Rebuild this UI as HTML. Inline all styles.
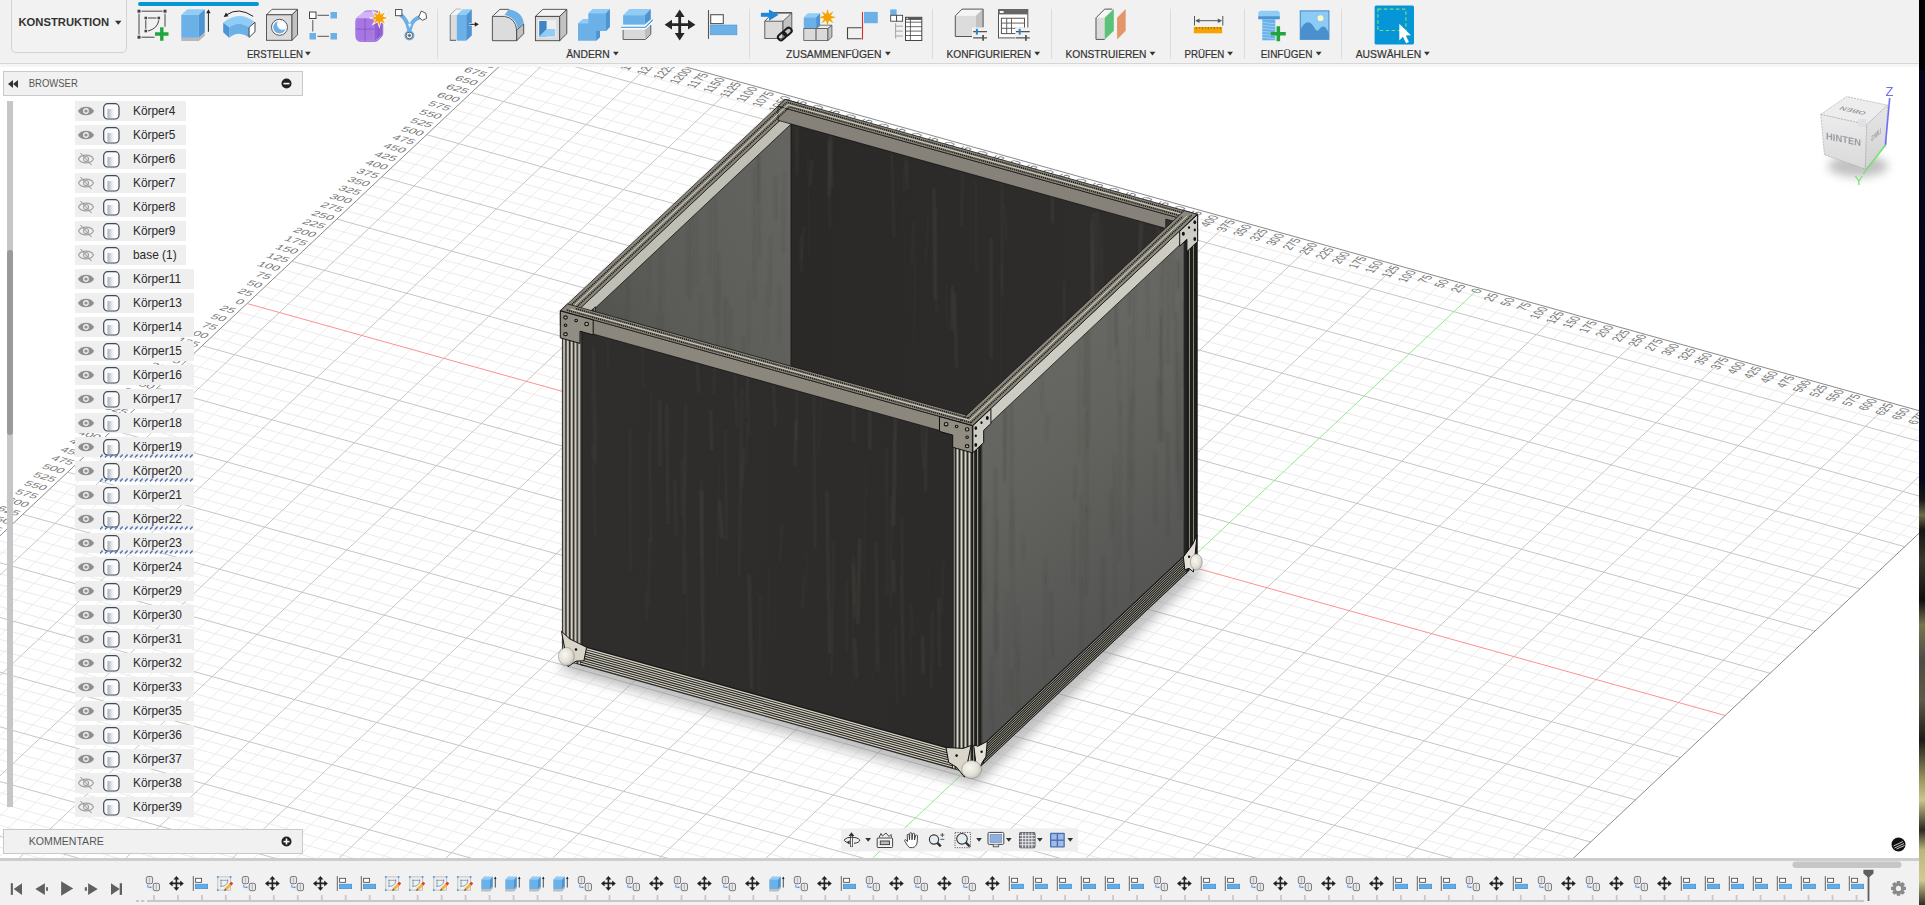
<!DOCTYPE html>
<html><head><meta charset="utf-8"><style>
*{margin:0;padding:0;box-sizing:border-box}
html,body{width:1925px;height:905px;overflow:hidden;background:#fff;font-family:"Liberation Sans", sans-serif}
#app{position:absolute;left:0;top:0;width:1919px;height:905px;overflow:hidden;background:#fff}
#strip{position:absolute;left:1919px;top:0;width:6px;height:905px;background:linear-gradient(180deg,#000 0,#000 70px,#03051a 70px,#050818 480px,#1a1a16 500px,#6e6a4a 515px,#151512 530px,#3a382c 560px,#0e0e0c 600px,#77744f 625px,#4d4b44 660px,#5e5a48 700px,#1a1a18 740px,#9a9660 780px,#c9c58c 800px,#2a2820 830px,#b9b57c 850px,#d0cc90 880px,#2e2c22 905px)}
#tb{position:absolute;left:0;top:0;width:1919px;height:64px;background:#f1f1f1;border-bottom:1px solid #d6d6d6}
#tb2{position:absolute;left:0;top:64px;width:1919px;height:3px;background:#f6f6f6}
.lbl{position:absolute;top:47px;font-size:10.6px;color:#3a3a3a;white-space:nowrap;letter-spacing:0.1px}
.sep{position:absolute;top:9px;width:1px;height:50px;background:#dcdcdc}
.ico{position:absolute}
#konst{position:absolute;left:11px;top:-6px;width:116px;height:59px;border:1px solid #d3d3d3;border-radius:5px;background:#f2f2f2}
.panel{position:absolute;left:3px;width:300px;height:25px;background:#f1f1f1;border:1px solid #c9c9c9}
.row{position:absolute;left:75px;height:20px;background:#efefef}
.rowt{position:absolute;left:58px;top:3px;line-height:14px;font-size:11.9px;color:#2a2a2a;white-space:nowrap}
#tl{position:absolute;left:0;top:858px;width:1919px;height:47px;background:#f1f1f1}
#nav{position:absolute;left:842px;top:828px;width:236px;height:24px;background:#eeeeee}
</style></head>
<body><div id="app">
<svg id="vp" width="1919" height="905" viewBox="0 0 1919 905" style="position:absolute;left:0;top:0">

<defs>
<filter id="blur" x="-20%" y="-20%" width="140%" height="140%"><feGaussianBlur stdDeviation="6"/></filter><filter id="soft" x="-5%" y="-5%" width="110%" height="110%"><feGaussianBlur stdDeviation="1.3"/></filter>
<linearGradient id="gInnerL" x1="0.9" y1="0" x2="0.1" y2="1"><stop offset="0" stop-color="#646560"/><stop offset="0.45" stop-color="#5b5c57"/><stop offset="0.8" stop-color="#4a4a47"/><stop offset="1" stop-color="#353533"/></linearGradient>
<linearGradient id="gInnerR" x1="0" y1="0" x2="1" y2="0"><stop offset="0" stop-color="#2a2927"/><stop offset="1" stop-color="#2f2e2c"/></linearGradient>
<linearGradient id="gFrontL" x1="0" y1="0" x2="1" y2="0"><stop offset="0" stop-color="#2f2e2c"/><stop offset="1" stop-color="#2c2b29"/></linearGradient>
<linearGradient id="gFrontR" x1="0" y1="0" x2="0.3" y2="1"><stop offset="0" stop-color="#6e6e6a"/><stop offset="0.5" stop-color="#62625e"/><stop offset="1" stop-color="#505050"/></linearGradient>
<pattern id="gPostL" patternUnits="userSpaceOnUse" width="3.8" height="10"><rect width="3.8" height="10" fill="#2a2a28"/><rect x="0.6" width="2" height="10" fill="#d9d5c6"/></pattern>
<pattern id="gPostL2" patternUnits="userSpaceOnUse" width="3.8" height="10"><rect width="3.8" height="10" fill="#1e1e1c"/><rect x="1" width="1.4" height="10" fill="#a9a597"/></pattern>
<radialGradient id="gBall" cx="0.4" cy="0.4" r="0.7"><stop offset="0" stop-color="#f8f8f2"/><stop offset="0.6" stop-color="#e2e0d6"/><stop offset="1" stop-color="#b9b7ad"/></radialGradient>
<pattern id="gPostF" patternUnits="userSpaceOnUse" width="4" height="10"><rect width="4" height="10" fill="#2a2a28"/><rect x="0.5" width="2" height="10" fill="#d9d5c6"/></pattern>
<pattern id="gPostF2" patternUnits="userSpaceOnUse" width="4" height="10"><rect width="4" height="10" fill="#1e1e1c"/><rect x="1" width="1.2" height="10" fill="#9a978c"/></pattern>
<pattern id="gPostR" patternUnits="userSpaceOnUse" width="4" height="10"><rect width="4" height="10" fill="#1e1e1c"/><rect x="1" width="1" height="10" fill="#8a877c"/></pattern>
<linearGradient id="gRailB" x1="0" y1="0" x2="0" y2="3" spreadMethod="repeat" gradientUnits="userSpaceOnUse"><stop offset="0" stop-color="#d8d4c4"/><stop offset="0.45" stop-color="#d8d4c4"/><stop offset="0.5" stop-color="#2a2a28"/><stop offset="1" stop-color="#2a2a28"/></linearGradient>
<linearGradient id="gRailB2" x1="0" y1="0" x2="0" y2="3" spreadMethod="repeat" gradientUnits="userSpaceOnUse"><stop offset="0" stop-color="#a8a597"/><stop offset="0.4" stop-color="#a8a597"/><stop offset="0.45" stop-color="#1e1e1c"/><stop offset="1" stop-color="#1e1e1c"/></linearGradient>
<linearGradient id="gTopStripe" x1="0" y1="0" x2="0" y2="1"><stop offset="0" stop-color="#3b3a36"/><stop offset="0.4" stop-color="#4a4843"/><stop offset="0.5" stop-color="#d2cebe"/><stop offset="0.6" stop-color="#4a4843"/><stop offset="1" stop-color="#3b3a36"/></linearGradient>
<linearGradient id="gTopStripe2" x1="0" y1="0" x2="1" y2="0"><stop offset="0" stop-color="#3b3a36"/><stop offset="0.4" stop-color="#4a4843"/><stop offset="0.5" stop-color="#d2cebe"/><stop offset="0.6" stop-color="#4a4843"/><stop offset="1" stop-color="#3b3a36"/></linearGradient>
</defs>

<clipPath id="vpclip"><rect x="0" y="66" width="1919" height="793"/></clipPath>
<g clip-path="url(#vpclip)">
<g shape-rendering="auto"><line x1="1137.0" y1="1251.6" x2="2005.8" y2="434.8" stroke="#ebebeb" stroke-width="1" />
<line x1="1120.6" y1="1247.0" x2="1989.3" y2="430.3" stroke="#ebebeb" stroke-width="1" />
<line x1="1087.6" y1="1237.8" x2="1956.4" y2="421.1" stroke="#ebebeb" stroke-width="1" />
<line x1="1071.2" y1="1233.2" x2="1940.0" y2="416.5" stroke="#ebebeb" stroke-width="1" />
<line x1="1054.7" y1="1228.7" x2="1923.5" y2="411.9" stroke="#ebebeb" stroke-width="1" />
<line x1="1038.3" y1="1224.1" x2="1907.0" y2="407.3" stroke="#ebebeb" stroke-width="1" />
<line x1="1005.3" y1="1214.9" x2="1874.1" y2="398.1" stroke="#ebebeb" stroke-width="1" />
<line x1="988.9" y1="1210.3" x2="1857.7" y2="393.6" stroke="#ebebeb" stroke-width="1" />
<line x1="972.4" y1="1205.7" x2="1841.2" y2="389.0" stroke="#ebebeb" stroke-width="1" />
<line x1="956.0" y1="1201.1" x2="1824.7" y2="384.4" stroke="#ebebeb" stroke-width="1" />
<line x1="923.0" y1="1192.0" x2="1791.8" y2="375.2" stroke="#ebebeb" stroke-width="1" />
<line x1="906.6" y1="1187.4" x2="1775.4" y2="370.6" stroke="#ebebeb" stroke-width="1" />
<line x1="890.1" y1="1182.8" x2="1758.9" y2="366.0" stroke="#ebebeb" stroke-width="1" />
<line x1="873.7" y1="1178.2" x2="1742.4" y2="361.4" stroke="#ebebeb" stroke-width="1" />
<line x1="840.7" y1="1169.0" x2="1709.5" y2="352.3" stroke="#ebebeb" stroke-width="1" />
<line x1="824.3" y1="1164.4" x2="1693.1" y2="347.7" stroke="#ebebeb" stroke-width="1" />
<line x1="807.8" y1="1159.8" x2="1676.6" y2="343.1" stroke="#ebebeb" stroke-width="1" />
<line x1="791.4" y1="1155.3" x2="1660.1" y2="338.5" stroke="#ebebeb" stroke-width="1" />
<line x1="758.4" y1="1146.1" x2="1627.2" y2="329.3" stroke="#ebebeb" stroke-width="1" />
<line x1="742.0" y1="1141.5" x2="1610.8" y2="324.8" stroke="#ebebeb" stroke-width="1" />
<line x1="725.5" y1="1136.9" x2="1594.3" y2="320.2" stroke="#ebebeb" stroke-width="1" />
<line x1="709.1" y1="1132.3" x2="1577.8" y2="315.6" stroke="#ebebeb" stroke-width="1" />
<line x1="676.1" y1="1123.2" x2="1544.9" y2="306.4" stroke="#ebebeb" stroke-width="1" />
<line x1="659.7" y1="1118.6" x2="1528.5" y2="301.8" stroke="#ebebeb" stroke-width="1" />
<line x1="643.2" y1="1114.0" x2="1512.0" y2="297.2" stroke="#ebebeb" stroke-width="1" />
<line x1="626.8" y1="1109.4" x2="1495.5" y2="292.6" stroke="#ebebeb" stroke-width="1" />
<line x1="593.8" y1="1100.2" x2="1462.6" y2="283.5" stroke="#ebebeb" stroke-width="1" />
<line x1="577.4" y1="1095.6" x2="1446.2" y2="278.9" stroke="#ebebeb" stroke-width="1" />
<line x1="560.9" y1="1091.0" x2="1429.7" y2="274.3" stroke="#ebebeb" stroke-width="1" />
<line x1="544.5" y1="1086.4" x2="1413.2" y2="269.7" stroke="#ebebeb" stroke-width="1" />
<line x1="511.5" y1="1077.3" x2="1380.3" y2="260.5" stroke="#ebebeb" stroke-width="1" />
<line x1="495.1" y1="1072.7" x2="1363.9" y2="255.9" stroke="#ebebeb" stroke-width="1" />
<line x1="478.6" y1="1068.1" x2="1347.4" y2="251.3" stroke="#ebebeb" stroke-width="1" />
<line x1="462.2" y1="1063.5" x2="1330.9" y2="246.8" stroke="#ebebeb" stroke-width="1" />
<line x1="429.2" y1="1054.3" x2="1298.0" y2="237.6" stroke="#ebebeb" stroke-width="1" />
<line x1="412.8" y1="1049.8" x2="1281.6" y2="233.0" stroke="#ebebeb" stroke-width="1" />
<line x1="396.3" y1="1045.2" x2="1265.1" y2="228.4" stroke="#ebebeb" stroke-width="1" />
<line x1="379.9" y1="1040.6" x2="1248.6" y2="223.8" stroke="#ebebeb" stroke-width="1" />
<line x1="346.9" y1="1031.4" x2="1215.7" y2="214.6" stroke="#ebebeb" stroke-width="1" />
<line x1="330.5" y1="1026.8" x2="1199.3" y2="210.1" stroke="#ebebeb" stroke-width="1" />
<line x1="314.0" y1="1022.2" x2="1182.8" y2="205.5" stroke="#ebebeb" stroke-width="1" />
<line x1="297.6" y1="1017.6" x2="1166.3" y2="200.9" stroke="#ebebeb" stroke-width="1" />
<line x1="264.6" y1="1008.5" x2="1133.4" y2="191.7" stroke="#ebebeb" stroke-width="1" />
<line x1="248.2" y1="1003.9" x2="1117.0" y2="187.1" stroke="#ebebeb" stroke-width="1" />
<line x1="231.7" y1="999.3" x2="1100.5" y2="182.5" stroke="#ebebeb" stroke-width="1" />
<line x1="215.3" y1="994.7" x2="1084.0" y2="177.9" stroke="#ebebeb" stroke-width="1" />
<line x1="182.3" y1="985.5" x2="1051.1" y2="168.8" stroke="#ebebeb" stroke-width="1" />
<line x1="165.9" y1="980.9" x2="1034.7" y2="164.2" stroke="#ebebeb" stroke-width="1" />
<line x1="149.4" y1="976.3" x2="1018.2" y2="159.6" stroke="#ebebeb" stroke-width="1" />
<line x1="133.0" y1="971.8" x2="1001.7" y2="155.0" stroke="#ebebeb" stroke-width="1" />
<line x1="100.0" y1="962.6" x2="968.8" y2="145.8" stroke="#ebebeb" stroke-width="1" />
<line x1="83.6" y1="958.0" x2="952.4" y2="141.2" stroke="#ebebeb" stroke-width="1" />
<line x1="67.1" y1="953.4" x2="935.9" y2="136.7" stroke="#ebebeb" stroke-width="1" />
<line x1="50.7" y1="948.8" x2="919.4" y2="132.1" stroke="#ebebeb" stroke-width="1" />
<line x1="17.7" y1="939.6" x2="886.5" y2="122.9" stroke="#ebebeb" stroke-width="1" />
<line x1="1.3" y1="935.1" x2="870.1" y2="118.3" stroke="#ebebeb" stroke-width="1" />
<line x1="-15.2" y1="930.5" x2="853.6" y2="113.7" stroke="#ebebeb" stroke-width="1" />
<line x1="-31.6" y1="925.9" x2="837.1" y2="109.1" stroke="#ebebeb" stroke-width="1" />
<line x1="-64.6" y1="916.7" x2="804.2" y2="100.0" stroke="#ebebeb" stroke-width="1" />
<line x1="-81.0" y1="912.1" x2="787.8" y2="95.4" stroke="#ebebeb" stroke-width="1" />
<line x1="-97.5" y1="907.5" x2="771.3" y2="90.8" stroke="#ebebeb" stroke-width="1" />
<line x1="-113.9" y1="902.9" x2="754.8" y2="86.2" stroke="#ebebeb" stroke-width="1" />
<line x1="-146.9" y1="893.8" x2="721.9" y2="77.0" stroke="#ebebeb" stroke-width="1" />
<line x1="-163.3" y1="889.2" x2="705.5" y2="72.4" stroke="#ebebeb" stroke-width="1" />
<line x1="-179.8" y1="884.6" x2="689.0" y2="67.8" stroke="#ebebeb" stroke-width="1" />
<line x1="-196.2" y1="880.0" x2="672.5" y2="63.3" stroke="#ebebeb" stroke-width="1" />
<line x1="-229.2" y1="870.8" x2="639.6" y2="54.1" stroke="#ebebeb" stroke-width="1" />
<line x1="-245.6" y1="866.2" x2="623.2" y2="49.5" stroke="#ebebeb" stroke-width="1" />
<line x1="-262.1" y1="861.7" x2="606.7" y2="44.9" stroke="#ebebeb" stroke-width="1" />
<line x1="-278.5" y1="857.1" x2="590.2" y2="40.3" stroke="#ebebeb" stroke-width="1" />
<line x1="-311.5" y1="847.9" x2="557.3" y2="31.1" stroke="#ebebeb" stroke-width="1" />
<line x1="1150.8" y1="1255.5" x2="-327.3" y2="843.5" stroke="#ebebeb" stroke-width="1" />
<line x1="1159.8" y1="1247.0" x2="-318.3" y2="835.1" stroke="#ebebeb" stroke-width="1" />
<line x1="1168.8" y1="1238.6" x2="-309.3" y2="826.6" stroke="#ebebeb" stroke-width="1" />
<line x1="1177.8" y1="1230.1" x2="-300.3" y2="818.2" stroke="#ebebeb" stroke-width="1" />
<line x1="1195.7" y1="1213.3" x2="-282.4" y2="801.3" stroke="#ebebeb" stroke-width="1" />
<line x1="1204.7" y1="1204.8" x2="-273.4" y2="792.9" stroke="#ebebeb" stroke-width="1" />
<line x1="1213.7" y1="1196.4" x2="-264.4" y2="784.4" stroke="#ebebeb" stroke-width="1" />
<line x1="1222.6" y1="1188.0" x2="-255.5" y2="776.0" stroke="#ebebeb" stroke-width="1" />
<line x1="1240.6" y1="1171.1" x2="-237.5" y2="759.1" stroke="#ebebeb" stroke-width="1" />
<line x1="1249.6" y1="1162.6" x2="-228.5" y2="750.7" stroke="#ebebeb" stroke-width="1" />
<line x1="1258.5" y1="1154.2" x2="-219.6" y2="742.2" stroke="#ebebeb" stroke-width="1" />
<line x1="1267.5" y1="1145.8" x2="-210.6" y2="733.8" stroke="#ebebeb" stroke-width="1" />
<line x1="1285.5" y1="1128.9" x2="-192.6" y2="716.9" stroke="#ebebeb" stroke-width="1" />
<line x1="1294.4" y1="1120.5" x2="-183.7" y2="708.5" stroke="#ebebeb" stroke-width="1" />
<line x1="1303.4" y1="1112.0" x2="-174.7" y2="700.1" stroke="#ebebeb" stroke-width="1" />
<line x1="1312.4" y1="1103.6" x2="-165.7" y2="691.6" stroke="#ebebeb" stroke-width="1" />
<line x1="1330.3" y1="1086.7" x2="-147.8" y2="674.7" stroke="#ebebeb" stroke-width="1" />
<line x1="1339.3" y1="1078.3" x2="-138.8" y2="666.3" stroke="#ebebeb" stroke-width="1" />
<line x1="1348.3" y1="1069.8" x2="-129.8" y2="657.9" stroke="#ebebeb" stroke-width="1" />
<line x1="1357.3" y1="1061.4" x2="-120.8" y2="649.4" stroke="#ebebeb" stroke-width="1" />
<line x1="1375.2" y1="1044.5" x2="-102.9" y2="632.6" stroke="#ebebeb" stroke-width="1" />
<line x1="1384.2" y1="1036.1" x2="-93.9" y2="624.1" stroke="#ebebeb" stroke-width="1" />
<line x1="1393.2" y1="1027.6" x2="-84.9" y2="615.7" stroke="#ebebeb" stroke-width="1" />
<line x1="1402.1" y1="1019.2" x2="-76.0" y2="607.2" stroke="#ebebeb" stroke-width="1" />
<line x1="1420.1" y1="1002.3" x2="-58.0" y2="590.4" stroke="#ebebeb" stroke-width="1" />
<line x1="1429.1" y1="993.9" x2="-49.0" y2="581.9" stroke="#ebebeb" stroke-width="1" />
<line x1="1438.0" y1="985.5" x2="-40.1" y2="573.5" stroke="#ebebeb" stroke-width="1" />
<line x1="1447.0" y1="977.0" x2="-31.1" y2="565.1" stroke="#ebebeb" stroke-width="1" />
<line x1="1465.0" y1="960.1" x2="-13.1" y2="548.2" stroke="#ebebeb" stroke-width="1" />
<line x1="1473.9" y1="951.7" x2="-4.2" y2="539.7" stroke="#ebebeb" stroke-width="1" />
<line x1="1482.9" y1="943.3" x2="4.8" y2="531.3" stroke="#ebebeb" stroke-width="1" />
<line x1="1491.9" y1="934.8" x2="13.8" y2="522.9" stroke="#ebebeb" stroke-width="1" />
<line x1="1509.8" y1="918.0" x2="31.7" y2="506.0" stroke="#ebebeb" stroke-width="1" />
<line x1="1518.8" y1="909.5" x2="40.7" y2="497.6" stroke="#ebebeb" stroke-width="1" />
<line x1="1527.8" y1="901.1" x2="49.7" y2="489.1" stroke="#ebebeb" stroke-width="1" />
<line x1="1536.8" y1="892.6" x2="58.7" y2="480.7" stroke="#ebebeb" stroke-width="1" />
<line x1="1554.7" y1="875.8" x2="76.6" y2="463.8" stroke="#ebebeb" stroke-width="1" />
<line x1="1563.7" y1="867.3" x2="85.6" y2="455.4" stroke="#ebebeb" stroke-width="1" />
<line x1="1572.7" y1="858.9" x2="94.6" y2="446.9" stroke="#ebebeb" stroke-width="1" />
<line x1="1581.6" y1="850.5" x2="103.5" y2="438.5" stroke="#ebebeb" stroke-width="1" />
<line x1="1599.6" y1="833.6" x2="121.5" y2="421.6" stroke="#ebebeb" stroke-width="1" />
<line x1="1608.6" y1="825.1" x2="130.5" y2="413.2" stroke="#ebebeb" stroke-width="1" />
<line x1="1617.5" y1="816.7" x2="139.4" y2="404.7" stroke="#ebebeb" stroke-width="1" />
<line x1="1626.5" y1="808.3" x2="148.4" y2="396.3" stroke="#ebebeb" stroke-width="1" />
<line x1="1644.5" y1="791.4" x2="166.4" y2="379.4" stroke="#ebebeb" stroke-width="1" />
<line x1="1653.4" y1="783.0" x2="175.3" y2="371.0" stroke="#ebebeb" stroke-width="1" />
<line x1="1662.4" y1="774.5" x2="184.3" y2="362.6" stroke="#ebebeb" stroke-width="1" />
<line x1="1671.4" y1="766.1" x2="193.3" y2="354.1" stroke="#ebebeb" stroke-width="1" />
<line x1="1689.3" y1="749.2" x2="211.2" y2="337.2" stroke="#ebebeb" stroke-width="1" />
<line x1="1698.3" y1="740.8" x2="220.2" y2="328.8" stroke="#ebebeb" stroke-width="1" />
<line x1="1707.3" y1="732.3" x2="229.2" y2="320.4" stroke="#ebebeb" stroke-width="1" />
<line x1="1716.3" y1="723.9" x2="238.2" y2="311.9" stroke="#ebebeb" stroke-width="1" />
<line x1="1734.2" y1="707.0" x2="256.1" y2="295.1" stroke="#ebebeb" stroke-width="1" />
<line x1="1743.2" y1="698.6" x2="265.1" y2="286.6" stroke="#ebebeb" stroke-width="1" />
<line x1="1752.2" y1="690.1" x2="274.1" y2="278.2" stroke="#ebebeb" stroke-width="1" />
<line x1="1761.1" y1="681.7" x2="283.0" y2="269.7" stroke="#ebebeb" stroke-width="1" />
<line x1="1779.1" y1="664.8" x2="301.0" y2="252.9" stroke="#ebebeb" stroke-width="1" />
<line x1="1788.1" y1="656.4" x2="310.0" y2="244.4" stroke="#ebebeb" stroke-width="1" />
<line x1="1797.0" y1="648.0" x2="318.9" y2="236.0" stroke="#ebebeb" stroke-width="1" />
<line x1="1806.0" y1="639.5" x2="327.9" y2="227.6" stroke="#ebebeb" stroke-width="1" />
<line x1="1824.0" y1="622.6" x2="345.9" y2="210.7" stroke="#ebebeb" stroke-width="1" />
<line x1="1832.9" y1="614.2" x2="354.8" y2="202.2" stroke="#ebebeb" stroke-width="1" />
<line x1="1841.9" y1="605.8" x2="363.8" y2="193.8" stroke="#ebebeb" stroke-width="1" />
<line x1="1850.9" y1="597.3" x2="372.8" y2="185.4" stroke="#ebebeb" stroke-width="1" />
<line x1="1868.8" y1="580.5" x2="390.7" y2="168.5" stroke="#ebebeb" stroke-width="1" />
<line x1="1877.8" y1="572.0" x2="399.7" y2="160.1" stroke="#ebebeb" stroke-width="1" />
<line x1="1886.8" y1="563.6" x2="408.7" y2="151.6" stroke="#ebebeb" stroke-width="1" />
<line x1="1895.8" y1="555.1" x2="417.7" y2="143.2" stroke="#ebebeb" stroke-width="1" />
<line x1="1913.7" y1="538.3" x2="435.6" y2="126.3" stroke="#ebebeb" stroke-width="1" />
<line x1="1922.7" y1="529.8" x2="444.6" y2="117.9" stroke="#ebebeb" stroke-width="1" />
<line x1="1931.7" y1="521.4" x2="453.6" y2="109.4" stroke="#ebebeb" stroke-width="1" />
<line x1="1940.6" y1="513.0" x2="462.5" y2="101.0" stroke="#ebebeb" stroke-width="1" />
<line x1="1958.6" y1="496.1" x2="480.5" y2="84.1" stroke="#ebebeb" stroke-width="1" />
<line x1="1967.6" y1="487.6" x2="489.5" y2="75.7" stroke="#ebebeb" stroke-width="1" />
<line x1="1976.5" y1="479.2" x2="498.4" y2="67.2" stroke="#ebebeb" stroke-width="1" />
<line x1="1985.5" y1="470.8" x2="507.4" y2="58.8" stroke="#ebebeb" stroke-width="1" />
<line x1="2003.5" y1="453.9" x2="525.4" y2="41.9" stroke="#ebebeb" stroke-width="1" />
<line x1="2012.4" y1="445.5" x2="534.3" y2="33.5" stroke="#ebebeb" stroke-width="1" />
<line x1="1104.1" y1="1242.4" x2="1972.9" y2="425.7" stroke="#c6c6c6" stroke-width="1" />
<line x1="1021.8" y1="1219.5" x2="1890.6" y2="402.7" stroke="#c6c6c6" stroke-width="1" />
<line x1="939.5" y1="1196.5" x2="1808.3" y2="379.8" stroke="#c6c6c6" stroke-width="1" />
<line x1="857.2" y1="1173.6" x2="1726.0" y2="356.9" stroke="#c6c6c6" stroke-width="1" />
<line x1="774.9" y1="1150.7" x2="1643.7" y2="333.9" stroke="#c6c6c6" stroke-width="1" />
<line x1="692.6" y1="1127.7" x2="1561.4" y2="311.0" stroke="#c6c6c6" stroke-width="1" />
<line x1="528.0" y1="1081.9" x2="1396.8" y2="265.1" stroke="#c6c6c6" stroke-width="1" />
<line x1="445.7" y1="1058.9" x2="1314.5" y2="242.2" stroke="#c6c6c6" stroke-width="1" />
<line x1="363.4" y1="1036.0" x2="1232.2" y2="219.2" stroke="#c6c6c6" stroke-width="1" />
<line x1="281.1" y1="1013.0" x2="1149.9" y2="196.3" stroke="#c6c6c6" stroke-width="1" />
<line x1="198.8" y1="990.1" x2="1067.6" y2="173.4" stroke="#c6c6c6" stroke-width="1" />
<line x1="116.5" y1="967.2" x2="985.3" y2="150.4" stroke="#c6c6c6" stroke-width="1" />
<line x1="34.2" y1="944.2" x2="903.0" y2="127.5" stroke="#c6c6c6" stroke-width="1" />
<line x1="-48.1" y1="921.3" x2="820.7" y2="104.5" stroke="#c6c6c6" stroke-width="1" />
<line x1="-130.4" y1="898.4" x2="738.4" y2="81.6" stroke="#c6c6c6" stroke-width="1" />
<line x1="-212.7" y1="875.4" x2="656.1" y2="58.7" stroke="#c6c6c6" stroke-width="1" />
<line x1="-295.0" y1="852.5" x2="573.8" y2="35.7" stroke="#c6c6c6" stroke-width="1" />
<line x1="1186.7" y1="1221.7" x2="-291.4" y2="809.7" stroke="#c6c6c6" stroke-width="1" />
<line x1="1231.6" y1="1179.5" x2="-246.5" y2="767.6" stroke="#c6c6c6" stroke-width="1" />
<line x1="1276.5" y1="1137.3" x2="-201.6" y2="725.4" stroke="#c6c6c6" stroke-width="1" />
<line x1="1321.4" y1="1095.1" x2="-156.7" y2="683.2" stroke="#c6c6c6" stroke-width="1" />
<line x1="1366.2" y1="1053.0" x2="-111.9" y2="641.0" stroke="#c6c6c6" stroke-width="1" />
<line x1="1411.1" y1="1010.8" x2="-67.0" y2="598.8" stroke="#c6c6c6" stroke-width="1" />
<line x1="1456.0" y1="968.6" x2="-22.1" y2="556.6" stroke="#c6c6c6" stroke-width="1" />
<line x1="1500.9" y1="926.4" x2="22.8" y2="514.4" stroke="#c6c6c6" stroke-width="1" />
<line x1="1545.7" y1="884.2" x2="67.6" y2="472.2" stroke="#c6c6c6" stroke-width="1" />
<line x1="1590.6" y1="842.0" x2="112.5" y2="430.1" stroke="#c6c6c6" stroke-width="1" />
<line x1="1635.5" y1="799.8" x2="157.4" y2="387.9" stroke="#c6c6c6" stroke-width="1" />
<line x1="1680.4" y1="757.6" x2="202.3" y2="345.7" stroke="#c6c6c6" stroke-width="1" />
<line x1="1770.1" y1="673.3" x2="292.0" y2="261.3" stroke="#c6c6c6" stroke-width="1" />
<line x1="1815.0" y1="631.1" x2="336.9" y2="219.1" stroke="#c6c6c6" stroke-width="1" />
<line x1="1859.9" y1="588.9" x2="381.8" y2="176.9" stroke="#c6c6c6" stroke-width="1" />
<line x1="1904.7" y1="546.7" x2="426.6" y2="134.7" stroke="#c6c6c6" stroke-width="1" />
<line x1="1949.6" y1="504.5" x2="471.5" y2="92.6" stroke="#c6c6c6" stroke-width="1" />
<line x1="1994.5" y1="462.3" x2="516.4" y2="50.4" stroke="#c6c6c6" stroke-width="1" />
<line x1="-327.3" y1="843.5" x2="541.5" y2="26.7" stroke="#8a8a8a" stroke-width="1" />
<line x1="2019.6" y1="438.7" x2="541.5" y2="26.7" stroke="#8a8a8a" stroke-width="1" />
<line x1="1150.8" y1="1255.5" x2="2019.6" y2="438.7" stroke="#8a8a8a" stroke-width="1" />
<line x1="1725.2" y1="715.5" x2="247.1" y2="303.5" stroke="#ff9090" stroke-width="1.0" />
<line x1="610.3" y1="1104.8" x2="1479.1" y2="288.0" stroke="#90ea90" stroke-width="1.0" /></g>
<g font-family="Liberation Sans, sans-serif" font-size="19.0" fill="#747474"><text transform="matrix(0.6584,0.1835,-0.3590,0.3375,-333.1,844.9)" text-anchor="end">1600</text>
<text transform="matrix(0.6584,0.1835,-0.3590,0.3375,-324.1,836.5)" text-anchor="end">1575</text>
<text transform="matrix(0.6584,0.1835,-0.3590,0.3375,-315.1,828.1)" text-anchor="end">1550</text>
<text transform="matrix(0.6584,0.1835,-0.3590,0.3375,-306.1,819.6)" text-anchor="end">1525</text>
<text transform="matrix(0.6584,0.1835,-0.3590,0.3375,-297.2,811.2)" text-anchor="end">1500</text>
<text transform="matrix(0.6584,0.1835,-0.3590,0.3375,-288.2,802.8)" text-anchor="end">1475</text>
<text transform="matrix(0.6584,0.1835,-0.3590,0.3375,-279.2,794.3)" text-anchor="end">1450</text>
<text transform="matrix(0.6584,0.1835,-0.3590,0.3375,-270.2,785.9)" text-anchor="end">1425</text>
<text transform="matrix(0.6584,0.1835,-0.3590,0.3375,-261.3,777.4)" text-anchor="end">1400</text>
<text transform="matrix(0.6584,0.1835,-0.3590,0.3375,-252.3,769.0)" text-anchor="end">1375</text>
<text transform="matrix(0.6584,0.1835,-0.3590,0.3375,-243.3,760.6)" text-anchor="end">1350</text>
<text transform="matrix(0.6584,0.1835,-0.3590,0.3375,-234.3,752.1)" text-anchor="end">1325</text>
<text transform="matrix(0.6584,0.1835,-0.3590,0.3375,-225.4,743.7)" text-anchor="end">1300</text>
<text transform="matrix(0.6584,0.1835,-0.3590,0.3375,-216.4,735.3)" text-anchor="end">1275</text>
<text transform="matrix(0.6584,0.1835,-0.3590,0.3375,-207.4,726.8)" text-anchor="end">1250</text>
<text transform="matrix(0.6584,0.1835,-0.3590,0.3375,-198.4,718.4)" text-anchor="end">1225</text>
<text transform="matrix(0.6584,0.1835,-0.3590,0.3375,-189.5,709.9)" text-anchor="end">1200</text>
<text transform="matrix(0.6584,0.1835,-0.3590,0.3375,-180.5,701.5)" text-anchor="end">1175</text>
<text transform="matrix(0.6584,0.1835,-0.3590,0.3375,-171.5,693.1)" text-anchor="end">1150</text>
<text transform="matrix(0.6584,0.1835,-0.3590,0.3375,-162.5,684.6)" text-anchor="end">1125</text>
<text transform="matrix(0.6584,0.1835,-0.3590,0.3375,-153.6,676.2)" text-anchor="end">1100</text>
<text transform="matrix(0.6584,0.1835,-0.3590,0.3375,-144.6,667.8)" text-anchor="end">1075</text>
<text transform="matrix(0.6584,0.1835,-0.3590,0.3375,-135.6,659.3)" text-anchor="end">1050</text>
<text transform="matrix(0.6584,0.1835,-0.3590,0.3375,-126.6,650.9)" text-anchor="end">1025</text>
<text transform="matrix(0.6584,0.1835,-0.3590,0.3375,-117.7,642.4)" text-anchor="end">1000</text>
<text transform="matrix(0.6584,0.1835,-0.3590,0.3375,-108.7,634.0)" text-anchor="end">975</text>
<text transform="matrix(0.6584,0.1835,-0.3590,0.3375,-99.7,625.6)" text-anchor="end">950</text>
<text transform="matrix(0.6584,0.1835,-0.3590,0.3375,-90.7,617.1)" text-anchor="end">925</text>
<text transform="matrix(0.6584,0.1835,-0.3590,0.3375,-81.8,608.7)" text-anchor="end">900</text>
<text transform="matrix(0.6584,0.1835,-0.3590,0.3375,-72.8,600.3)" text-anchor="end">875</text>
<text transform="matrix(0.6584,0.1835,-0.3590,0.3375,-63.8,591.8)" text-anchor="end">850</text>
<text transform="matrix(0.6584,0.1835,-0.3590,0.3375,-54.8,583.4)" text-anchor="end">825</text>
<text transform="matrix(0.6584,0.1835,-0.3590,0.3375,-45.9,574.9)" text-anchor="end">800</text>
<text transform="matrix(0.6584,0.1835,-0.3590,0.3375,-36.9,566.5)" text-anchor="end">775</text>
<text transform="matrix(0.6584,0.1835,-0.3590,0.3375,-27.9,558.1)" text-anchor="end">750</text>
<text transform="matrix(0.6584,0.1835,-0.3590,0.3375,-18.9,549.6)" text-anchor="end">725</text>
<text transform="matrix(0.6584,0.1835,-0.3590,0.3375,-10.0,541.2)" text-anchor="end">700</text>
<text transform="matrix(0.6584,0.1835,-0.3590,0.3375,-1.0,532.8)" text-anchor="end">675</text>
<text transform="matrix(0.6584,0.1835,-0.3590,0.3375,8.0,524.3)" text-anchor="end">650</text>
<text transform="matrix(0.6584,0.1835,-0.3590,0.3375,17.0,515.9)" text-anchor="end">625</text>
<text transform="matrix(0.6584,0.1835,-0.3590,0.3375,25.9,507.4)" text-anchor="end">600</text>
<text transform="matrix(0.6584,0.1835,-0.3590,0.3375,34.9,499.0)" text-anchor="end">575</text>
<text transform="matrix(0.6584,0.1835,-0.3590,0.3375,43.9,490.6)" text-anchor="end">550</text>
<text transform="matrix(0.6584,0.1835,-0.3590,0.3375,52.9,482.1)" text-anchor="end">525</text>
<text transform="matrix(0.6584,0.1835,-0.3590,0.3375,61.8,473.7)" text-anchor="end">500</text>
<text transform="matrix(0.6584,0.1835,-0.3590,0.3375,70.8,465.3)" text-anchor="end">475</text>
<text transform="matrix(0.6584,0.1835,-0.3590,0.3375,79.8,456.8)" text-anchor="end">450</text>
<text transform="matrix(0.6584,0.1835,-0.3590,0.3375,88.8,448.4)" text-anchor="end">425</text>
<text transform="matrix(0.6584,0.1835,-0.3590,0.3375,97.7,439.9)" text-anchor="end">400</text>
<text transform="matrix(0.6584,0.1835,-0.3590,0.3375,106.7,431.5)" text-anchor="end">375</text>
<text transform="matrix(0.6584,0.1835,-0.3590,0.3375,115.7,423.1)" text-anchor="end">350</text>
<text transform="matrix(0.6584,0.1835,-0.3590,0.3375,124.7,414.6)" text-anchor="end">325</text>
<text transform="matrix(0.6584,0.1835,-0.3590,0.3375,133.6,406.2)" text-anchor="end">300</text>
<text transform="matrix(0.6584,0.1835,-0.3590,0.3375,142.6,397.8)" text-anchor="end">275</text>
<text transform="matrix(0.6584,0.1835,-0.3590,0.3375,151.6,389.3)" text-anchor="end">250</text>
<text transform="matrix(0.6584,0.1835,-0.3590,0.3375,160.6,380.9)" text-anchor="end">225</text>
<text transform="matrix(0.6584,0.1835,-0.3590,0.3375,169.5,372.4)" text-anchor="end">200</text>
<text transform="matrix(0.6584,0.1835,-0.3590,0.3375,178.5,364.0)" text-anchor="end">175</text>
<text transform="matrix(0.6584,0.1835,-0.3590,0.3375,187.5,355.6)" text-anchor="end">150</text>
<text transform="matrix(0.6584,0.1835,-0.3590,0.3375,196.5,347.1)" text-anchor="end">125</text>
<text transform="matrix(0.6584,0.1835,-0.3590,0.3375,205.4,338.7)" text-anchor="end">100</text>
<text transform="matrix(0.6584,0.1835,-0.3590,0.3375,214.4,330.3)" text-anchor="end">75</text>
<text transform="matrix(0.6584,0.1835,-0.3590,0.3375,223.4,321.8)" text-anchor="end">50</text>
<text transform="matrix(0.6584,0.1835,-0.3590,0.3375,232.4,313.4)" text-anchor="end">25</text>
<text transform="matrix(0.6584,0.1835,-0.3590,0.3375,241.3,304.9)" text-anchor="end">0</text>
<text transform="matrix(0.6584,0.1835,-0.3590,0.3375,250.3,296.5)" text-anchor="end">25</text>
<text transform="matrix(0.6584,0.1835,-0.3590,0.3375,259.3,288.1)" text-anchor="end">50</text>
<text transform="matrix(0.6584,0.1835,-0.3590,0.3375,268.3,279.6)" text-anchor="end">75</text>
<text transform="matrix(0.6584,0.1835,-0.3590,0.3375,277.2,271.2)" text-anchor="end">100</text>
<text transform="matrix(0.6584,0.1835,-0.3590,0.3375,286.2,262.8)" text-anchor="end">125</text>
<text transform="matrix(0.6584,0.1835,-0.3590,0.3375,295.2,254.3)" text-anchor="end">150</text>
<text transform="matrix(0.6584,0.1835,-0.3590,0.3375,304.2,245.9)" text-anchor="end">175</text>
<text transform="matrix(0.6584,0.1835,-0.3590,0.3375,313.1,237.4)" text-anchor="end">200</text>
<text transform="matrix(0.6584,0.1835,-0.3590,0.3375,322.1,229.0)" text-anchor="end">225</text>
<text transform="matrix(0.6584,0.1835,-0.3590,0.3375,331.1,220.6)" text-anchor="end">250</text>
<text transform="matrix(0.6584,0.1835,-0.3590,0.3375,340.1,212.1)" text-anchor="end">275</text>
<text transform="matrix(0.6584,0.1835,-0.3590,0.3375,349.0,203.7)" text-anchor="end">300</text>
<text transform="matrix(0.6584,0.1835,-0.3590,0.3375,358.0,195.3)" text-anchor="end">325</text>
<text transform="matrix(0.6584,0.1835,-0.3590,0.3375,367.0,186.8)" text-anchor="end">350</text>
<text transform="matrix(0.6584,0.1835,-0.3590,0.3375,376.0,178.4)" text-anchor="end">375</text>
<text transform="matrix(0.6584,0.1835,-0.3590,0.3375,384.9,169.9)" text-anchor="end">400</text>
<text transform="matrix(0.6584,0.1835,-0.3590,0.3375,393.9,161.5)" text-anchor="end">425</text>
<text transform="matrix(0.6584,0.1835,-0.3590,0.3375,402.9,153.1)" text-anchor="end">450</text>
<text transform="matrix(0.6584,0.1835,-0.3590,0.3375,411.9,144.6)" text-anchor="end">475</text>
<text transform="matrix(0.6584,0.1835,-0.3590,0.3375,420.8,136.2)" text-anchor="end">500</text>
<text transform="matrix(0.6584,0.1835,-0.3590,0.3375,429.8,127.8)" text-anchor="end">525</text>
<text transform="matrix(0.6584,0.1835,-0.3590,0.3375,438.8,119.3)" text-anchor="end">550</text>
<text transform="matrix(0.6584,0.1835,-0.3590,0.3375,447.8,110.9)" text-anchor="end">575</text>
<text transform="matrix(0.6584,0.1835,-0.3590,0.3375,456.7,102.4)" text-anchor="end">600</text>
<text transform="matrix(0.6584,0.1835,-0.3590,0.3375,465.7,94.0)" text-anchor="end">625</text>
<text transform="matrix(0.6584,0.1835,-0.3590,0.3375,474.7,85.6)" text-anchor="end">650</text>
<text transform="matrix(0.6584,0.1835,-0.3590,0.3375,483.7,77.1)" text-anchor="end">675</text>
<text transform="matrix(0.6584,0.1835,-0.3590,0.3375,492.6,68.7)" text-anchor="end">700</text>
<text transform="matrix(0.6584,0.1835,-0.3590,0.3375,501.6,60.3)" text-anchor="end">725</text>
<text transform="matrix(0.6584,0.1835,-0.3590,0.3375,510.6,51.8)" text-anchor="end">750</text>
<text transform="matrix(0.6584,0.1835,-0.3590,0.3375,519.6,43.4)" text-anchor="end">775</text>
<text transform="matrix(0.6584,0.1835,-0.3590,0.3375,528.5,34.9)" text-anchor="end">800</text>
<text transform="matrix(0.3590,-0.3375,0.6584,0.1835,2009.3,437.1)" text-anchor="end">800</text>
<text transform="matrix(0.3590,-0.3375,0.6584,0.1835,1992.9,432.6)" text-anchor="end">775</text>
<text transform="matrix(0.3590,-0.3375,0.6584,0.1835,1976.4,428.0)" text-anchor="end">750</text>
<text transform="matrix(0.3590,-0.3375,0.6584,0.1835,1960.0,423.4)" text-anchor="end">725</text>
<text transform="matrix(0.3590,-0.3375,0.6584,0.1835,1943.5,418.8)" text-anchor="end">700</text>
<text transform="matrix(0.3590,-0.3375,0.6584,0.1835,1927.0,414.2)" text-anchor="end">675</text>
<text transform="matrix(0.3590,-0.3375,0.6584,0.1835,1910.6,409.6)" text-anchor="end">650</text>
<text transform="matrix(0.3590,-0.3375,0.6584,0.1835,1894.1,405.0)" text-anchor="end">625</text>
<text transform="matrix(0.3590,-0.3375,0.6584,0.1835,1877.7,400.4)" text-anchor="end">600</text>
<text transform="matrix(0.3590,-0.3375,0.6584,0.1835,1861.2,395.9)" text-anchor="end">575</text>
<text transform="matrix(0.3590,-0.3375,0.6584,0.1835,1844.7,391.3)" text-anchor="end">550</text>
<text transform="matrix(0.3590,-0.3375,0.6584,0.1835,1828.3,386.7)" text-anchor="end">525</text>
<text transform="matrix(0.3590,-0.3375,0.6584,0.1835,1811.8,382.1)" text-anchor="end">500</text>
<text transform="matrix(0.3590,-0.3375,0.6584,0.1835,1795.4,377.5)" text-anchor="end">475</text>
<text transform="matrix(0.3590,-0.3375,0.6584,0.1835,1778.9,372.9)" text-anchor="end">450</text>
<text transform="matrix(0.3590,-0.3375,0.6584,0.1835,1762.4,368.3)" text-anchor="end">425</text>
<text transform="matrix(0.3590,-0.3375,0.6584,0.1835,1746.0,363.7)" text-anchor="end">400</text>
<text transform="matrix(0.3590,-0.3375,0.6584,0.1835,1729.5,359.2)" text-anchor="end">375</text>
<text transform="matrix(0.3590,-0.3375,0.6584,0.1835,1713.1,354.6)" text-anchor="end">350</text>
<text transform="matrix(0.3590,-0.3375,0.6584,0.1835,1696.6,350.0)" text-anchor="end">325</text>
<text transform="matrix(0.3590,-0.3375,0.6584,0.1835,1680.1,345.4)" text-anchor="end">300</text>
<text transform="matrix(0.3590,-0.3375,0.6584,0.1835,1663.7,340.8)" text-anchor="end">275</text>
<text transform="matrix(0.3590,-0.3375,0.6584,0.1835,1647.2,336.2)" text-anchor="end">250</text>
<text transform="matrix(0.3590,-0.3375,0.6584,0.1835,1630.8,331.6)" text-anchor="end">225</text>
<text transform="matrix(0.3590,-0.3375,0.6584,0.1835,1614.3,327.0)" text-anchor="end">200</text>
<text transform="matrix(0.3590,-0.3375,0.6584,0.1835,1597.8,322.5)" text-anchor="end">175</text>
<text transform="matrix(0.3590,-0.3375,0.6584,0.1835,1581.4,317.9)" text-anchor="end">150</text>
<text transform="matrix(0.3590,-0.3375,0.6584,0.1835,1564.9,313.3)" text-anchor="end">125</text>
<text transform="matrix(0.3590,-0.3375,0.6584,0.1835,1548.5,308.7)" text-anchor="end">100</text>
<text transform="matrix(0.3590,-0.3375,0.6584,0.1835,1532.0,304.1)" text-anchor="end">75</text>
<text transform="matrix(0.3590,-0.3375,0.6584,0.1835,1515.5,299.5)" text-anchor="end">50</text>
<text transform="matrix(0.3590,-0.3375,0.6584,0.1835,1499.1,294.9)" text-anchor="end">25</text>
<text transform="matrix(0.3590,-0.3375,0.6584,0.1835,1482.6,290.3)" text-anchor="end">0</text>
<text transform="matrix(0.3590,-0.3375,0.6584,0.1835,1466.2,285.8)" text-anchor="end">25</text>
<text transform="matrix(0.3590,-0.3375,0.6584,0.1835,1449.7,281.2)" text-anchor="end">50</text>
<text transform="matrix(0.3590,-0.3375,0.6584,0.1835,1433.2,276.6)" text-anchor="end">75</text>
<text transform="matrix(0.3590,-0.3375,0.6584,0.1835,1416.8,272.0)" text-anchor="end">100</text>
<text transform="matrix(0.3590,-0.3375,0.6584,0.1835,1400.3,267.4)" text-anchor="end">125</text>
<text transform="matrix(0.3590,-0.3375,0.6584,0.1835,1383.9,262.8)" text-anchor="end">150</text>
<text transform="matrix(0.3590,-0.3375,0.6584,0.1835,1367.4,258.2)" text-anchor="end">175</text>
<text transform="matrix(0.3590,-0.3375,0.6584,0.1835,1350.9,253.6)" text-anchor="end">200</text>
<text transform="matrix(0.3590,-0.3375,0.6584,0.1835,1334.5,249.1)" text-anchor="end">225</text>
<text transform="matrix(0.3590,-0.3375,0.6584,0.1835,1318.0,244.5)" text-anchor="end">250</text>
<text transform="matrix(0.3590,-0.3375,0.6584,0.1835,1301.6,239.9)" text-anchor="end">275</text>
<text transform="matrix(0.3590,-0.3375,0.6584,0.1835,1285.1,235.3)" text-anchor="end">300</text>
<text transform="matrix(0.3590,-0.3375,0.6584,0.1835,1268.6,230.7)" text-anchor="end">325</text>
<text transform="matrix(0.3590,-0.3375,0.6584,0.1835,1252.2,226.1)" text-anchor="end">350</text>
<text transform="matrix(0.3590,-0.3375,0.6584,0.1835,1235.7,221.5)" text-anchor="end">375</text>
<text transform="matrix(0.3590,-0.3375,0.6584,0.1835,1219.3,216.9)" text-anchor="end">400</text>
<text transform="matrix(0.3590,-0.3375,0.6584,0.1835,1202.8,212.4)" text-anchor="end">425</text>
<text transform="matrix(0.3590,-0.3375,0.6584,0.1835,1186.3,207.8)" text-anchor="end">450</text>
<text transform="matrix(0.3590,-0.3375,0.6584,0.1835,1169.9,203.2)" text-anchor="end">475</text>
<text transform="matrix(0.3590,-0.3375,0.6584,0.1835,1153.4,198.6)" text-anchor="end">500</text>
<text transform="matrix(0.3590,-0.3375,0.6584,0.1835,1137.0,194.0)" text-anchor="end">525</text>
<text transform="matrix(0.3590,-0.3375,0.6584,0.1835,1120.5,189.4)" text-anchor="end">550</text>
<text transform="matrix(0.3590,-0.3375,0.6584,0.1835,1104.0,184.8)" text-anchor="end">575</text>
<text transform="matrix(0.3590,-0.3375,0.6584,0.1835,1087.6,180.2)" text-anchor="end">600</text>
<text transform="matrix(0.3590,-0.3375,0.6584,0.1835,1071.1,175.7)" text-anchor="end">625</text>
<text transform="matrix(0.3590,-0.3375,0.6584,0.1835,1054.7,171.1)" text-anchor="end">650</text>
<text transform="matrix(0.3590,-0.3375,0.6584,0.1835,1038.2,166.5)" text-anchor="end">675</text>
<text transform="matrix(0.3590,-0.3375,0.6584,0.1835,1021.7,161.9)" text-anchor="end">700</text>
<text transform="matrix(0.3590,-0.3375,0.6584,0.1835,1005.3,157.3)" text-anchor="end">725</text>
<text transform="matrix(0.3590,-0.3375,0.6584,0.1835,988.8,152.7)" text-anchor="end">750</text>
<text transform="matrix(0.3590,-0.3375,0.6584,0.1835,972.4,148.1)" text-anchor="end">775</text>
<text transform="matrix(0.3590,-0.3375,0.6584,0.1835,955.9,143.5)" text-anchor="end">800</text>
<text transform="matrix(0.3590,-0.3375,0.6584,0.1835,939.4,139.0)" text-anchor="end">825</text>
<text transform="matrix(0.3590,-0.3375,0.6584,0.1835,923.0,134.4)" text-anchor="end">850</text>
<text transform="matrix(0.3590,-0.3375,0.6584,0.1835,906.5,129.8)" text-anchor="end">875</text>
<text transform="matrix(0.3590,-0.3375,0.6584,0.1835,890.1,125.2)" text-anchor="end">900</text>
<text transform="matrix(0.3590,-0.3375,0.6584,0.1835,873.6,120.6)" text-anchor="end">925</text>
<text transform="matrix(0.3590,-0.3375,0.6584,0.1835,857.1,116.0)" text-anchor="end">950</text>
<text transform="matrix(0.3590,-0.3375,0.6584,0.1835,840.7,111.4)" text-anchor="end">975</text>
<text transform="matrix(0.3590,-0.3375,0.6584,0.1835,824.2,106.8)" text-anchor="end">1000</text>
<text transform="matrix(0.3590,-0.3375,0.6584,0.1835,807.8,102.3)" text-anchor="end">1025</text>
<text transform="matrix(0.3590,-0.3375,0.6584,0.1835,791.3,97.7)" text-anchor="end">1050</text>
<text transform="matrix(0.3590,-0.3375,0.6584,0.1835,774.8,93.1)" text-anchor="end">1075</text>
<text transform="matrix(0.3590,-0.3375,0.6584,0.1835,758.4,88.5)" text-anchor="end">1100</text>
<text transform="matrix(0.3590,-0.3375,0.6584,0.1835,741.9,83.9)" text-anchor="end">1125</text>
<text transform="matrix(0.3590,-0.3375,0.6584,0.1835,725.5,79.3)" text-anchor="end">1150</text>
<text transform="matrix(0.3590,-0.3375,0.6584,0.1835,709.0,74.7)" text-anchor="end">1175</text>
<text transform="matrix(0.3590,-0.3375,0.6584,0.1835,692.5,70.1)" text-anchor="end">1200</text>
<text transform="matrix(0.3590,-0.3375,0.6584,0.1835,676.1,65.6)" text-anchor="end">1225</text>
<text transform="matrix(0.3590,-0.3375,0.6584,0.1835,659.6,61.0)" text-anchor="end">1250</text>
<text transform="matrix(0.3590,-0.3375,0.6584,0.1835,643.2,56.4)" text-anchor="end">1275</text>
<text transform="matrix(0.3590,-0.3375,0.6584,0.1835,626.7,51.8)" text-anchor="end">1300</text>
<text transform="matrix(0.3590,-0.3375,0.6584,0.1835,610.2,47.2)" text-anchor="end">1325</text>
<text transform="matrix(0.3590,-0.3375,0.6584,0.1835,593.8,42.6)" text-anchor="end">1350</text>
<text transform="matrix(0.3590,-0.3375,0.6584,0.1835,577.3,38.0)" text-anchor="end">1375</text>
<text transform="matrix(0.3590,-0.3375,0.6584,0.1835,560.9,33.4)" text-anchor="end">1400</text></g>
<polygon points="976.1,785.8 558.0,669.3 786.7,454.3 1204.8,570.8" fill="#8a8a8a" filter="url(#blur)" opacity="0.55"/>
<polygon points="794.5,464.0 774.0,458.3 774.0,109.9 794.5,115.6" fill="#8f8b80" stroke="#151515" stroke-width="0.8" stroke-linejoin="round" />
<polygon points="794.5,464.0 805.6,453.5 805.6,105.1 794.5,115.6" fill="#9d9a90" stroke="#151515" stroke-width="0.8" stroke-linejoin="round" />
<polygon points="580.8,641.9 791.2,444.1 791.2,123.4 580.8,321.1" fill="url(#gInnerL)" stroke="#1a1a1a" stroke-width="0.7" stroke-linejoin="round" />
<polygon points="1177.0,551.6 791.2,444.1 791.2,123.4 1177.0,230.9" fill="url(#gInnerR)" stroke="#111" stroke-width="0.7" stroke-linejoin="round" />
<g filter="url(#soft)"><path d="M1001.9,295.8 L1002.1,183.0" stroke="#65635c" stroke-width="2.1" opacity="0.16"/><path d="M1103.5,333.5 L1101.9,222.2" stroke="#65635c" stroke-width="1.4" opacity="0.12"/><path d="M1139.1,284.6 L1141.5,221.9" stroke="#65635c" stroke-width="3.0" opacity="0.22"/><path d="M925.5,263.5 L928.1,217.1" stroke="#65635c" stroke-width="2.2" opacity="0.09"/><path d="M1101.4,386.3 L1101.6,356.6" stroke="#65635c" stroke-width="2.0" opacity="0.20"/><path d="M976.6,272.8 L975.8,179.2" stroke="#65635c" stroke-width="2.0" opacity="0.12"/><path d="M795.2,152.0 L794.1,125.0" stroke="#65635c" stroke-width="1.8" opacity="0.11"/><path d="M1063.9,409.8 L1064.4,280.6" stroke="#65635c" stroke-width="2.7" opacity="0.13"/><path d="M810.2,185.5 L811.7,160.1" stroke="#65635c" stroke-width="2.8" opacity="0.15"/><path d="M801.7,272.1 L801.0,236.2" stroke="#65635c" stroke-width="2.6" opacity="0.12"/><path d="M1140.5,379.3 L1139.1,222.8" stroke="#65635c" stroke-width="1.4" opacity="0.11"/><path d="M1135.2,431.7 L1136.9,298.7" stroke="#65635c" stroke-width="2.2" opacity="0.14"/><path d="M1101.2,289.4 L1100.4,245.7" stroke="#65635c" stroke-width="1.4" opacity="0.14"/><path d="M1092.8,378.4 L1091.2,220.9" stroke="#65635c" stroke-width="1.7" opacity="0.20"/><path d="M1093.6,354.0 L1092.9,212.5" stroke="#65635c" stroke-width="1.4" opacity="0.22"/><path d="M1092.6,380.7 L1093.5,250.7" stroke="#65635c" stroke-width="1.7" opacity="0.09"/><path d="M1139.3,329.5 L1138.8,270.8" stroke="#65635c" stroke-width="1.9" opacity="0.14"/><path d="M809.8,257.3 L807.8,153.3" stroke="#65635c" stroke-width="1.5" opacity="0.10"/><path d="M829.0,196.6 L830.6,137.5" stroke="#65635c" stroke-width="2.5" opacity="0.21"/><path d="M1099.0,245.6 L1098.4,209.9" stroke="#65635c" stroke-width="2.0" opacity="0.09"/><path d="M1158.8,259.8 L1157.8,226.4" stroke="#65635c" stroke-width="1.7" opacity="0.20"/><path d="M947.3,333.2 L946.1,283.4" stroke="#65635c" stroke-width="1.3" opacity="0.11"/><path d="M961.4,226.6 L962.5,172.0" stroke="#65635c" stroke-width="2.9" opacity="0.11"/><path d="M1167.2,399.3 L1169.5,313.9" stroke="#65635c" stroke-width="1.5" opacity="0.13"/><path d="M956.5,367.8 L954.5,292.5" stroke="#65635c" stroke-width="3.0" opacity="0.17"/><path d="M911.4,265.7 L913.8,221.6" stroke="#65635c" stroke-width="1.2" opacity="0.21"/><path d="M907.7,189.8 L907.0,161.0" stroke="#65635c" stroke-width="2.1" opacity="0.18"/><path d="M1052.6,223.0 L1052.3,197.0" stroke="#65635c" stroke-width="2.5" opacity="0.21"/><path d="M894.0,237.2 L891.8,152.3" stroke="#65635c" stroke-width="1.8" opacity="0.18"/><path d="M831.9,186.8 L830.3,135.2" stroke="#65635c" stroke-width="2.8" opacity="0.16"/><path d="M936.5,312.6 L935.9,207.9" stroke="#65635c" stroke-width="1.3" opacity="0.17"/><path d="M796.8,175.3 L797.4,126.0" stroke="#65635c" stroke-width="2.5" opacity="0.16"/><path d="M1006.4,242.0 L1005.1,204.5" stroke="#65635c" stroke-width="1.3" opacity="0.16"/><path d="M991.1,357.9 L991.1,237.7" stroke="#65635c" stroke-width="2.3" opacity="0.21"/><path d="M1076.5,425.0 L1075.6,358.3" stroke="#65635c" stroke-width="1.6" opacity="0.10"/><path d="M830.0,228.1 L828.0,142.0" stroke="#65635c" stroke-width="1.8" opacity="0.17"/><path d="M1098.2,348.1 L1096.0,212.7" stroke="#65635c" stroke-width="2.8" opacity="0.13"/><path d="M952.4,330.1 L952.4,285.9" stroke="#65635c" stroke-width="2.7" opacity="0.20"/><path d="M903.8,191.3 L905.5,156.1" stroke="#65635c" stroke-width="2.0" opacity="0.12"/><path d="M1092.3,349.8 L1092.4,239.4" stroke="#65635c" stroke-width="1.8" opacity="0.20"/><path d="M801.1,261.0 L803.6,225.8" stroke="#65635c" stroke-width="2.8" opacity="0.09"/><path d="M904.8,266.6 L903.2,198.6" stroke="#65635c" stroke-width="1.2" opacity="0.10"/><path d="M1001.0,401.3 L1002.4,263.7" stroke="#65635c" stroke-width="1.5" opacity="0.09"/><path d="M934.9,299.5 L934.1,188.3" stroke="#65635c" stroke-width="2.7" opacity="0.21"/><path d="M913.9,342.5 L915.6,253.0" stroke="#65635c" stroke-width="1.2" opacity="0.15"/><path d="M730.6,369.4 L730.1,307.2" stroke="#464642" stroke-width="2.5" opacity="0.20"/><path d="M710.0,274.7 L710.8,200.0" stroke="#464642" stroke-width="2.8" opacity="0.12"/><path d="M775.8,219.5 L775.6,176.3" stroke="#464642" stroke-width="2.3" opacity="0.28"/><path d="M660.8,358.0 L661.7,246.1" stroke="#464642" stroke-width="2.9" opacity="0.19"/><path d="M717.6,376.5 L718.5,252.3" stroke="#464642" stroke-width="2.4" opacity="0.24"/><path d="M627.0,324.3 L628.4,277.4" stroke="#464642" stroke-width="2.2" opacity="0.26"/><path d="M649.2,301.5 L648.7,258.3" stroke="#464642" stroke-width="1.3" opacity="0.19"/><path d="M696.7,284.8 L695.3,214.5" stroke="#464642" stroke-width="2.7" opacity="0.11"/><path d="M748.3,354.0 L749.1,282.1" stroke="#464642" stroke-width="1.5" opacity="0.13"/><path d="M689.7,300.2 L690.3,219.3" stroke="#464642" stroke-width="2.9" opacity="0.20"/><path d="M779.2,342.1 L779.3,286.4" stroke="#464642" stroke-width="1.7" opacity="0.25"/><path d="M715.0,316.1 L715.2,195.8" stroke="#464642" stroke-width="1.8" opacity="0.18"/><path d="M757.7,201.3 L758.7,154.9" stroke="#464642" stroke-width="2.9" opacity="0.20"/><path d="M701.4,392.5 L701.4,294.3" stroke="#464642" stroke-width="2.3" opacity="0.11"/><path d="M783.4,253.2 L784.2,172.4" stroke="#464642" stroke-width="2.2" opacity="0.20"/><path d="M725.8,396.3 L725.5,297.9" stroke="#464642" stroke-width="2.9" opacity="0.28"/><path d="M638.6,397.8 L638.4,355.0" stroke="#464642" stroke-width="2.7" opacity="0.28"/><path d="M681.4,388.3 L681.8,336.3" stroke="#464642" stroke-width="2.9" opacity="0.13"/><path d="M744.1,387.7 L743.3,336.4" stroke="#464642" stroke-width="2.4" opacity="0.16"/><path d="M656.4,352.1 L657.1,311.5" stroke="#464642" stroke-width="1.4" opacity="0.20"/><path d="M634.7,455.9 L634.5,358.6" stroke="#464642" stroke-width="1.9" opacity="0.18"/><path d="M692.4,409.2 L692.7,355.4" stroke="#464642" stroke-width="2.3" opacity="0.21"/><path d="M758.9,257.2 L758.2,155.4" stroke="#464642" stroke-width="2.5" opacity="0.26"/><path d="M769.6,305.7 L770.8,236.2" stroke="#464642" stroke-width="1.6" opacity="0.30"/><path d="M766.4,344.6 L767.1,285.9" stroke="#464642" stroke-width="1.7" opacity="0.12"/><path d="M755.0,298.5 L753.9,167.0" stroke="#464642" stroke-width="1.9" opacity="0.24"/><path d="M586.6,500.5 L587.8,381.3" stroke="#464642" stroke-width="2.9" opacity="0.12"/><path d="M687.5,295.5 L688.0,221.4" stroke="#464642" stroke-width="1.5" opacity="0.11"/><path d="M604.9,515.6 L604.9,415.2" stroke="#464642" stroke-width="2.2" opacity="0.13"/><path d="M621.1,467.5 L622.5,326.8" stroke="#464642" stroke-width="2.9" opacity="0.12"/></g>
<polygon points="573.6,328.5 560.4,324.9 560.4,310.7 573.6,314.4" fill="#8f8b80" stroke="#151515" stroke-width="0.8" stroke-linejoin="round" />
<polygon points="573.6,328.5 798.3,117.3 798.3,103.1 573.6,314.4" fill="#c0bfb5" stroke="#151515" stroke-width="0.8" stroke-linejoin="round" />
<polygon points="573.6,314.4 560.4,310.7 785.2,99.4 798.3,103.1" fill="#8a877c" stroke="#151515" stroke-width="0.8" stroke-linejoin="round" />
<polygon points="1190.1,235.2 778.0,120.3 778.0,106.2 1190.1,221.1" fill="#86827a" stroke="#151515" stroke-width="0.8" stroke-linejoin="round" />
<polygon points="1190.1,235.2 1197.3,228.5 1197.3,214.3 1190.1,221.1" fill="#c0bfb5" stroke="#151515" stroke-width="0.8" stroke-linejoin="round" />
<polygon points="1190.1,221.1 778.0,106.2 785.2,99.4 1197.3,214.3" fill="#8a877c" stroke="#151515" stroke-width="0.8" stroke-linejoin="round" />
<line x1="566.1" y1="309.8" x2="786.8" y2="102.3" stroke="#1e1d1b" stroke-width="1.6" stroke-dasharray="1.2,0.8"/>
<line x1="1191.6" y1="215.2" x2="786.8" y2="102.3" stroke="#1e1d1b" stroke-width="1.6" stroke-dasharray="1.2,0.8"/>
<line x1="575.1" y1="308.5" x2="789.5" y2="106.9" stroke="#1e1d1b" stroke-width="1.6" stroke-dasharray="1.2,0.8"/>
<line x1="1182.7" y1="216.5" x2="789.5" y2="106.9" stroke="#1e1d1b" stroke-width="1.6" stroke-dasharray="1.2,0.8"/>
<line x1="570.6" y1="309.2" x2="788.2" y2="104.6" stroke="#d2cebe" stroke-width="1.0" />
<line x1="1187.2" y1="215.8" x2="788.2" y2="104.6" stroke="#d2cebe" stroke-width="1.0" />
<polygon points="584.1,665.7 562.4,659.7 562.4,311.3 584.1,317.3" fill="url(#gPostL)" stroke="#151515" stroke-width="0.8" stroke-linejoin="round" />
<polygon points="584.1,665.7 595.3,655.3 595.3,306.8 584.1,317.3" fill="url(#gPostL2)" stroke="#151515" stroke-width="0.8" stroke-linejoin="round" />
<polygon points="1186.2,573.2 1165.8,567.5 1165.8,219.1 1186.2,224.8" fill="#333" stroke="#151515" stroke-width="0.8" stroke-linejoin="round" />
<polygon points="1186.2,573.2 1197.3,562.7 1197.3,214.3 1186.2,224.8" fill="url(#gPostR)" stroke="#151515" stroke-width="0.8" stroke-linejoin="round" />
<polygon points="972.6,774.0 952.2,768.3 952.2,419.9 972.6,425.6" fill="url(#gPostF)" stroke="#151515" stroke-width="0.8" stroke-linejoin="round" />
<polygon points="972.6,774.0 983.7,763.5 983.7,415.1 972.6,425.6" fill="url(#gPostF2)" stroke="#151515" stroke-width="0.8" stroke-linejoin="round" />
<polygon points="953.3,759.6 581.9,656.1 581.9,329.5 953.3,433.0" fill="url(#gFrontL)" stroke="#111" stroke-width="0.8" stroke-linejoin="round" />
<polygon points="981.7,755.2 1184.2,564.9 1184.2,238.4 981.7,428.7" fill="url(#gFrontR)" stroke="#111" stroke-width="0.8" stroke-linejoin="round" />
<g filter="url(#soft)"><path d="M831.7,675.0 L833.9,540.9" stroke="#6a6860" stroke-width="2.2" opacity="0.13"/><path d="M928.6,597.1 L929.0,565.2" stroke="#6a6860" stroke-width="1.3" opacity="0.09"/><path d="M794.9,465.9 L796.4,419.8" stroke="#6a6860" stroke-width="2.3" opacity="0.21"/><path d="M739.3,576.9 L741.7,388.4" stroke="#6a6860" stroke-width="2.7" opacity="0.12"/><path d="M897.2,703.0 L895.5,625.2" stroke="#6a6860" stroke-width="1.5" opacity="0.16"/><path d="M716.7,577.8 L719.0,461.0" stroke="#6a6860" stroke-width="1.3" opacity="0.11"/><path d="M701.6,557.4 L701.2,478.9" stroke="#6a6860" stroke-width="2.0" opacity="0.12"/><path d="M660.0,465.9 L659.6,399.1" stroke="#6a6860" stroke-width="2.1" opacity="0.20"/><path d="M683.7,593.5 L685.7,404.1" stroke="#6a6860" stroke-width="2.0" opacity="0.19"/><path d="M894.4,593.0 L893.5,560.4" stroke="#6a6860" stroke-width="2.6" opacity="0.16"/><path d="M630.5,571.0 L630.0,428.7" stroke="#6a6860" stroke-width="2.2" opacity="0.14"/><path d="M643.4,388.9 L642.5,346.7" stroke="#6a6860" stroke-width="1.3" opacity="0.18"/><path d="M713.7,394.3 L714.9,366.8" stroke="#6a6860" stroke-width="1.9" opacity="0.17"/><path d="M941.6,614.2 L943.6,560.9" stroke="#6a6860" stroke-width="1.3" opacity="0.19"/><path d="M902.6,666.3 L900.7,574.6" stroke="#6a6860" stroke-width="1.3" opacity="0.14"/><path d="M749.4,436.5 L747.5,375.9" stroke="#6a6860" stroke-width="1.7" opacity="0.14"/><path d="M818.9,455.7 L820.8,396.3" stroke="#6a6860" stroke-width="1.5" opacity="0.11"/><path d="M864.7,585.9 L865.9,461.9" stroke="#6a6860" stroke-width="1.2" opacity="0.14"/><path d="M815.1,548.1 L814.1,394.5" stroke="#6a6860" stroke-width="2.1" opacity="0.17"/><path d="M703.1,667.7 L701.7,490.9" stroke="#6a6860" stroke-width="2.8" opacity="0.19"/><path d="M806.7,595.1 L806.0,551.8" stroke="#6a6860" stroke-width="1.3" opacity="0.09"/><path d="M873.6,683.4 L876.0,601.3" stroke="#6a6860" stroke-width="1.2" opacity="0.10"/><path d="M912.8,635.0 L910.8,604.5" stroke="#6a6860" stroke-width="2.3" opacity="0.10"/><path d="M857.8,624.5 L859.8,538.3" stroke="#6a6860" stroke-width="2.7" opacity="0.22"/><path d="M779.8,562.6 L781.9,523.0" stroke="#6a6860" stroke-width="1.8" opacity="0.12"/><path d="M647.5,620.6 L645.1,590.3" stroke="#6a6860" stroke-width="2.2" opacity="0.10"/><path d="M751.7,689.2 L749.1,574.3" stroke="#6a6860" stroke-width="2.8" opacity="0.18"/><path d="M854.5,617.9 L853.1,563.8" stroke="#6a6860" stroke-width="2.2" opacity="0.19"/><path d="M829.5,653.2 L827.0,490.9" stroke="#6a6860" stroke-width="2.7" opacity="0.19"/><path d="M651.3,451.4 L651.2,387.7" stroke="#6a6860" stroke-width="1.8" opacity="0.08"/><path d="M939.6,667.3 L938.6,597.8" stroke="#6a6860" stroke-width="2.9" opacity="0.14"/><path d="M608.0,366.3 L608.7,337.2" stroke="#6a6860" stroke-width="1.6" opacity="0.11"/><path d="M878.0,672.2 L875.9,541.4" stroke="#6a6860" stroke-width="2.7" opacity="0.15"/><path d="M711.6,450.6 L710.8,410.4" stroke="#6a6860" stroke-width="2.8" opacity="0.19"/><path d="M676.2,535.4 L674.7,479.3" stroke="#6a6860" stroke-width="1.8" opacity="0.19"/><path d="M595.4,537.1 L593.0,443.5" stroke="#6a6860" stroke-width="2.5" opacity="0.10"/><path d="M903.5,695.0 L901.8,517.2" stroke="#6a6860" stroke-width="1.5" opacity="0.20"/><path d="M592.2,459.3 L592.0,374.8" stroke="#6a6860" stroke-width="1.4" opacity="0.08"/><path d="M595.7,462.5 L593.4,347.9" stroke="#6a6860" stroke-width="2.0" opacity="0.20"/><path d="M648.4,606.3 L649.5,538.6" stroke="#6a6860" stroke-width="1.6" opacity="0.16"/><path d="M855.2,602.7 L853.0,554.4" stroke="#6a6860" stroke-width="1.8" opacity="0.14"/><path d="M737.0,426.9 L734.8,372.4" stroke="#6a6860" stroke-width="2.1" opacity="0.15"/><path d="M758.8,693.6 L760.5,594.6" stroke="#6a6860" stroke-width="1.2" opacity="0.19"/><path d="M886.9,595.5 L886.6,448.2" stroke="#6a6860" stroke-width="1.8" opacity="0.15"/><path d="M747.2,465.1 L746.9,421.5" stroke="#6a6860" stroke-width="1.6" opacity="0.12"/><path d="M668.1,524.4 L666.7,404.2" stroke="#6a6860" stroke-width="2.8" opacity="0.14"/><path d="M726.4,541.3 L725.4,429.5" stroke="#6a6860" stroke-width="2.0" opacity="0.15"/><path d="M775.4,426.7 L773.4,383.1" stroke="#6a6860" stroke-width="2.9" opacity="0.12"/><path d="M745.7,417.9 L747.6,375.9" stroke="#6a6860" stroke-width="1.4" opacity="0.14"/><path d="M923.3,674.2 L922.4,635.9" stroke="#6a6860" stroke-width="2.6" opacity="0.21"/><path d="M893.5,525.9 L895.3,417.1" stroke="#6a6860" stroke-width="2.8" opacity="0.22"/><path d="M869.7,449.7 L869.8,410.0" stroke="#6a6860" stroke-width="3.0" opacity="0.20"/><path d="M890.9,608.9 L891.7,497.1" stroke="#6a6860" stroke-width="1.6" opacity="0.12"/><path d="M686.4,673.2 L686.7,554.8" stroke="#6a6860" stroke-width="1.2" opacity="0.13"/><path d="M722.2,538.2 L719.7,500.9" stroke="#6a6860" stroke-width="2.6" opacity="0.22"/><path d="M911.6,663.6 L910.1,630.8" stroke="#6a6860" stroke-width="1.7" opacity="0.10"/><path d="M795.8,441.2 L797.0,389.7" stroke="#6a6860" stroke-width="1.5" opacity="0.21"/><path d="M741.7,488.2 L744.0,448.1" stroke="#6a6860" stroke-width="2.4" opacity="0.14"/><path d="M923.4,468.8 L921.8,424.5" stroke="#6a6860" stroke-width="1.4" opacity="0.20"/><path d="M925.5,491.7 L926.3,425.8" stroke="#6a6860" stroke-width="2.2" opacity="0.21"/><path d="M852.1,687.1 L853.5,573.5" stroke="#6a6860" stroke-width="1.4" opacity="0.10"/><path d="M931.4,687.9 L932.4,610.1" stroke="#6a6860" stroke-width="2.6" opacity="0.12"/><path d="M767.4,649.2 L769.9,566.0" stroke="#6a6860" stroke-width="1.7" opacity="0.08"/><path d="M682.4,515.7 L682.5,458.2" stroke="#6a6860" stroke-width="2.9" opacity="0.09"/><path d="M651.1,541.9 L649.3,432.8" stroke="#6a6860" stroke-width="1.9" opacity="0.15"/><path d="M698.9,393.3 L697.2,361.9" stroke="#6a6860" stroke-width="2.5" opacity="0.17"/><path d="M802.2,608.9 L804.1,574.6" stroke="#6a6860" stroke-width="1.3" opacity="0.18"/><path d="M856.6,678.3 L854.8,637.9" stroke="#6a6860" stroke-width="2.8" opacity="0.17"/><path d="M847.0,652.4 L847.2,577.6" stroke="#6a6860" stroke-width="1.5" opacity="0.14"/><path d="M853.8,442.5 L853.5,405.5" stroke="#6a6860" stroke-width="1.6" opacity="0.22"/><path d="M1045.4,584.4 L1045.1,558.8" stroke="#41413d" stroke-width="2.1" opacity="0.20"/><path d="M1023.8,561.1 L1023.2,535.1" stroke="#41413d" stroke-width="1.4" opacity="0.18"/><path d="M992.2,732.8 L991.4,656.8" stroke="#41413d" stroke-width="2.3" opacity="0.21"/><path d="M1133.1,413.4 L1134.2,285.8" stroke="#41413d" stroke-width="1.9" opacity="0.17"/><path d="M1179.7,519.1 L1180.1,371.7" stroke="#41413d" stroke-width="1.3" opacity="0.27"/><path d="M1161.3,395.8 L1162.2,259.5" stroke="#41413d" stroke-width="1.5" opacity="0.20"/><path d="M1084.2,407.2 L1085.1,331.9" stroke="#41413d" stroke-width="2.3" opacity="0.28"/><path d="M1119.7,415.5 L1118.3,352.5" stroke="#41413d" stroke-width="1.4" opacity="0.17"/><path d="M1004.7,481.6 L1005.1,407.2" stroke="#41413d" stroke-width="2.3" opacity="0.24"/><path d="M1081.2,654.7 L1081.9,494.7" stroke="#41413d" stroke-width="2.1" opacity="0.21"/><path d="M1115.0,604.5 L1114.3,456.0" stroke="#41413d" stroke-width="1.3" opacity="0.15"/><path d="M1128.9,550.4 L1130.3,399.5" stroke="#41413d" stroke-width="2.1" opacity="0.18"/><path d="M1079.1,456.4 L1079.5,337.3" stroke="#41413d" stroke-width="2.4" opacity="0.12"/><path d="M1013.2,644.9 L1012.6,495.2" stroke="#41413d" stroke-width="2.2" opacity="0.10"/><path d="M995.9,656.8 L996.5,518.0" stroke="#41413d" stroke-width="2.4" opacity="0.16"/><path d="M1086.6,513.9 L1085.5,411.1" stroke="#41413d" stroke-width="2.8" opacity="0.14"/><path d="M1178.4,288.8 L1178.3,260.2" stroke="#41413d" stroke-width="2.7" opacity="0.29"/><path d="M1073.3,584.1 L1074.5,522.0" stroke="#41413d" stroke-width="1.6" opacity="0.22"/><path d="M1012.1,566.5 L1011.0,401.6" stroke="#41413d" stroke-width="2.7" opacity="0.20"/><path d="M1160.3,374.4 L1161.4,308.8" stroke="#41413d" stroke-width="2.1" opacity="0.10"/><path d="M984.6,601.8 L984.0,501.1" stroke="#41413d" stroke-width="1.5" opacity="0.17"/><path d="M1046.7,440.8 L1047.5,414.1" stroke="#41413d" stroke-width="2.7" opacity="0.12"/><path d="M1168.1,364.1 L1167.5,254.5" stroke="#41413d" stroke-width="1.9" opacity="0.18"/><path d="M1182.5,387.1 L1182.3,301.1" stroke="#41413d" stroke-width="1.7" opacity="0.11"/><path d="M1004.1,482.5 L1005.4,407.8" stroke="#41413d" stroke-width="1.6" opacity="0.15"/><path d="M1085.5,595.8 L1086.8,506.3" stroke="#41413d" stroke-width="2.8" opacity="0.26"/><path d="M1109.3,360.4 L1109.5,309.0" stroke="#41413d" stroke-width="2.5" opacity="0.11"/><path d="M1129.5,477.6 L1129.9,325.4" stroke="#41413d" stroke-width="1.7" opacity="0.11"/><path d="M1168.2,536.5 L1167.7,432.1" stroke="#41413d" stroke-width="1.7" opacity="0.25"/><path d="M1178.0,488.1 L1177.5,353.0" stroke="#41413d" stroke-width="2.2" opacity="0.18"/><path d="M1017.2,668.3 L1018.3,606.7" stroke="#41413d" stroke-width="2.1" opacity="0.14"/><path d="M1164.1,284.5 L1163.1,258.7" stroke="#41413d" stroke-width="1.5" opacity="0.12"/><path d="M1051.9,656.5 L1051.2,591.3" stroke="#41413d" stroke-width="2.2" opacity="0.28"/><path d="M1133.0,485.6 L1133.0,390.4" stroke="#41413d" stroke-width="1.9" opacity="0.17"/><path d="M996.2,653.9 L995.1,467.1" stroke="#41413d" stroke-width="2.1" opacity="0.23"/><path d="M1155.5,522.3 L1154.8,451.9" stroke="#41413d" stroke-width="1.9" opacity="0.19"/><path d="M1173.6,319.1 L1172.2,250.1" stroke="#41413d" stroke-width="1.3" opacity="0.24"/><path d="M1162.0,440.4 L1160.6,317.7" stroke="#41413d" stroke-width="1.9" opacity="0.29"/><path d="M1148.1,341.1 L1147.3,273.5" stroke="#41413d" stroke-width="1.4" opacity="0.13"/><path d="M1087.8,448.8 L1088.4,328.9" stroke="#41413d" stroke-width="2.4" opacity="0.25"/><path d="M1074.8,499.4 L1075.6,466.2" stroke="#41413d" stroke-width="1.6" opacity="0.28"/><path d="M1112.3,537.1 L1111.5,490.6" stroke="#41413d" stroke-width="2.3" opacity="0.24"/><path d="M1006.2,705.5 L1006.4,591.7" stroke="#41413d" stroke-width="1.9" opacity="0.14"/><path d="M1103.4,631.7 L1103.3,555.6" stroke="#41413d" stroke-width="2.9" opacity="0.23"/><path d="M1159.6,442.1 L1158.9,377.7" stroke="#41413d" stroke-width="2.9" opacity="0.24"/><path d="M1045.0,683.3 L1045.5,573.6" stroke="#41413d" stroke-width="2.0" opacity="0.15"/><path d="M1116.6,350.1 L1115.3,303.6" stroke="#41413d" stroke-width="1.8" opacity="0.18"/><path d="M1119.6,561.3 L1120.3,401.4" stroke="#41413d" stroke-width="2.1" opacity="0.14"/><path d="M1176.8,474.1 L1176.0,311.8" stroke="#41413d" stroke-width="1.6" opacity="0.25"/><path d="M1042.5,411.9 L1041.6,372.8" stroke="#41413d" stroke-width="1.6" opacity="0.18"/><path d="M1116.2,343.6 L1115.9,303.0" stroke="#41413d" stroke-width="1.6" opacity="0.29"/><path d="M1012.1,705.4 L1011.8,669.9" stroke="#41413d" stroke-width="2.8" opacity="0.28"/><path d="M1129.6,316.6 L1129.1,290.6" stroke="#41413d" stroke-width="1.5" opacity="0.29"/><path d="M1132.3,598.3 L1132.0,461.6" stroke="#41413d" stroke-width="1.9" opacity="0.17"/><path d="M1017.5,714.7 L1017.1,642.5" stroke="#41413d" stroke-width="2.9" opacity="0.12"/></g>
<polygon points="952.2,768.3 580.8,664.8 580.8,645.5 952.2,749.0" fill="#2a2a28" stroke="#151515" stroke-width="0.8" stroke-linejoin="round" />
<polygon points="983.7,763.5 1186.2,573.2 1186.2,553.8 983.7,744.2" fill="#1e1e1c" stroke="#151515" stroke-width="0.8" stroke-linejoin="round" />
<line x1="952.1" y1="766.8" x2="580.7" y2="663.3" stroke="#d8d4c4" stroke-width="1.1" />
<line x1="983.9" y1="762.0" x2="1186.4" y2="571.6" stroke="#a8a597" stroke-width="0.9" />
<line x1="952.1" y1="764.5" x2="580.7" y2="661.0" stroke="#d8d4c4" stroke-width="1.1" />
<line x1="983.9" y1="759.6" x2="1186.4" y2="569.3" stroke="#a8a597" stroke-width="0.9" />
<line x1="952.1" y1="762.1" x2="580.7" y2="658.7" stroke="#d8d4c4" stroke-width="1.1" />
<line x1="983.9" y1="757.3" x2="1186.4" y2="567.0" stroke="#a8a597" stroke-width="0.9" />
<line x1="952.1" y1="759.8" x2="580.7" y2="656.3" stroke="#d8d4c4" stroke-width="1.1" />
<line x1="983.9" y1="755.0" x2="1186.4" y2="564.7" stroke="#a8a597" stroke-width="0.9" />
<line x1="952.1" y1="757.5" x2="580.7" y2="654.0" stroke="#d8d4c4" stroke-width="1.1" />
<line x1="983.9" y1="752.7" x2="1186.4" y2="562.3" stroke="#a8a597" stroke-width="0.9" />
<line x1="952.1" y1="755.2" x2="580.7" y2="651.7" stroke="#d8d4c4" stroke-width="1.1" />
<line x1="983.9" y1="750.4" x2="1186.4" y2="560.0" stroke="#a8a597" stroke-width="0.9" />
<line x1="952.1" y1="752.9" x2="580.7" y2="649.4" stroke="#d8d4c4" stroke-width="1.1" />
<line x1="983.9" y1="748.1" x2="1186.4" y2="557.7" stroke="#a8a597" stroke-width="0.9" />
<line x1="952.1" y1="750.6" x2="580.7" y2="647.1" stroke="#d8d4c4" stroke-width="1.1" />
<line x1="983.9" y1="745.7" x2="1186.4" y2="555.4" stroke="#a8a597" stroke-width="0.9" />
<polygon points="972.6,439.7 560.4,324.9 560.4,310.7 972.6,425.6" fill="#8b877c" stroke="#151515" stroke-width="0.8" stroke-linejoin="round" />
<polygon points="972.6,439.7 979.8,433.0 979.8,418.8 972.6,425.6" fill="#c3c2b8" stroke="#151515" stroke-width="0.8" stroke-linejoin="round" />
<polygon points="972.6,425.6 560.4,310.7 567.6,304.0 979.8,418.8" fill="#8a877c" stroke="#151515" stroke-width="0.8" stroke-linejoin="round" />
<polygon points="972.6,439.7 959.4,436.1 959.4,421.9 972.6,425.6" fill="#8f8b80" stroke="#151515" stroke-width="0.8" stroke-linejoin="round" />
<polygon points="972.6,439.7 1197.3,228.5 1197.3,214.3 972.6,425.6" fill="#cdccc3" stroke="#151515" stroke-width="0.8" stroke-linejoin="round" />
<polygon points="972.6,425.6 959.4,421.9 1184.2,210.6 1197.3,214.3" fill="#8a877c" stroke="#151515" stroke-width="0.8" stroke-linejoin="round" />
<line x1="970.9" y1="422.7" x2="566.1" y2="309.8" stroke="#1e1d1b" stroke-width="1.6" stroke-dasharray="1.2,0.8"/>
<line x1="970.9" y1="422.7" x2="1191.6" y2="215.2" stroke="#1e1d1b" stroke-width="1.6" stroke-dasharray="1.2,0.8"/>
<line x1="968.3" y1="418.1" x2="575.1" y2="308.5" stroke="#1e1d1b" stroke-width="1.6" stroke-dasharray="1.2,0.8"/>
<line x1="968.3" y1="418.1" x2="1182.7" y2="216.5" stroke="#1e1d1b" stroke-width="1.6" stroke-dasharray="1.2,0.8"/>
<line x1="969.6" y1="420.4" x2="570.6" y2="309.2" stroke="#d2cebe" stroke-width="1.0" />
<line x1="969.6" y1="420.4" x2="1187.2" y2="215.8" stroke="#d2cebe" stroke-width="1.0" />
<polygon points="560.3,310.9 593.2,320.0 593.2,334.9 580.0,331.2 580.0,343.4 560.3,337.9" fill="#918d82" stroke="#111" stroke-width="1.0" stroke-linejoin="round" />
<polygon points="972.4,425.7 939.5,416.6 939.5,431.4 952.7,435.1 952.7,447.3 972.4,452.8" fill="#918d82" stroke="#111" stroke-width="1.0" stroke-linejoin="round" />
<polygon points="972.9,425.7 990.9,408.8 990.9,423.6 983.7,430.4 983.7,442.6 972.9,452.7" fill="#cfcec6" stroke="#111" stroke-width="1.0" stroke-linejoin="round" />
<polygon points="1197.7,214.4 1179.7,231.3 1179.7,246.1 1186.9,239.3 1186.9,251.6 1197.7,241.4" fill="#cfcec6" stroke="#111" stroke-width="1.0" stroke-linejoin="round" />
<ellipse cx="565.5" cy="317.5" rx="1.8" ry="1.6" fill="#fff" stroke="#111" stroke-width="1.1" fill-opacity="0.3"/>
<ellipse cx="565.5" cy="325.2" rx="1.3" ry="1.2" fill="#fff" stroke="#111" stroke-width="1.1" fill-opacity="0.3"/>
<ellipse cx="565.5" cy="334.2" rx="1.8" ry="1.6" fill="#fff" stroke="#111" stroke-width="1.1" fill-opacity="0.3"/>
<ellipse cx="576.1" cy="320.4" rx="1.3" ry="1.2" fill="#fff" stroke="#111" stroke-width="1.1" fill-opacity="0.3"/>
<ellipse cx="586.6" cy="324.0" rx="1.9" ry="1.7" fill="#fff" stroke="#111" stroke-width="1.1" fill-opacity="0.3"/>
<ellipse cx="967.1" cy="429.4" rx="1.8" ry="1.6" fill="#fff" stroke="#111" stroke-width="1.1" fill-opacity="0.3"/>
<ellipse cx="967.1" cy="437.2" rx="1.3" ry="1.2" fill="#fff" stroke="#111" stroke-width="1.1" fill-opacity="0.3"/>
<ellipse cx="967.1" cy="446.2" rx="1.8" ry="1.6" fill="#fff" stroke="#111" stroke-width="1.1" fill-opacity="0.3"/>
<ellipse cx="956.6" cy="426.5" rx="1.3" ry="1.2" fill="#fff" stroke="#111" stroke-width="1.1" fill-opacity="0.3"/>
<ellipse cx="946.1" cy="424.2" rx="1.9" ry="1.7" fill="#fff" stroke="#111" stroke-width="1.1" fill-opacity="0.3"/>
<ellipse cx="975.8" cy="428.1" rx="1.4" ry="1.9" fill="#111"/>
<ellipse cx="975.8" cy="435.8" rx="1.1" ry="1.4" fill="#111"/>
<ellipse cx="975.8" cy="444.9" rx="1.4" ry="1.9" fill="#111"/>
<ellipse cx="981.5" cy="422.7" rx="1.1" ry="1.4" fill="#111"/>
<ellipse cx="987.3" cy="418.0" rx="1.5" ry="2.0" fill="#111"/>
<ellipse cx="1194.8" cy="222.2" rx="1.4" ry="1.9" fill="#111"/>
<ellipse cx="1194.8" cy="230.0" rx="1.1" ry="1.4" fill="#111"/>
<ellipse cx="1194.8" cy="239.0" rx="1.4" ry="1.9" fill="#111"/>
<ellipse cx="1189.0" cy="227.6" rx="1.1" ry="1.4" fill="#111"/>
<ellipse cx="1183.3" cy="233.7" rx="1.5" ry="2.0" fill="#111"/>
<polygon points="561.5,631.3 569.4,638.7 586.6,647.3 583.9,660.8 576.0,661.1 568.1,666.7" fill="#d9d5c9" stroke="#111" stroke-width="1.0" stroke-linejoin="round" />
<polygon points="971.1,745.5 963.2,748.4 946.0,747.5 948.7,762.4 956.6,767.2 964.5,777.1" fill="#d9d5c9" stroke="#111" stroke-width="1.0" stroke-linejoin="round" />
<polygon points="973.7,745.1 978.0,746.2 987.3,741.3 985.9,756.8 981.6,763.4 977.3,775.2" fill="#e4e1d8" stroke="#111" stroke-width="1.0" stroke-linejoin="round" />
<polygon points="1197.0,535.2 1192.7,544.4 1183.4,557.0 1184.8,569.8 1189.1,568.3 1193.4,572.0" fill="#e4e1d8" stroke="#111" stroke-width="1.0" stroke-linejoin="round" />
<circle cx="576.0" cy="649.5" r="1.3" fill="#111"/>
<circle cx="956.6" cy="755.6" r="1.3" fill="#111"/>
<circle cx="981.6" cy="751.8" r="1.2" fill="#111"/>
<circle cx="1189.1" cy="556.7" r="1.2" fill="#111"/>
<ellipse cx="566.4" cy="656.5" rx="8" ry="9" fill="url(#gBall)" stroke="#666" stroke-width="0.4"/>
<ellipse cx="971.6" cy="769.5" rx="10" ry="9" fill="url(#gBall)" stroke="#666" stroke-width="0.4"/>
<ellipse cx="1196.3" cy="562.1" rx="6" ry="8" fill="url(#gBall)" stroke="#666" stroke-width="0.4"/>
</g>
</svg>
<div id="tb"></div><div id="tb2"></div>
<div id="konst"></div>
<svg style="position:absolute;left:0;top:0" width="1500" height="64"><g transform="translate(137.5,9.7) scale(1.0)"><rect x="0" y="0" width="3" height="3" fill="#444"/><rect x="26" y="0" width="3" height="3" fill="#444"/><rect x="0" y="26" width="3" height="3" fill="#444"/><path d="M4,1.5 H25 M1.5,4 V25 M4,27.5 H17 M27.5,4 V17" stroke="#444" stroke-width="1" fill="none"/><rect x="7" y="7" width="2.6" height="2.6" fill="#444"/><rect x="20" y="7" width="2.6" height="2.6" fill="#444"/><rect x="7" y="20" width="2.6" height="2.6" fill="#444"/><path d="M10.5,8.3 H19 M8.3,10.5 V19 M21.3,10.5 Q20,19 10.5,21.3" stroke="#444" stroke-width="1" fill="none"/><path d="M24.3,17.5 V31 M17.5,24.3 H31" stroke="#22a53e" stroke-width="3.4"/></g><g transform="translate(180.8,8.8) scale(1.0)"><polygon points="0.5,29 18,29 24,23.5 24,27 18,32.2 0.5,32.2" fill="#b8b8b8"/><polygon points="0.5,6 6.5,0.5 24,0.5 18,6" fill="#8fcdf7"/><rect x="0.5" y="6" width="17.5" height="23" fill="#6cb0e8"/><polygon points="18,6 24,0.5 24,23.5 18,29" fill="#4d94d2"/><path d="M27.6,23 V2.5" stroke="#222" stroke-width="1"/><polygon points="27.6,0.5 25.4,4.5 29.8,4.5" fill="#222"/></g><g transform="translate(222.8,8) scale(1.0)"><path d="M0.4,14.7 Q15.9,2 31.7,13.8 L26.3,19.3 Q15.9,12 6.3,19.3Z" fill="#8fcdf7"/><path d="M0.4,14.7 L6.3,19.3 V29.7 L0.4,24.3Z" fill="#4d94d2"/><path d="M6.3,19.3 Q15.9,12 26.3,19.3 V29.3 Q15.9,22 6.3,29.7Z" fill="#6cb0e8"/><polygon points="26.3,19.3 32.2,14.3 32.2,23.8 26.3,29.3" fill="#fff" stroke="#333" stroke-width="0.9"/><path d="M30.4,8.4 Q16,-1.5 3.8,6.8" stroke="#222" stroke-width="1" fill="none"/><polygon points="0.8,8.9 3.2,4.6 5.6,8.2" fill="#222"/></g><g transform="translate(266,8.8) scale(1.0)"><polygon points="0.5,6 6,0.5 31.5,0.5 26,6" fill="#f4f4f4" stroke="#4a4a4a" stroke-width="0.9"/><rect x="0.5" y="6" width="25.5" height="25.5" fill="#dcdcdc" stroke="#4a4a4a" stroke-width="0.9"/><polygon points="26,6 31.5,0.5 31.5,26 26,31.5" fill="#c2c2c2" stroke="#4a4a4a" stroke-width="0.9"/><circle cx="13.5" cy="18.5" r="8" fill="#fff" stroke="#444" stroke-width="0.9"/><clipPath id="hclip"><circle cx="13.5" cy="18.5" r="6.4"/></clipPath><g clip-path="url(#hclip)"><circle cx="13.5" cy="18.5" r="6.4" fill="#6cb0e8"/><circle cx="16.6" cy="15.4" r="5.6" fill="#fff"/></g></g><g transform="translate(309,9) scale(1.0)"><rect x="0.5" y="3" width="6.5" height="6.5" fill="#fff" stroke="#444" stroke-width="1"/><rect x="21.5" y="3" width="6.5" height="6.5" fill="#6cb0e8"/><rect x="0.5" y="24" width="6.5" height="6.5" fill="#6cb0e8"/><rect x="21.5" y="24" width="6.5" height="6.5" fill="#6cb0e8"/><path d="M8.5,6.3 H20 M3.8,11 V22.5 M8.5,27.3 H20" stroke="#444" stroke-width="0.9"/></g><g transform="translate(352,9.4) scale(1.0)"><path d="M3.8,12 Q3.8,8 8,6.5 L12,2.5 Q13.5,1.5 16,1.5 L24,1.5 Q28,1.5 30,5 Q30.8,7 30.8,10 L30.8,24 Q30.8,26.5 28,29 L25,31.5 Q24,32 21,32 L9,32 Q3.8,32 3.8,26Z" fill="#b086e8" stroke="#9361d6" stroke-width="0.8"/><path d="M4.5,8.5 L10.5,3 Q12.5,2 16,2 L25,2 L20,8.5Z" fill="#d3b4f7"/><path d="M22.5,9 L30.2,4 V25 L22.5,31.5Z" fill="#8f5fd3"/><rect x="5" y="9.5" width="16.5" height="21" rx="3" fill="#a677e2"/><path d="M4,19.7 H22.5 M13,9 V31.8 M26.5,6.5 V28" stroke="#8250c4" stroke-width="0.8"/><polygon points="27.30,0.40 28.68,5.27 33.10,2.80 30.63,7.22 35.50,8.60 30.63,9.98 33.10,14.40 28.68,11.93 27.30,16.80 25.92,11.93 21.50,14.40 23.97,9.98 19.10,8.60 23.97,7.22 21.50,2.80 25.92,5.27" fill="#f5a300" stroke="#fff" stroke-width="1.4" paint-order="stroke"/></g><g transform="translate(395,9) scale(1.0)"><path d="M4.5,4.5 Q10,9 12.5,15 L14.4,22 L16.5,15 Q19,10 25.5,8" stroke="#6cb0e8" stroke-width="4" fill="none" stroke-linejoin="round"/><path d="M11,14.5 L18.5,14.5 L14.6,23 Z" fill="#6cb0e8"/><polygon points="12.9,14.8 16.5,14.8 14.7,19" fill="#f1f1f1"/><rect x="0.5" y="0.5" width="6.4" height="6.2" fill="#fff" stroke="#555" stroke-width="1"/><polygon points="26.3,2 30.9,4.4 31.6,9.3 27.6,11.3 23.6,8.2" fill="#fff" stroke="#555" stroke-width="1"/><circle cx="14.4" cy="26.5" r="5" fill="#6cb0e8"/><circle cx="14.4" cy="26.5" r="3.3" fill="#fff" stroke="#555" stroke-width="0.9"/><path d="M14.4,24.8 V28.2 M12.7,26.5 H16.1" stroke="#555" stroke-width="0.7"/><circle cx="14.4" cy="26.5" r="1.3" fill="none" stroke="#555" stroke-width="0.6"/></g><g transform="translate(449.5,8) scale(1.0)"><path d="M0.8,32.7 V7 L6.9,1.35 H11.5" fill="none" stroke="#444" stroke-width="0.9"/><polygon points="0.8,7 6.9,1.35 13,1.35 7.3,7" fill="#f4f4f4"/><rect x="1.2" y="7" width="6.1" height="25.3" fill="#dcdcdc"/><path d="M0.8,32.3 H6.5" stroke="#444" stroke-width="0.9"/><polygon points="7.3,7 13,1.35 22.3,1.35 16.7,7" fill="#8fcdf7"/><rect x="7.3" y="7" width="9.4" height="25.7" fill="#6cb0e8"/><polygon points="16.7,7 22.3,1.35 22.3,27.5 16.7,32.7" fill="#4d94d2"/><path d="M19.5,16.3 H27" stroke="#fff" stroke-width="2.4"/><path d="M19.8,16.3 H26.5" stroke="#222" stroke-width="1.1"/><polygon points="29.3,16.3 25.3,13.9 25.3,18.7" fill="#222"/></g><g transform="translate(491,8.5) scale(1.0)"><polygon points="1.4,7.9 8.9,0.85 17.8,0.85 13.5,6.5 14.5,7.9" fill="#f4f4f4"/><path d="M17.8,0.85 Q31,3 32.7,14.4 L26.6,20 Q25,9 13.5,6.5Z" fill="#6cb0e8"/><path d="M1.4,32.2 V7.9 H13.5 Q24.5,9.5 25.7,21.5 V32.2Z" fill="#dcdcdc" stroke="#444" stroke-width="0.9"/><polygon points="25.7,21.5 32.7,15.4 32.7,25.2 25.7,32.2" fill="#c2c2c2" stroke="#444" stroke-width="0.9"/><path d="M1.4,7.9 L8.9,0.85 H17.8" fill="none" stroke="#444" stroke-width="0.9"/></g><g transform="translate(534.6,8.5) scale(1.0)"><polygon points="0.8,7.9 8.3,0.85 32.2,0.85 25.1,7.9" fill="#f4f4f4" stroke="#444" stroke-width="0.9"/><rect x="0.8" y="7.9" width="24.3" height="24.3" fill="#dcdcdc" stroke="#444" stroke-width="0.9"/><polygon points="25.1,7.9 32.2,0.85 32.2,25.2 25.1,32.2" fill="#c2c2c2" stroke="#444" stroke-width="0.9"/><rect x="3.2" y="11.6" width="18.2" height="17.3" fill="#efefef"/><rect x="4.6" y="12.5" width="7.4" height="15.5" fill="#3f86c6"/><polygon points="4.6,28 12,20.5 20.5,20.5 20.5,28" fill="#8fcdf7"/></g><g transform="translate(577.8,8.5) scale(1.0)"><polygon points="0.2,14.9 5.3,10.7 10.5,10.7 10.5,5.1 14.7,0.85 32,0.85 32,18.6 28.2,22.4 22.2,22.4 22.2,28.5 18.4,32.2 0.2,32.2" fill="#6cb0e8"/><polygon points="0.2,14.9 5.3,10.7 10.5,10.7 10.5,14.9" fill="#8fcdf7"/><polygon points="10.5,5.1 14.7,0.85 32,0.85 28.2,5.1" fill="#8fcdf7"/><polygon points="28.2,5.1 32,0.85 32,18.6 28.2,22.4" fill="#4d94d2"/><polygon points="18.4,22.4 22.2,22.4 22.2,28.5 18.4,32.2" fill="#4d94d2"/></g><g transform="translate(621,9) scale(1.0)"><polygon points="2.1,6.2 8.2,0.1 29.8,0.1 23.7,6.2" fill="#8fcdf7"/><rect x="2.1" y="6.2" width="21.6" height="9.4" fill="#6cb0e8"/><polygon points="23.7,6.2 29.8,0.1 29.8,10.5 23.7,15.6" fill="#4d94d2"/><polygon points="2.1,21 23.7,21 29.8,16 29.8,25.4 24.4,30.5 2.1,30.5" fill="#d8d8d8"/><polygon points="23.7,21 29.8,16 29.8,25.4 24.4,30.5" fill="#bdbdbd"/><path d="M2.1,21 V30.5 H24.4 L29.8,25.4 V16" fill="none" stroke="#555" stroke-width="0.9"/><path d="M0.1,18.3 H24.4 L31.8,10.9" stroke="#fff" stroke-width="3" fill="none"/><path d="M0.1,18.3 H24.4 L31.8,10.9" stroke="#1f8fe6" stroke-width="1.1" fill="none"/></g><g transform="translate(664,8.8) scale(1.0)"><path d="M15.7,5 V26.4 M5,15.9 H26.6" stroke="#262626" stroke-width="2.8"/><polygon points="15.7,0.7 10.8,8.1 20.6,8.1" fill="#262626"/><polygon points="15.7,31.7 10.8,24.3 20.6,24.3" fill="#262626"/><polygon points="0.6,15.9 8,11 8,20.8" fill="#262626"/><polygon points="31.4,15.9 24,11 24,20.8" fill="#262626"/></g><g transform="translate(707.6,10.5) scale(1.0)"><path d="M0.9,-0.4 V28.3" stroke="#555" stroke-width="1.1"/><rect x="3.1" y="4.2" width="12.6" height="8.9" fill="#fff" stroke="#555" stroke-width="1.1"/><rect x="2.6" y="14.5" width="26.7" height="9.8" fill="#6cb0e8" stroke="#4d94d2" stroke-width="0.6"/></g><g transform="translate(760,9) scale(1.0)"><polygon points="4.8,12.2 12,3.8 23,3.8 23,12.2" fill="#ececec"/><rect x="4.8" y="12.2" width="18.2" height="17.3" fill="#dadada" stroke="#555" stroke-width="0.9"/><polygon points="15,3.8 31.8,3.8 31.8,23 23,29.5 23,12.2 31.8,3.8" fill="#c2c2c2" stroke="#555" stroke-width="0.9"/><path d="M4.8,12.2 L12.8,3.8 H31.8" stroke="#555" stroke-width="0.9" fill="none"/><rect x="0.9" y="3.8" width="9" height="4" fill="#1f86d8"/><polygon points="9,0.4 18.6,5.8 9,11.7" fill="#1f86d8"/><g transform="rotate(-40 24.8 25)"><rect x="16.8" y="22" width="9" height="6" rx="3" fill="none" stroke="#1a1a1a" stroke-width="2"/><rect x="23.8" y="22" width="9" height="6" rx="3" fill="none" stroke="#1a1a1a" stroke-width="2"/></g></g><g transform="translate(803.5,9) scale(1.0)"><polygon points="0.3,8.3 4.3,4.3 16.6,4.3 12.6,8.3" fill="#8fcdf7"/><rect x="0.3" y="8.3" width="12.3" height="11.3" fill="#6cb0e8"/><polygon points="12.6,8.3 16.6,4.3 16.6,16.2 12.6,19.6" fill="#4d94d2"/><rect x="0.3" y="19.6" width="12.3" height="11.9" fill="#dadada" stroke="#555" stroke-width="0.8"/><polygon points="12.6,19.6 16.6,16.2 28.4,16.2 24.4,19.6" fill="#ececec" stroke="#555" stroke-width="0.8"/><rect x="12.6" y="19.6" width="11.8" height="11.9" fill="#dadada" stroke="#555" stroke-width="0.8"/><polygon points="24.4,19.6 28.4,16.2 28.4,28 24.4,31.5" fill="#c2c2c2" stroke="#555" stroke-width="0.8"/><polygon points="24,0 25.5,5 30,2.3 27.3,6.8 32.3,8.3 27.3,9.8 30,14.3 25.5,11.6 24,16.6 22.5,11.6 18,14.3 20.7,9.8 15.7,8.3 20.7,6.8 18,2.3 22.5,5" fill="#f5a300"/></g><g transform="translate(846.8,9.5) scale(1.0)"><rect x="17.2" y="2.4" width="13.8" height="11.3" fill="#6cb0e8"/><path d="M15.7,2.4 V30" stroke="#d62d2d" stroke-width="1.1"/><path d="M14.8,18.3 H0.7 V29.3 H14.8" stroke="#444" stroke-width="1.1" fill="none"/></g><g transform="translate(890,9) scale(1.0)"><rect x="0.2" y="0.4" width="6.4" height="5.9" fill="#6cb0e8"/><rect x="0.7" y="6.3" width="5.9" height="5.9" fill="#fff" stroke="#444" stroke-width="0.9"/><rect x="6.6" y="6.3" width="6" height="5.9" fill="#fff" stroke="#444" stroke-width="0.9"/><path d="M5.6,14.2 V29.5 M5.6,17.2 H12.8 M5.6,22.1 H12.8 M5.6,27 H12.8" stroke="#9a9a9a" stroke-width="0.9"/><rect x="15.5" y="8.3" width="16.3" height="23.2" fill="#fff" stroke="#444" stroke-width="1"/><rect x="15.5" y="8.3" width="16.3" height="2.6" fill="#555"/><rect x="16.5" y="9.2" width="1.5" height="0.9" fill="#fff"/><path d="M15.5,13.2 H31.8 M15.5,17.7 H31.8 M15.5,22.1 H31.8 M15.5,26.5 H31.8 M20.4,10.9 V31.5" stroke="#444" stroke-width="0.8"/></g><g transform="translate(955,9.5) scale(1.0)"><polygon points="0.3,6.35 7,-0.4 28.1,-0.4 20.9,6.35" fill="#f5f5f5"/><rect x="0.3" y="6.35" width="20.6" height="20.65" fill="#dcdcdc"/><polygon points="20.9,6.35 28.1,-0.4 28.1,20.3 20.9,27" fill="#c2c2c2"/><path d="M18,27 H0.3 V6.35 L7,-0.4 H28.1 V18" fill="none" stroke="#555" stroke-width="1"/><rect x="17" y="18" width="16" height="15" fill="#f1f1f1"/><path d="M18.1,22.2 H32 M18.1,28.4 H32" stroke="#555" stroke-width="1.3"/><path d="M21.9,19.3 V25.1" stroke="#1f86d8" stroke-width="2"/><path d="M28.1,25.6 V31.3" stroke="#555" stroke-width="1.8"/></g><g transform="translate(997.8,9.5) scale(1.0)"><rect x="0.7" y="0.1" width="29.3" height="28.3" fill="#fff" stroke="#555" stroke-width="1"/><rect x="0.2" y="-0.4" width="30" height="5.3" fill="#666"/><rect x="2" y="1.5" width="3.8" height="1.9" fill="#fff"/><rect x="3.6" y="8.75" width="23.1" height="15.35" fill="#fff" stroke="#555" stroke-width="1"/><path d="M8.9,8.75 V24.1 M13.7,8.75 V24.1 M3.6,13.6 H26.7 M3.6,18.8 H26.7" stroke="#555" stroke-width="0.9"/><rect x="17.5" y="18" width="16" height="15" fill="#f1f1f1"/><path d="M18.1,22.2 H32 M18.1,28.4 H32" stroke="#555" stroke-width="1.3"/><path d="M21.9,19.3 V25.1" stroke="#1f86d8" stroke-width="2"/><path d="M28.1,25.6 V31.3" stroke="#555" stroke-width="1.8"/></g><g transform="translate(1095.7,9.5) scale(1.0)"><polygon points="0.3,8.3 9,-0.4 16.6,-0.4 9,8.3" fill="#f5f5f5"/><rect x="0.3" y="8.3" width="8.7" height="21.6" fill="#dcdcdc"/><path d="M9,29.9 H0.3 V8.3 L9,-0.4 H16.6" fill="none" stroke="#555" stroke-width="1"/><polygon points="9,8.3 18.1,-0.4 18.1,21.2 9,29.9" fill="#5cc27a"/><polygon points="21.4,8.3 30,-0.4 30,21.2 21.4,29.9" fill="#e5956a"/></g><g transform="translate(1193.5,16) scale(1.0)"><path d="M1,0 V9.5 M29.3,0 V9.5" stroke="#555" stroke-width="1"/><path d="M3,4.7 H27.3" stroke="#555" stroke-width="1"/><polygon points="1.8,4.7 6,2.5 6,6.9" fill="#555"/><polygon points="28.5,4.7 24.3,2.5 24.3,6.9" fill="#555"/><rect x="0.3" y="11" width="28.3" height="6.3" fill="#f5a300"/><path d="M2.8,11 V13.3 M5.8,11 V12.5 M8.8,11 V13.3 M11.8,11 V12.5 M14.8,11 V13.3 M17.8,11 V12.5 M20.8,11 V13.3 M23.8,11 V12.5 M26.8,11 V13.3" stroke="#9a5a00" stroke-width="0.8"/></g><g transform="translate(1257.8,10.3) scale(1.0)"><polygon points="0.5,2 2.5,0.5 20,0.5 22,2 22,7.5 0.5,7.5" fill="#8fcdf7"/><rect x="0.5" y="6" width="21.5" height="3" fill="#4d94d2"/><rect x="4.5" y="9" width="13" height="21" fill="#6cb0e8"/><path d="M4.5,12 L17.5,13.5 M4.5,15 L17.5,16.5 M4.5,18 L17.5,19.5 M4.5,21 L17.5,22.5 M4.5,24 L17.5,25.5 M4.5,27 L17.5,28.5" stroke="#9fd3f7" stroke-width="0.9"/><path d="M20.5,16 V31 M13,23.5 H28" stroke="#22a53e" stroke-width="3.6"/></g><g transform="translate(1299.7,10.3) scale(1.0)"><rect x="0.6" y="0.6" width="28.6" height="28.4" fill="#8ccbf5" stroke="#4a90cc" stroke-width="1.1"/><path d="M0.6,20 Q4,12 8.5,12 Q12,12 15.5,19 Q17.5,22 20,18.5 Q22.5,15 25.5,17 Q27.5,19 29.2,23 V29 H0.6Z" fill="#4a90cc"/><circle cx="20.8" cy="7.9" r="2.9" fill="#fff8c6"/></g><g transform="translate(1374.6,5.4) scale(1.0)"><rect x="0" y="0" width="39.4" height="39.2" rx="1.5" fill="#0696d7"/><rect x="3.3" y="3.8" width="28" height="21.3" fill="none" stroke="#74e07a" stroke-width="1.2" stroke-dasharray="3.5,2.5"/><polygon points="24.7,18.4 24.7,35 28.3,31.3 31.5,37.8 34.3,36.5 31.2,30 36.3,29.8" fill="#fff"/></g></svg>
<svg style="position:absolute;left:0;top:0" width="1500" height="64" font-family="Liberation Sans, sans-serif"><text x="18.5" y="25.8" font-size="11.6" font-weight="bold" fill="#333" textLength="90.5" lengthAdjust="spacingAndGlyphs">KONSTRUKTION</text><polygon points="115,20.7 121.5,20.7 118.25,24.7" fill="#333"/><text x="246.9" y="57.9" font-size="10.9" fill="#333" stroke="#333" stroke-width="0.2" textLength="56.1" lengthAdjust="spacingAndGlyphs">ERSTELLEN</text><polygon points="305,51.8 310.8,51.8 307.9,55.6" fill="#333"/><text x="566.2" y="57.9" font-size="10.9" fill="#333" stroke="#333" stroke-width="0.2" textLength="43.6" lengthAdjust="spacingAndGlyphs">ÄNDERN</text><polygon points="613,51.8 618.8,51.8 615.9,55.6" fill="#333"/><text x="786.1" y="57.9" font-size="10.9" fill="#333" stroke="#333" stroke-width="0.2" textLength="95.4" lengthAdjust="spacingAndGlyphs">ZUSAMMENFÜGEN</text><polygon points="885,51.8 890.8,51.8 887.9,55.6" fill="#333"/><text x="946.5" y="57.9" font-size="10.9" fill="#333" stroke="#333" stroke-width="0.2" textLength="84.7" lengthAdjust="spacingAndGlyphs">KONFIGURIEREN</text><polygon points="1034.3,51.8 1040.1,51.8 1037.2,55.6" fill="#333"/><text x="1065.4" y="57.9" font-size="10.9" fill="#333" stroke="#333" stroke-width="0.2" textLength="81.1" lengthAdjust="spacingAndGlyphs">KONSTRUIEREN</text><polygon points="1149.6,51.8 1155.3999999999999,51.8 1152.5,55.6" fill="#333"/><text x="1184.4" y="57.9" font-size="10.9" fill="#333" stroke="#333" stroke-width="0.2" textLength="40" lengthAdjust="spacingAndGlyphs">PRÜFEN</text><polygon points="1227.2,51.8 1233.0,51.8 1230.1000000000001,55.6" fill="#333"/><text x="1260.7" y="57.9" font-size="10.9" fill="#333" stroke="#333" stroke-width="0.2" textLength="51.7" lengthAdjust="spacingAndGlyphs">EINFÜGEN</text><polygon points="1315.8,51.8 1321.6,51.8 1318.7,55.6" fill="#333"/><text x="1355.7" y="57.9" font-size="10.9" fill="#333" stroke="#333" stroke-width="0.2" textLength="65.5" lengthAdjust="spacingAndGlyphs">AUSWÄHLEN</text><polygon points="1424,51.8 1429.8,51.8 1426.9,55.6" fill="#333"/></svg>
<div style="position:absolute;left:138px;top:2px;width:121px;height:4px;border-radius:2px;background:#0696d7"></div>
<div class="sep" style="left:437px"></div>
<div class="sep" style="left:749px"></div>
<div class="sep" style="left:932px"></div>
<div class="sep" style="left:1051px"></div>
<div class="sep" style="left:1170px"></div>
<div class="sep" style="left:1244px"></div>
<div class="sep" style="left:1341px"></div>
<div class="panel" style="top:71px"></div>
<svg style="position:absolute;left:8px;top:80px" width="12" height="8"><polygon points="0,4 5,0 5,8" fill="#333"/><polygon points="5,4 10,0 10,8" fill="#333"/></svg>
<svg style="position:absolute;left:0;top:70px" width="120" height="25"><text x="28.7" y="16.75" font-family="Liberation Sans, sans-serif" font-size="11.5" fill="#555" textLength="49.1" lengthAdjust="spacingAndGlyphs">BROWSER</text></svg>
<svg style="position:absolute;left:281px;top:78px" width="11" height="11"><circle cx="5.5" cy="5.5" r="5" fill="#222"/><rect x="2.5" y="4.8" width="6" height="1.6" fill="#fff"/></svg>
<div style="position:absolute;left:7px;top:101px;width:6px;height:706px;background:#c6c6c8"></div>
<div style="position:absolute;left:7px;top:250px;width:6px;height:185px;background:#9a9a9c;border-radius:3px"></div>
<div class="row" style="top:101px;width:111px"><svg style="position:absolute;left:2px;top:3px" width="18" height="14"><path d="M1,7 C3.5,1.2 14.5,1.2 17,7 C14.5,12.8 3.5,12.8 1,7Z" fill="#8f8f8f"/><circle cx="9" cy="7" r="2.9" fill="#efefef"/><circle cx="9" cy="7" r="1.6" fill="#8f8f8f"/></svg><svg style="position:absolute;left:28px;top:2px" width="17" height="17"><defs><linearGradient id="cyl" x1="0" y1="0" x2="1" y2="0"><stop offset="0" stop-color="#aab0ba"/><stop offset="0.6" stop-color="#e8eaee"/><stop offset="1" stop-color="#ffffff"/></linearGradient></defs><rect x="0.7" y="0.7" width="15.3" height="15.3" rx="4" fill="#fbfbfc" stroke="#3f4856" stroke-width="1.2"/><rect x="4.5" y="6" width="7.5" height="9" fill="url(#cyl)"/></svg><div class="rowt">Körper4</div></div>
<div class="row" style="top:125px;width:111px"><svg style="position:absolute;left:2px;top:3px" width="18" height="14"><path d="M1,7 C3.5,1.2 14.5,1.2 17,7 C14.5,12.8 3.5,12.8 1,7Z" fill="#8f8f8f"/><circle cx="9" cy="7" r="2.9" fill="#efefef"/><circle cx="9" cy="7" r="1.6" fill="#8f8f8f"/></svg><svg style="position:absolute;left:28px;top:2px" width="17" height="17"><defs><linearGradient id="cyl" x1="0" y1="0" x2="1" y2="0"><stop offset="0" stop-color="#aab0ba"/><stop offset="0.6" stop-color="#e8eaee"/><stop offset="1" stop-color="#ffffff"/></linearGradient></defs><rect x="0.7" y="0.7" width="15.3" height="15.3" rx="4" fill="#fbfbfc" stroke="#3f4856" stroke-width="1.2"/><rect x="4.5" y="6" width="7.5" height="9" fill="url(#cyl)"/></svg><div class="rowt">Körper5</div></div>
<div class="row" style="top:149px;width:111px"><svg style="position:absolute;left:2px;top:3px" width="18" height="14"><path d="M1.5,7 C4,1.8 14,1.8 16.5,7 C14,12.2 4,12.2 1.5,7Z" fill="none" stroke="#a0a0a0" stroke-width="1.1"/><circle cx="9" cy="7" r="2.5" fill="none" stroke="#a0a0a0" stroke-width="1.1"/><line x1="3.5" y1="1" x2="14.5" y2="13" stroke="#a0a0a0" stroke-width="1.1"/></svg><svg style="position:absolute;left:28px;top:2px" width="17" height="17"><defs><linearGradient id="cyl" x1="0" y1="0" x2="1" y2="0"><stop offset="0" stop-color="#aab0ba"/><stop offset="0.6" stop-color="#e8eaee"/><stop offset="1" stop-color="#ffffff"/></linearGradient></defs><rect x="0.7" y="0.7" width="15.3" height="15.3" rx="4" fill="#fbfbfc" stroke="#3f4856" stroke-width="1.2"/><rect x="4.5" y="6" width="7.5" height="9" fill="url(#cyl)"/></svg><div class="rowt">Körper6</div></div>
<div class="row" style="top:173px;width:111px"><svg style="position:absolute;left:2px;top:3px" width="18" height="14"><path d="M1.5,7 C4,1.8 14,1.8 16.5,7 C14,12.2 4,12.2 1.5,7Z" fill="none" stroke="#a0a0a0" stroke-width="1.1"/><circle cx="9" cy="7" r="2.5" fill="none" stroke="#a0a0a0" stroke-width="1.1"/><line x1="3.5" y1="1" x2="14.5" y2="13" stroke="#a0a0a0" stroke-width="1.1"/></svg><svg style="position:absolute;left:28px;top:2px" width="17" height="17"><defs><linearGradient id="cyl" x1="0" y1="0" x2="1" y2="0"><stop offset="0" stop-color="#aab0ba"/><stop offset="0.6" stop-color="#e8eaee"/><stop offset="1" stop-color="#ffffff"/></linearGradient></defs><rect x="0.7" y="0.7" width="15.3" height="15.3" rx="4" fill="#fbfbfc" stroke="#3f4856" stroke-width="1.2"/><rect x="4.5" y="6" width="7.5" height="9" fill="url(#cyl)"/></svg><div class="rowt">Körper7</div></div>
<div class="row" style="top:197px;width:111px"><svg style="position:absolute;left:2px;top:3px" width="18" height="14"><path d="M1.5,7 C4,1.8 14,1.8 16.5,7 C14,12.2 4,12.2 1.5,7Z" fill="none" stroke="#a0a0a0" stroke-width="1.1"/><circle cx="9" cy="7" r="2.5" fill="none" stroke="#a0a0a0" stroke-width="1.1"/><line x1="3.5" y1="1" x2="14.5" y2="13" stroke="#a0a0a0" stroke-width="1.1"/></svg><svg style="position:absolute;left:28px;top:2px" width="17" height="17"><defs><linearGradient id="cyl" x1="0" y1="0" x2="1" y2="0"><stop offset="0" stop-color="#aab0ba"/><stop offset="0.6" stop-color="#e8eaee"/><stop offset="1" stop-color="#ffffff"/></linearGradient></defs><rect x="0.7" y="0.7" width="15.3" height="15.3" rx="4" fill="#fbfbfc" stroke="#3f4856" stroke-width="1.2"/><rect x="4.5" y="6" width="7.5" height="9" fill="url(#cyl)"/></svg><div class="rowt">Körper8</div></div>
<div class="row" style="top:221px;width:111px"><svg style="position:absolute;left:2px;top:3px" width="18" height="14"><path d="M1.5,7 C4,1.8 14,1.8 16.5,7 C14,12.2 4,12.2 1.5,7Z" fill="none" stroke="#a0a0a0" stroke-width="1.1"/><circle cx="9" cy="7" r="2.5" fill="none" stroke="#a0a0a0" stroke-width="1.1"/><line x1="3.5" y1="1" x2="14.5" y2="13" stroke="#a0a0a0" stroke-width="1.1"/></svg><svg style="position:absolute;left:28px;top:2px" width="17" height="17"><defs><linearGradient id="cyl" x1="0" y1="0" x2="1" y2="0"><stop offset="0" stop-color="#aab0ba"/><stop offset="0.6" stop-color="#e8eaee"/><stop offset="1" stop-color="#ffffff"/></linearGradient></defs><rect x="0.7" y="0.7" width="15.3" height="15.3" rx="4" fill="#fbfbfc" stroke="#3f4856" stroke-width="1.2"/><rect x="4.5" y="6" width="7.5" height="9" fill="url(#cyl)"/></svg><div class="rowt">Körper9</div></div>
<div class="row" style="top:245px;width:111px"><svg style="position:absolute;left:2px;top:3px" width="18" height="14"><path d="M1.5,7 C4,1.8 14,1.8 16.5,7 C14,12.2 4,12.2 1.5,7Z" fill="none" stroke="#a0a0a0" stroke-width="1.1"/><circle cx="9" cy="7" r="2.5" fill="none" stroke="#a0a0a0" stroke-width="1.1"/><line x1="3.5" y1="1" x2="14.5" y2="13" stroke="#a0a0a0" stroke-width="1.1"/></svg><svg style="position:absolute;left:28px;top:2px" width="17" height="17"><defs><linearGradient id="cyl" x1="0" y1="0" x2="1" y2="0"><stop offset="0" stop-color="#aab0ba"/><stop offset="0.6" stop-color="#e8eaee"/><stop offset="1" stop-color="#ffffff"/></linearGradient></defs><rect x="0.7" y="0.7" width="15.3" height="15.3" rx="4" fill="#fbfbfc" stroke="#3f4856" stroke-width="1.2"/><rect x="4.5" y="6" width="7.5" height="9" fill="url(#cyl)"/></svg><div class="rowt">base (1)</div></div>
<div class="row" style="top:269px;width:119px"><svg style="position:absolute;left:2px;top:3px" width="18" height="14"><path d="M1,7 C3.5,1.2 14.5,1.2 17,7 C14.5,12.8 3.5,12.8 1,7Z" fill="#8f8f8f"/><circle cx="9" cy="7" r="2.9" fill="#efefef"/><circle cx="9" cy="7" r="1.6" fill="#8f8f8f"/></svg><svg style="position:absolute;left:28px;top:2px" width="17" height="17"><defs><linearGradient id="cyl" x1="0" y1="0" x2="1" y2="0"><stop offset="0" stop-color="#aab0ba"/><stop offset="0.6" stop-color="#e8eaee"/><stop offset="1" stop-color="#ffffff"/></linearGradient></defs><rect x="0.7" y="0.7" width="15.3" height="15.3" rx="4" fill="#fbfbfc" stroke="#3f4856" stroke-width="1.2"/><rect x="4.5" y="6" width="7.5" height="9" fill="url(#cyl)"/></svg><div class="rowt">Körper11</div></div>
<div class="row" style="top:293px;width:119px"><svg style="position:absolute;left:2px;top:3px" width="18" height="14"><path d="M1,7 C3.5,1.2 14.5,1.2 17,7 C14.5,12.8 3.5,12.8 1,7Z" fill="#8f8f8f"/><circle cx="9" cy="7" r="2.9" fill="#efefef"/><circle cx="9" cy="7" r="1.6" fill="#8f8f8f"/></svg><svg style="position:absolute;left:28px;top:2px" width="17" height="17"><defs><linearGradient id="cyl" x1="0" y1="0" x2="1" y2="0"><stop offset="0" stop-color="#aab0ba"/><stop offset="0.6" stop-color="#e8eaee"/><stop offset="1" stop-color="#ffffff"/></linearGradient></defs><rect x="0.7" y="0.7" width="15.3" height="15.3" rx="4" fill="#fbfbfc" stroke="#3f4856" stroke-width="1.2"/><rect x="4.5" y="6" width="7.5" height="9" fill="url(#cyl)"/></svg><div class="rowt">Körper13</div></div>
<div class="row" style="top:317px;width:119px"><svg style="position:absolute;left:2px;top:3px" width="18" height="14"><path d="M1,7 C3.5,1.2 14.5,1.2 17,7 C14.5,12.8 3.5,12.8 1,7Z" fill="#8f8f8f"/><circle cx="9" cy="7" r="2.9" fill="#efefef"/><circle cx="9" cy="7" r="1.6" fill="#8f8f8f"/></svg><svg style="position:absolute;left:28px;top:2px" width="17" height="17"><defs><linearGradient id="cyl" x1="0" y1="0" x2="1" y2="0"><stop offset="0" stop-color="#aab0ba"/><stop offset="0.6" stop-color="#e8eaee"/><stop offset="1" stop-color="#ffffff"/></linearGradient></defs><rect x="0.7" y="0.7" width="15.3" height="15.3" rx="4" fill="#fbfbfc" stroke="#3f4856" stroke-width="1.2"/><rect x="4.5" y="6" width="7.5" height="9" fill="url(#cyl)"/></svg><div class="rowt">Körper14</div></div>
<div class="row" style="top:341px;width:119px"><svg style="position:absolute;left:2px;top:3px" width="18" height="14"><path d="M1,7 C3.5,1.2 14.5,1.2 17,7 C14.5,12.8 3.5,12.8 1,7Z" fill="#8f8f8f"/><circle cx="9" cy="7" r="2.9" fill="#efefef"/><circle cx="9" cy="7" r="1.6" fill="#8f8f8f"/></svg><svg style="position:absolute;left:28px;top:2px" width="17" height="17"><defs><linearGradient id="cyl" x1="0" y1="0" x2="1" y2="0"><stop offset="0" stop-color="#aab0ba"/><stop offset="0.6" stop-color="#e8eaee"/><stop offset="1" stop-color="#ffffff"/></linearGradient></defs><rect x="0.7" y="0.7" width="15.3" height="15.3" rx="4" fill="#fbfbfc" stroke="#3f4856" stroke-width="1.2"/><rect x="4.5" y="6" width="7.5" height="9" fill="url(#cyl)"/></svg><div class="rowt">Körper15</div></div>
<div class="row" style="top:365px;width:119px"><svg style="position:absolute;left:2px;top:3px" width="18" height="14"><path d="M1,7 C3.5,1.2 14.5,1.2 17,7 C14.5,12.8 3.5,12.8 1,7Z" fill="#8f8f8f"/><circle cx="9" cy="7" r="2.9" fill="#efefef"/><circle cx="9" cy="7" r="1.6" fill="#8f8f8f"/></svg><svg style="position:absolute;left:28px;top:2px" width="17" height="17"><defs><linearGradient id="cyl" x1="0" y1="0" x2="1" y2="0"><stop offset="0" stop-color="#aab0ba"/><stop offset="0.6" stop-color="#e8eaee"/><stop offset="1" stop-color="#ffffff"/></linearGradient></defs><rect x="0.7" y="0.7" width="15.3" height="15.3" rx="4" fill="#fbfbfc" stroke="#3f4856" stroke-width="1.2"/><rect x="4.5" y="6" width="7.5" height="9" fill="url(#cyl)"/></svg><div class="rowt">Körper16</div></div>
<div class="row" style="top:389px;width:119px"><svg style="position:absolute;left:2px;top:3px" width="18" height="14"><path d="M1,7 C3.5,1.2 14.5,1.2 17,7 C14.5,12.8 3.5,12.8 1,7Z" fill="#8f8f8f"/><circle cx="9" cy="7" r="2.9" fill="#efefef"/><circle cx="9" cy="7" r="1.6" fill="#8f8f8f"/></svg><svg style="position:absolute;left:28px;top:2px" width="17" height="17"><defs><linearGradient id="cyl" x1="0" y1="0" x2="1" y2="0"><stop offset="0" stop-color="#aab0ba"/><stop offset="0.6" stop-color="#e8eaee"/><stop offset="1" stop-color="#ffffff"/></linearGradient></defs><rect x="0.7" y="0.7" width="15.3" height="15.3" rx="4" fill="#fbfbfc" stroke="#3f4856" stroke-width="1.2"/><rect x="4.5" y="6" width="7.5" height="9" fill="url(#cyl)"/></svg><div class="rowt">Körper17</div></div>
<div class="row" style="top:413px;width:119px"><svg style="position:absolute;left:2px;top:3px" width="18" height="14"><path d="M1,7 C3.5,1.2 14.5,1.2 17,7 C14.5,12.8 3.5,12.8 1,7Z" fill="#8f8f8f"/><circle cx="9" cy="7" r="2.9" fill="#efefef"/><circle cx="9" cy="7" r="1.6" fill="#8f8f8f"/></svg><svg style="position:absolute;left:28px;top:2px" width="17" height="17"><defs><linearGradient id="cyl" x1="0" y1="0" x2="1" y2="0"><stop offset="0" stop-color="#aab0ba"/><stop offset="0.6" stop-color="#e8eaee"/><stop offset="1" stop-color="#ffffff"/></linearGradient></defs><rect x="0.7" y="0.7" width="15.3" height="15.3" rx="4" fill="#fbfbfc" stroke="#3f4856" stroke-width="1.2"/><rect x="4.5" y="6" width="7.5" height="9" fill="url(#cyl)"/></svg><div class="rowt">Körper18</div></div>
<div class="row" style="top:437px;width:119px"><svg style="position:absolute;left:2px;top:3px" width="18" height="14"><path d="M1,7 C3.5,1.2 14.5,1.2 17,7 C14.5,12.8 3.5,12.8 1,7Z" fill="#8f8f8f"/><circle cx="9" cy="7" r="2.9" fill="#efefef"/><circle cx="9" cy="7" r="1.6" fill="#8f8f8f"/></svg><svg style="position:absolute;left:28px;top:2px" width="17" height="17"><defs><linearGradient id="cyl" x1="0" y1="0" x2="1" y2="0"><stop offset="0" stop-color="#aab0ba"/><stop offset="0.6" stop-color="#e8eaee"/><stop offset="1" stop-color="#ffffff"/></linearGradient></defs><rect x="0.7" y="0.7" width="15.3" height="15.3" rx="4" fill="#fbfbfc" stroke="#3f4856" stroke-width="1.2"/><rect x="4.5" y="6" width="7.5" height="9" fill="url(#cyl)"/></svg><div class="rowt">Körper19</div></div>
<svg style="position:absolute;left:100px;top:454px" width="95" height="4"><path d="M0,3 " fill="none" stroke="none"/><path d="M0,3.5 L2.6,0.5" stroke="#4f74b0" stroke-width="1.3"/><path d="M5,3.5 L7.6,0.5" stroke="#4f74b0" stroke-width="1.3"/><path d="M10,3.5 L12.6,0.5" stroke="#4f74b0" stroke-width="1.3"/><path d="M15,3.5 L17.6,0.5" stroke="#4f74b0" stroke-width="1.3"/><path d="M20,3.5 L22.6,0.5" stroke="#4f74b0" stroke-width="1.3"/><path d="M25,3.5 L27.6,0.5" stroke="#4f74b0" stroke-width="1.3"/><path d="M30,3.5 L32.6,0.5" stroke="#4f74b0" stroke-width="1.3"/><path d="M35,3.5 L37.6,0.5" stroke="#4f74b0" stroke-width="1.3"/><path d="M40,3.5 L42.6,0.5" stroke="#4f74b0" stroke-width="1.3"/><path d="M45,3.5 L47.6,0.5" stroke="#4f74b0" stroke-width="1.3"/><path d="M50,3.5 L52.6,0.5" stroke="#4f74b0" stroke-width="1.3"/><path d="M55,3.5 L57.6,0.5" stroke="#4f74b0" stroke-width="1.3"/><path d="M60,3.5 L62.6,0.5" stroke="#4f74b0" stroke-width="1.3"/><path d="M65,3.5 L67.6,0.5" stroke="#4f74b0" stroke-width="1.3"/><path d="M70,3.5 L72.6,0.5" stroke="#4f74b0" stroke-width="1.3"/><path d="M75,3.5 L77.6,0.5" stroke="#4f74b0" stroke-width="1.3"/><path d="M80,3.5 L82.6,0.5" stroke="#4f74b0" stroke-width="1.3"/><path d="M85,3.5 L87.6,0.5" stroke="#4f74b0" stroke-width="1.3"/><path d="M90,3.5 L92.6,0.5" stroke="#4f74b0" stroke-width="1.3"/></svg>
<div class="row" style="top:461px;width:119px"><svg style="position:absolute;left:2px;top:3px" width="18" height="14"><path d="M1,7 C3.5,1.2 14.5,1.2 17,7 C14.5,12.8 3.5,12.8 1,7Z" fill="#8f8f8f"/><circle cx="9" cy="7" r="2.9" fill="#efefef"/><circle cx="9" cy="7" r="1.6" fill="#8f8f8f"/></svg><svg style="position:absolute;left:28px;top:2px" width="17" height="17"><defs><linearGradient id="cyl" x1="0" y1="0" x2="1" y2="0"><stop offset="0" stop-color="#aab0ba"/><stop offset="0.6" stop-color="#e8eaee"/><stop offset="1" stop-color="#ffffff"/></linearGradient></defs><rect x="0.7" y="0.7" width="15.3" height="15.3" rx="4" fill="#fbfbfc" stroke="#3f4856" stroke-width="1.2"/><rect x="4.5" y="6" width="7.5" height="9" fill="url(#cyl)"/></svg><div class="rowt">Körper20</div></div>
<svg style="position:absolute;left:100px;top:478px" width="95" height="4"><path d="M0,3 " fill="none" stroke="none"/><path d="M0,3.5 L2.6,0.5" stroke="#4f74b0" stroke-width="1.3"/><path d="M5,3.5 L7.6,0.5" stroke="#4f74b0" stroke-width="1.3"/><path d="M10,3.5 L12.6,0.5" stroke="#4f74b0" stroke-width="1.3"/><path d="M15,3.5 L17.6,0.5" stroke="#4f74b0" stroke-width="1.3"/><path d="M20,3.5 L22.6,0.5" stroke="#4f74b0" stroke-width="1.3"/><path d="M25,3.5 L27.6,0.5" stroke="#4f74b0" stroke-width="1.3"/><path d="M30,3.5 L32.6,0.5" stroke="#4f74b0" stroke-width="1.3"/><path d="M35,3.5 L37.6,0.5" stroke="#4f74b0" stroke-width="1.3"/><path d="M40,3.5 L42.6,0.5" stroke="#4f74b0" stroke-width="1.3"/><path d="M45,3.5 L47.6,0.5" stroke="#4f74b0" stroke-width="1.3"/><path d="M50,3.5 L52.6,0.5" stroke="#4f74b0" stroke-width="1.3"/><path d="M55,3.5 L57.6,0.5" stroke="#4f74b0" stroke-width="1.3"/><path d="M60,3.5 L62.6,0.5" stroke="#4f74b0" stroke-width="1.3"/><path d="M65,3.5 L67.6,0.5" stroke="#4f74b0" stroke-width="1.3"/><path d="M70,3.5 L72.6,0.5" stroke="#4f74b0" stroke-width="1.3"/><path d="M75,3.5 L77.6,0.5" stroke="#4f74b0" stroke-width="1.3"/><path d="M80,3.5 L82.6,0.5" stroke="#4f74b0" stroke-width="1.3"/><path d="M85,3.5 L87.6,0.5" stroke="#4f74b0" stroke-width="1.3"/><path d="M90,3.5 L92.6,0.5" stroke="#4f74b0" stroke-width="1.3"/></svg>
<div class="row" style="top:485px;width:119px"><svg style="position:absolute;left:2px;top:3px" width="18" height="14"><path d="M1,7 C3.5,1.2 14.5,1.2 17,7 C14.5,12.8 3.5,12.8 1,7Z" fill="#8f8f8f"/><circle cx="9" cy="7" r="2.9" fill="#efefef"/><circle cx="9" cy="7" r="1.6" fill="#8f8f8f"/></svg><svg style="position:absolute;left:28px;top:2px" width="17" height="17"><defs><linearGradient id="cyl" x1="0" y1="0" x2="1" y2="0"><stop offset="0" stop-color="#aab0ba"/><stop offset="0.6" stop-color="#e8eaee"/><stop offset="1" stop-color="#ffffff"/></linearGradient></defs><rect x="0.7" y="0.7" width="15.3" height="15.3" rx="4" fill="#fbfbfc" stroke="#3f4856" stroke-width="1.2"/><rect x="4.5" y="6" width="7.5" height="9" fill="url(#cyl)"/></svg><div class="rowt">Körper21</div></div>
<div class="row" style="top:509px;width:119px"><svg style="position:absolute;left:2px;top:3px" width="18" height="14"><path d="M1,7 C3.5,1.2 14.5,1.2 17,7 C14.5,12.8 3.5,12.8 1,7Z" fill="#8f8f8f"/><circle cx="9" cy="7" r="2.9" fill="#efefef"/><circle cx="9" cy="7" r="1.6" fill="#8f8f8f"/></svg><svg style="position:absolute;left:28px;top:2px" width="17" height="17"><defs><linearGradient id="cyl" x1="0" y1="0" x2="1" y2="0"><stop offset="0" stop-color="#aab0ba"/><stop offset="0.6" stop-color="#e8eaee"/><stop offset="1" stop-color="#ffffff"/></linearGradient></defs><rect x="0.7" y="0.7" width="15.3" height="15.3" rx="4" fill="#fbfbfc" stroke="#3f4856" stroke-width="1.2"/><rect x="4.5" y="6" width="7.5" height="9" fill="url(#cyl)"/></svg><div class="rowt">Körper22</div></div>
<svg style="position:absolute;left:100px;top:526px" width="95" height="4"><path d="M0,3 " fill="none" stroke="none"/><path d="M0,3.5 L2.6,0.5" stroke="#4f74b0" stroke-width="1.3"/><path d="M5,3.5 L7.6,0.5" stroke="#4f74b0" stroke-width="1.3"/><path d="M10,3.5 L12.6,0.5" stroke="#4f74b0" stroke-width="1.3"/><path d="M15,3.5 L17.6,0.5" stroke="#4f74b0" stroke-width="1.3"/><path d="M20,3.5 L22.6,0.5" stroke="#4f74b0" stroke-width="1.3"/><path d="M25,3.5 L27.6,0.5" stroke="#4f74b0" stroke-width="1.3"/><path d="M30,3.5 L32.6,0.5" stroke="#4f74b0" stroke-width="1.3"/><path d="M35,3.5 L37.6,0.5" stroke="#4f74b0" stroke-width="1.3"/><path d="M40,3.5 L42.6,0.5" stroke="#4f74b0" stroke-width="1.3"/><path d="M45,3.5 L47.6,0.5" stroke="#4f74b0" stroke-width="1.3"/><path d="M50,3.5 L52.6,0.5" stroke="#4f74b0" stroke-width="1.3"/><path d="M55,3.5 L57.6,0.5" stroke="#4f74b0" stroke-width="1.3"/><path d="M60,3.5 L62.6,0.5" stroke="#4f74b0" stroke-width="1.3"/><path d="M65,3.5 L67.6,0.5" stroke="#4f74b0" stroke-width="1.3"/><path d="M70,3.5 L72.6,0.5" stroke="#4f74b0" stroke-width="1.3"/><path d="M75,3.5 L77.6,0.5" stroke="#4f74b0" stroke-width="1.3"/><path d="M80,3.5 L82.6,0.5" stroke="#4f74b0" stroke-width="1.3"/><path d="M85,3.5 L87.6,0.5" stroke="#4f74b0" stroke-width="1.3"/><path d="M90,3.5 L92.6,0.5" stroke="#4f74b0" stroke-width="1.3"/></svg>
<div class="row" style="top:533px;width:119px"><svg style="position:absolute;left:2px;top:3px" width="18" height="14"><path d="M1,7 C3.5,1.2 14.5,1.2 17,7 C14.5,12.8 3.5,12.8 1,7Z" fill="#8f8f8f"/><circle cx="9" cy="7" r="2.9" fill="#efefef"/><circle cx="9" cy="7" r="1.6" fill="#8f8f8f"/></svg><svg style="position:absolute;left:28px;top:2px" width="17" height="17"><defs><linearGradient id="cyl" x1="0" y1="0" x2="1" y2="0"><stop offset="0" stop-color="#aab0ba"/><stop offset="0.6" stop-color="#e8eaee"/><stop offset="1" stop-color="#ffffff"/></linearGradient></defs><rect x="0.7" y="0.7" width="15.3" height="15.3" rx="4" fill="#fbfbfc" stroke="#3f4856" stroke-width="1.2"/><rect x="4.5" y="6" width="7.5" height="9" fill="url(#cyl)"/></svg><div class="rowt">Körper23</div></div>
<svg style="position:absolute;left:100px;top:550px" width="95" height="4"><path d="M0,3 " fill="none" stroke="none"/><path d="M0,3.5 L2.6,0.5" stroke="#4f74b0" stroke-width="1.3"/><path d="M5,3.5 L7.6,0.5" stroke="#4f74b0" stroke-width="1.3"/><path d="M10,3.5 L12.6,0.5" stroke="#4f74b0" stroke-width="1.3"/><path d="M15,3.5 L17.6,0.5" stroke="#4f74b0" stroke-width="1.3"/><path d="M20,3.5 L22.6,0.5" stroke="#4f74b0" stroke-width="1.3"/><path d="M25,3.5 L27.6,0.5" stroke="#4f74b0" stroke-width="1.3"/><path d="M30,3.5 L32.6,0.5" stroke="#4f74b0" stroke-width="1.3"/><path d="M35,3.5 L37.6,0.5" stroke="#4f74b0" stroke-width="1.3"/><path d="M40,3.5 L42.6,0.5" stroke="#4f74b0" stroke-width="1.3"/><path d="M45,3.5 L47.6,0.5" stroke="#4f74b0" stroke-width="1.3"/><path d="M50,3.5 L52.6,0.5" stroke="#4f74b0" stroke-width="1.3"/><path d="M55,3.5 L57.6,0.5" stroke="#4f74b0" stroke-width="1.3"/><path d="M60,3.5 L62.6,0.5" stroke="#4f74b0" stroke-width="1.3"/><path d="M65,3.5 L67.6,0.5" stroke="#4f74b0" stroke-width="1.3"/><path d="M70,3.5 L72.6,0.5" stroke="#4f74b0" stroke-width="1.3"/><path d="M75,3.5 L77.6,0.5" stroke="#4f74b0" stroke-width="1.3"/><path d="M80,3.5 L82.6,0.5" stroke="#4f74b0" stroke-width="1.3"/><path d="M85,3.5 L87.6,0.5" stroke="#4f74b0" stroke-width="1.3"/><path d="M90,3.5 L92.6,0.5" stroke="#4f74b0" stroke-width="1.3"/></svg>
<div class="row" style="top:557px;width:119px"><svg style="position:absolute;left:2px;top:3px" width="18" height="14"><path d="M1,7 C3.5,1.2 14.5,1.2 17,7 C14.5,12.8 3.5,12.8 1,7Z" fill="#8f8f8f"/><circle cx="9" cy="7" r="2.9" fill="#efefef"/><circle cx="9" cy="7" r="1.6" fill="#8f8f8f"/></svg><svg style="position:absolute;left:28px;top:2px" width="17" height="17"><defs><linearGradient id="cyl" x1="0" y1="0" x2="1" y2="0"><stop offset="0" stop-color="#aab0ba"/><stop offset="0.6" stop-color="#e8eaee"/><stop offset="1" stop-color="#ffffff"/></linearGradient></defs><rect x="0.7" y="0.7" width="15.3" height="15.3" rx="4" fill="#fbfbfc" stroke="#3f4856" stroke-width="1.2"/><rect x="4.5" y="6" width="7.5" height="9" fill="url(#cyl)"/></svg><div class="rowt">Körper24</div></div>
<div class="row" style="top:581px;width:119px"><svg style="position:absolute;left:2px;top:3px" width="18" height="14"><path d="M1,7 C3.5,1.2 14.5,1.2 17,7 C14.5,12.8 3.5,12.8 1,7Z" fill="#8f8f8f"/><circle cx="9" cy="7" r="2.9" fill="#efefef"/><circle cx="9" cy="7" r="1.6" fill="#8f8f8f"/></svg><svg style="position:absolute;left:28px;top:2px" width="17" height="17"><defs><linearGradient id="cyl" x1="0" y1="0" x2="1" y2="0"><stop offset="0" stop-color="#aab0ba"/><stop offset="0.6" stop-color="#e8eaee"/><stop offset="1" stop-color="#ffffff"/></linearGradient></defs><rect x="0.7" y="0.7" width="15.3" height="15.3" rx="4" fill="#fbfbfc" stroke="#3f4856" stroke-width="1.2"/><rect x="4.5" y="6" width="7.5" height="9" fill="url(#cyl)"/></svg><div class="rowt">Körper29</div></div>
<div class="row" style="top:605px;width:119px"><svg style="position:absolute;left:2px;top:3px" width="18" height="14"><path d="M1,7 C3.5,1.2 14.5,1.2 17,7 C14.5,12.8 3.5,12.8 1,7Z" fill="#8f8f8f"/><circle cx="9" cy="7" r="2.9" fill="#efefef"/><circle cx="9" cy="7" r="1.6" fill="#8f8f8f"/></svg><svg style="position:absolute;left:28px;top:2px" width="17" height="17"><defs><linearGradient id="cyl" x1="0" y1="0" x2="1" y2="0"><stop offset="0" stop-color="#aab0ba"/><stop offset="0.6" stop-color="#e8eaee"/><stop offset="1" stop-color="#ffffff"/></linearGradient></defs><rect x="0.7" y="0.7" width="15.3" height="15.3" rx="4" fill="#fbfbfc" stroke="#3f4856" stroke-width="1.2"/><rect x="4.5" y="6" width="7.5" height="9" fill="url(#cyl)"/></svg><div class="rowt">Körper30</div></div>
<div class="row" style="top:629px;width:119px"><svg style="position:absolute;left:2px;top:3px" width="18" height="14"><path d="M1,7 C3.5,1.2 14.5,1.2 17,7 C14.5,12.8 3.5,12.8 1,7Z" fill="#8f8f8f"/><circle cx="9" cy="7" r="2.9" fill="#efefef"/><circle cx="9" cy="7" r="1.6" fill="#8f8f8f"/></svg><svg style="position:absolute;left:28px;top:2px" width="17" height="17"><defs><linearGradient id="cyl" x1="0" y1="0" x2="1" y2="0"><stop offset="0" stop-color="#aab0ba"/><stop offset="0.6" stop-color="#e8eaee"/><stop offset="1" stop-color="#ffffff"/></linearGradient></defs><rect x="0.7" y="0.7" width="15.3" height="15.3" rx="4" fill="#fbfbfc" stroke="#3f4856" stroke-width="1.2"/><rect x="4.5" y="6" width="7.5" height="9" fill="url(#cyl)"/></svg><div class="rowt">Körper31</div></div>
<div class="row" style="top:653px;width:119px"><svg style="position:absolute;left:2px;top:3px" width="18" height="14"><path d="M1,7 C3.5,1.2 14.5,1.2 17,7 C14.5,12.8 3.5,12.8 1,7Z" fill="#8f8f8f"/><circle cx="9" cy="7" r="2.9" fill="#efefef"/><circle cx="9" cy="7" r="1.6" fill="#8f8f8f"/></svg><svg style="position:absolute;left:28px;top:2px" width="17" height="17"><defs><linearGradient id="cyl" x1="0" y1="0" x2="1" y2="0"><stop offset="0" stop-color="#aab0ba"/><stop offset="0.6" stop-color="#e8eaee"/><stop offset="1" stop-color="#ffffff"/></linearGradient></defs><rect x="0.7" y="0.7" width="15.3" height="15.3" rx="4" fill="#fbfbfc" stroke="#3f4856" stroke-width="1.2"/><rect x="4.5" y="6" width="7.5" height="9" fill="url(#cyl)"/></svg><div class="rowt">Körper32</div></div>
<div class="row" style="top:677px;width:119px"><svg style="position:absolute;left:2px;top:3px" width="18" height="14"><path d="M1,7 C3.5,1.2 14.5,1.2 17,7 C14.5,12.8 3.5,12.8 1,7Z" fill="#8f8f8f"/><circle cx="9" cy="7" r="2.9" fill="#efefef"/><circle cx="9" cy="7" r="1.6" fill="#8f8f8f"/></svg><svg style="position:absolute;left:28px;top:2px" width="17" height="17"><defs><linearGradient id="cyl" x1="0" y1="0" x2="1" y2="0"><stop offset="0" stop-color="#aab0ba"/><stop offset="0.6" stop-color="#e8eaee"/><stop offset="1" stop-color="#ffffff"/></linearGradient></defs><rect x="0.7" y="0.7" width="15.3" height="15.3" rx="4" fill="#fbfbfc" stroke="#3f4856" stroke-width="1.2"/><rect x="4.5" y="6" width="7.5" height="9" fill="url(#cyl)"/></svg><div class="rowt">Körper33</div></div>
<div class="row" style="top:701px;width:119px"><svg style="position:absolute;left:2px;top:3px" width="18" height="14"><path d="M1,7 C3.5,1.2 14.5,1.2 17,7 C14.5,12.8 3.5,12.8 1,7Z" fill="#8f8f8f"/><circle cx="9" cy="7" r="2.9" fill="#efefef"/><circle cx="9" cy="7" r="1.6" fill="#8f8f8f"/></svg><svg style="position:absolute;left:28px;top:2px" width="17" height="17"><defs><linearGradient id="cyl" x1="0" y1="0" x2="1" y2="0"><stop offset="0" stop-color="#aab0ba"/><stop offset="0.6" stop-color="#e8eaee"/><stop offset="1" stop-color="#ffffff"/></linearGradient></defs><rect x="0.7" y="0.7" width="15.3" height="15.3" rx="4" fill="#fbfbfc" stroke="#3f4856" stroke-width="1.2"/><rect x="4.5" y="6" width="7.5" height="9" fill="url(#cyl)"/></svg><div class="rowt">Körper35</div></div>
<div class="row" style="top:725px;width:119px"><svg style="position:absolute;left:2px;top:3px" width="18" height="14"><path d="M1,7 C3.5,1.2 14.5,1.2 17,7 C14.5,12.8 3.5,12.8 1,7Z" fill="#8f8f8f"/><circle cx="9" cy="7" r="2.9" fill="#efefef"/><circle cx="9" cy="7" r="1.6" fill="#8f8f8f"/></svg><svg style="position:absolute;left:28px;top:2px" width="17" height="17"><defs><linearGradient id="cyl" x1="0" y1="0" x2="1" y2="0"><stop offset="0" stop-color="#aab0ba"/><stop offset="0.6" stop-color="#e8eaee"/><stop offset="1" stop-color="#ffffff"/></linearGradient></defs><rect x="0.7" y="0.7" width="15.3" height="15.3" rx="4" fill="#fbfbfc" stroke="#3f4856" stroke-width="1.2"/><rect x="4.5" y="6" width="7.5" height="9" fill="url(#cyl)"/></svg><div class="rowt">Körper36</div></div>
<div class="row" style="top:749px;width:119px"><svg style="position:absolute;left:2px;top:3px" width="18" height="14"><path d="M1,7 C3.5,1.2 14.5,1.2 17,7 C14.5,12.8 3.5,12.8 1,7Z" fill="#8f8f8f"/><circle cx="9" cy="7" r="2.9" fill="#efefef"/><circle cx="9" cy="7" r="1.6" fill="#8f8f8f"/></svg><svg style="position:absolute;left:28px;top:2px" width="17" height="17"><defs><linearGradient id="cyl" x1="0" y1="0" x2="1" y2="0"><stop offset="0" stop-color="#aab0ba"/><stop offset="0.6" stop-color="#e8eaee"/><stop offset="1" stop-color="#ffffff"/></linearGradient></defs><rect x="0.7" y="0.7" width="15.3" height="15.3" rx="4" fill="#fbfbfc" stroke="#3f4856" stroke-width="1.2"/><rect x="4.5" y="6" width="7.5" height="9" fill="url(#cyl)"/></svg><div class="rowt">Körper37</div></div>
<div class="row" style="top:773px;width:119px"><svg style="position:absolute;left:2px;top:3px" width="18" height="14"><path d="M1.5,7 C4,1.8 14,1.8 16.5,7 C14,12.2 4,12.2 1.5,7Z" fill="none" stroke="#a0a0a0" stroke-width="1.1"/><circle cx="9" cy="7" r="2.5" fill="none" stroke="#a0a0a0" stroke-width="1.1"/><line x1="3.5" y1="1" x2="14.5" y2="13" stroke="#a0a0a0" stroke-width="1.1"/></svg><svg style="position:absolute;left:28px;top:2px" width="17" height="17"><defs><linearGradient id="cyl" x1="0" y1="0" x2="1" y2="0"><stop offset="0" stop-color="#aab0ba"/><stop offset="0.6" stop-color="#e8eaee"/><stop offset="1" stop-color="#ffffff"/></linearGradient></defs><rect x="0.7" y="0.7" width="15.3" height="15.3" rx="4" fill="#fbfbfc" stroke="#3f4856" stroke-width="1.2"/><rect x="4.5" y="6" width="7.5" height="9" fill="url(#cyl)"/></svg><div class="rowt">Körper38</div></div>
<div class="row" style="top:797px;width:119px"><svg style="position:absolute;left:2px;top:3px" width="18" height="14"><path d="M1.5,7 C4,1.8 14,1.8 16.5,7 C14,12.2 4,12.2 1.5,7Z" fill="none" stroke="#a0a0a0" stroke-width="1.1"/><circle cx="9" cy="7" r="2.5" fill="none" stroke="#a0a0a0" stroke-width="1.1"/><line x1="3.5" y1="1" x2="14.5" y2="13" stroke="#a0a0a0" stroke-width="1.1"/></svg><svg style="position:absolute;left:28px;top:2px" width="17" height="17"><defs><linearGradient id="cyl" x1="0" y1="0" x2="1" y2="0"><stop offset="0" stop-color="#aab0ba"/><stop offset="0.6" stop-color="#e8eaee"/><stop offset="1" stop-color="#ffffff"/></linearGradient></defs><rect x="0.7" y="0.7" width="15.3" height="15.3" rx="4" fill="#fbfbfc" stroke="#3f4856" stroke-width="1.2"/><rect x="4.5" y="6" width="7.5" height="9" fill="url(#cyl)"/></svg><div class="rowt">Körper39</div></div>
<div class="panel" style="top:829px"></div>
<svg style="position:absolute;left:0;top:828px" width="120" height="25"><text x="28.8" y="17" font-family="Liberation Sans, sans-serif" font-size="11.5" fill="#555" textLength="75.1" lengthAdjust="spacingAndGlyphs">KOMMENTARE</text></svg>
<svg style="position:absolute;left:281px;top:836px" width="11" height="11"><circle cx="5.5" cy="5.5" r="5" fill="#222"/><rect x="2.5" y="4.8" width="6" height="1.6" fill="#fff"/><rect x="4.7" y="2.5" width="1.6" height="6" fill="#fff"/></svg>
<svg style="position:absolute;left:0;top:0" width="1919" height="905">
<rect x="841.2" y="828.4" width="236.8" height="22.9" fill="#eeeeee" opacity="0.95"/>
<g stroke="#333" fill="none" stroke-width="1"><path d="M851.5,834.5 V847" stroke-width="2.6" stroke="#333"/><path d="M851.5,835 V846.5" stroke-width="1.2" stroke="#f4f4f4"/><polygon points="851.5,832.2 848.6,836 854.4,836" fill="#333" stroke="none"/><path d="M849,842.8 Q843.5,841.5 844.5,839.5 Q847,837 852,837.2 Q858,837.5 859.8,840 Q859.5,842.8 854,843.3"/><polygon points="846.5,842.5 849.8,840.3 849.6,844.6" fill="#333" stroke="none"/></g>
<polygon points="865.3,838 871.0,838 868.15,841.7" fill="#333"/>
<g fill="none" stroke="#444" stroke-width="1"><rect x="877.2" y="838" width="15.4" height="9.5" rx="0.8" fill="#f5f5f5"/><rect x="880.3" y="841" width="9.2" height="3.6" fill="#b8bcc4"/><path d="M879,837.5 L881,833.5 L882.5,836 L886,833 L889,836.5 L891,834.5 L891.5,837.5"/></g>
<path d="M905,841.5 Q904,840 905.3,839.5 L907.5,841.5 L907.2,834.8 Q908.2,833.5 909.2,834.8 L909.5,839.8 L909.8,833.2 Q910.8,832 911.8,833.2 L912,839.8 L912.6,833.7 Q913.6,832.8 914.6,833.8 L914.5,840 L915.6,835.4 Q916.6,834.6 917.5,835.6 L917.2,842 Q916.5,847 912.5,847.6 L909.5,847.6 Q907.5,846 905,841.5Z" fill="#fff" stroke="#333" stroke-width="0.9"/>
<circle cx="934" cy="839.5" r="4.6" fill="#e4eef2" stroke="#333" stroke-width="1.1"/><path d="M937.3,842.8 L940.8,846.4" stroke="#333" stroke-width="2.4"/><path d="M942.3,833 V837 M940.3,835 H944.3 M940.3,839.3 H944.3" stroke="#333" stroke-width="0.8"/>
<rect x="955" y="832.5" width="15.5" height="15.2" fill="none" stroke="#444" stroke-width="0.8" stroke-dasharray="1.2,1.2"/><circle cx="962" cy="838.8" r="5.3" fill="#e4eef2" stroke="#333" stroke-width="1.1"/><path d="M965.8,842.5 L969.6,846.3" stroke="#333" stroke-width="2.4"/>
<polygon points="976.2,838 981.9000000000001,838 979.0500000000001,841.7" fill="#333"/>
<rect x="988" y="832.4" width="15.8" height="12" rx="1.2" fill="#f5f5f5" stroke="#444" stroke-width="1"/><rect x="990" y="834.3" width="11.8" height="8.3" fill="#8fb0dc" stroke="#5d7fb0" stroke-width="0.5"/><path d="M993.5,844.6 L993,846.8 H998.8 L998.3,844.6" fill="#ddd" stroke="#444" stroke-width="0.8"/>
<polygon points="1006,838 1011.7,838 1008.85,841.7" fill="#333"/>
<rect x="1019.5" y="832.5" width="15.5" height="15.3" rx="1" fill="#7d8089" stroke="#555" stroke-width="0.9"/><path d="M1022.6,832.5 V847.8 M1019.5,835.6 H1035" stroke="#eeeeee" stroke-width="0.9"/><path d="M1025.7,832.5 V847.8 M1019.5,838.6 H1035" stroke="#eeeeee" stroke-width="0.9"/><path d="M1028.8,832.5 V847.8 M1019.5,841.7 H1035" stroke="#eeeeee" stroke-width="0.9"/><path d="M1031.9,832.5 V847.8 M1019.5,844.7 H1035" stroke="#eeeeee" stroke-width="0.9"/>
<polygon points="1037,838 1042.7,838 1039.85,841.7" fill="#333"/>
<rect x="1050" y="832.8" width="14.8" height="14.8" rx="1" fill="#4a6fb0"/><rect x="1051.3" y="834.1" width="5.4" height="5.4" fill="#9fbbe6"/><rect x="1058.1" y="834.1" width="5.4" height="5.4" fill="#9fbbe6"/><rect x="1051.3" y="840.9" width="5.4" height="5.4" fill="#9fbbe6"/><rect x="1058.1" y="840.9" width="5.4" height="5.4" fill="#9fbbe6"/>
<polygon points="1067.4,838 1073.1000000000001,838 1070.25,841.7" fill="#333"/>
</svg>
<svg style="position:absolute;left:1780px;top:70px" width="139" height="130" viewBox="1780 70 139 130">
<defs><filter id="vcblur" x="-50%" y="-50%" width="200%" height="200%"><feGaussianBlur stdDeviation="5"/></filter><linearGradient id="vcF" x1="0" y1="0" x2="0" y2="1"><stop offset="0" stop-color="#ececec"/><stop offset="1" stop-color="#d9d9d9"/></linearGradient><linearGradient id="vcR" x1="0" y1="0" x2="0" y2="1"><stop offset="0" stop-color="#e6e6e6"/><stop offset="1" stop-color="#d2d2d2"/></linearGradient></defs>
<ellipse cx="1858" cy="166" rx="30" ry="11" fill="#777" opacity="0.45" filter="url(#vcblur)"/>
<polygon points="1820.8,114.5 1846.7,96.6 1887.6,105.2 1866.8,124.6" fill="#ededed" stroke="#aaa" stroke-width="0.7" stroke-dasharray="2,1"/>
<polygon points="1820.8,114.5 1866.8,124.6 1865.3,169.1 1824.4,154.7" fill="url(#vcF)" stroke="#aaa" stroke-width="0.7" stroke-dasharray="2,1"/>
<polygon points="1866.8,124.6 1887.6,105.2 1886.2,145.4 1865.3,169.1" fill="url(#vcR)" stroke="#aaa" stroke-width="0.7" stroke-dasharray="2,1"/>
<rect x="1858" y="119" width="8" height="8" fill="#dfe1e5"/>
<text transform="matrix(0.97,0.2,0,1,1826,139)" font-family="Liberation Sans, sans-serif" font-size="9.5" font-weight="bold" fill="#9a9ca2" textLength="36" lengthAdjust="spacingAndGlyphs">HINTEN</text>
<text transform="matrix(-0.97,-0.22,0.5,-0.5,1867,112)" font-family="Liberation Sans, sans-serif" font-size="9" font-weight="bold" fill="#9a9ca2" textLength="26" lengthAdjust="spacingAndGlyphs">OBEN</text>
<text transform="matrix(-0.6,0.55,0,1,1881,133)" font-family="Liberation Sans, sans-serif" font-size="8" font-weight="bold" fill="#9a9ca2" textLength="16" lengthAdjust="spacingAndGlyphs">LINKS</text>
<path d="M1885.4,144.7 L1889.7,98" stroke="#6f6ff5" stroke-width="1.6"/>
<path d="M1885.4,145 L1863.2,174.1" stroke="#74e474" stroke-width="1.6"/>
<text x="1885.5" y="95.8" font-family="Liberation Sans, sans-serif" font-size="13" fill="#6f6ff5">Z</text>
<text x="1854.6" y="185" font-family="Liberation Sans, sans-serif" font-size="13" fill="#74e474">Y</text>
</svg>
<svg style="position:absolute;left:1890px;top:836px" width="18" height="18"><path d="M8.5,1.5 A7,7 0 1 1 8.5,15.5 A7,7 0 0 1 1.5,8.5 A7,7 0 0 1 8.5,1.5Z" fill="#111"/><path d="M3.5,10 L13,5.5 M4.5,12 L14,7.5 M6.5,13 L14.5,9.5" stroke="#ddd" stroke-width="0.9"/></svg>
<div id="tl"></div>
<svg style="position:absolute;left:0;top:0" width="1919" height="905">
<rect x="0" y="858" width="1919" height="3" fill="#cdcdcd"/>
<rect x="10.8" y="883.2" width="2.1" height="11.7" fill="#606060"/><polygon points="13.7,889 22,883.2 22,894.9" fill="#606060"/>
<polygon points="35.3,889 44.9,883.2 44.9,894.9" fill="#606060"/><rect x="46.1" y="887.2" width="1.9" height="3.6" fill="#606060"/>
<polygon points="61.1,881.2 73.2,888.5 61.1,895.7" fill="#606060"/>
<rect x="84.8" y="887.2" width="2.1" height="3.6" fill="#606060"/><polygon points="88.1,883.2 97.7,889 88.1,894.9" fill="#606060"/>
<polygon points="111,883.2 119.7,889 111,894.9" fill="#606060"/><rect x="119.7" y="883.2" width="2.3" height="11.7" fill="#606060"/>
<rect x="136" y="900" width="3" height="2" fill="#c8c8c8"/><rect x="141" y="900" width="3.3" height="2" fill="#c8c8c8"/><rect x="147" y="900" width="1717" height="2" fill="#c8c8c8"/>
<g transform="translate(0.0,0)"><rect x="146.3" y="876.5" width="6.3" height="7.2" rx="1.8" fill="#e8e9ec" stroke="#6a6a6a" stroke-width="0.9"/><rect x="148.8" y="877.5" width="1.3" height="5" fill="#b5b8bd"/><rect x="153.2" y="883.3" width="6.3" height="7.4" rx="1.8" fill="#e8e9ec" stroke="#6a6a6a" stroke-width="0.9"/><rect x="155.7" y="884.3" width="1.3" height="5.2" fill="#b5b8bd"/><path d="M147.8,884.5 V887.3 H150.6" stroke="#4a90e2" stroke-width="0.9" fill="none"/><polygon points="152,887.3 150.2,886 150.2,888.6" fill="#4a90e2"/></g>
<rect x="153.0" y="895" width="1.8" height="5" fill="#c8c8c8"/>
<g transform="translate(176.4,883.4)"><path d="M0,-5 V5 M-5,0 H5" stroke="#222" stroke-width="1.6"/><polygon points="0,-7.4 -3,-3.8 3,-3.8" fill="#222"/><polygon points="0,7.4 -3,3.8 3,3.8" fill="#222"/><polygon points="-7.4,0 -3.8,-3 -3.8,3" fill="#222"/><polygon points="7.4,0 3.8,-3 3.8,3" fill="#222"/></g>
<rect x="177.0" y="895" width="1.8" height="5" fill="#c8c8c8"/>
<g transform="translate(0.0,0)"><path d="M193.3,876 V890.9" stroke="#555" stroke-width="0.9"/><rect x="195.6" y="878.3" width="6" height="4" fill="#fff" stroke="#444" stroke-width="0.8"/><rect x="195.3" y="884.2" width="12.4" height="4.5" fill="#62ade8" stroke="#3f86c6" stroke-width="0.6"/></g>
<rect x="201.0" y="895" width="1.8" height="5" fill="#c8c8c8"/>
<g transform="translate(0.0,0)"><rect x="217.8" y="876.9" width="12.8" height="13.2" fill="none" stroke="#bbb" stroke-width="0.9"/><circle cx="217.8" cy="876.9" r="0.9" fill="#2e8fe6"/><circle cx="230.6" cy="876.9" r="0.9" fill="#2e8fe6"/><circle cx="217.8" cy="890.1" r="0.9" fill="#2e8fe6"/><circle cx="221" cy="880.3" r="0.8" fill="#2e8fe6"/><circle cx="227.5" cy="880.3" r="0.8" fill="#2e8fe6"/><circle cx="221" cy="886.3" r="0.8" fill="#2e8fe6"/><path d="M221.8,880.3 H226.7 M221,881.1 V885.5 M227.8,881 Q227,886 221.8,886.3" stroke="#666" stroke-width="0.6" fill="none"/><path d="M225.5,889.5 L230.5,884.5" stroke="#f0b43c" stroke-width="2.6"/><path d="M230.3,884.7 L232.3,882.7" stroke="#e8352c" stroke-width="2.6"/><polygon points="224.2,891 225,888.6 226.5,890.1" fill="#444"/></g>
<rect x="224.9" y="895" width="1.8" height="5" fill="#c8c8c8"/>
<g transform="translate(96.0,0)"><rect x="146.3" y="876.5" width="6.3" height="7.2" rx="1.8" fill="#e8e9ec" stroke="#6a6a6a" stroke-width="0.9"/><rect x="148.8" y="877.5" width="1.3" height="5" fill="#b5b8bd"/><rect x="153.2" y="883.3" width="6.3" height="7.4" rx="1.8" fill="#e8e9ec" stroke="#6a6a6a" stroke-width="0.9"/><rect x="155.7" y="884.3" width="1.3" height="5.2" fill="#b5b8bd"/><path d="M147.8,884.5 V887.3 H150.6" stroke="#4a90e2" stroke-width="0.9" fill="none"/><polygon points="152,887.3 150.2,886 150.2,888.6" fill="#4a90e2"/></g>
<rect x="248.9" y="895" width="1.8" height="5" fill="#c8c8c8"/>
<g transform="translate(272.4,883.4)"><path d="M0,-5 V5 M-5,0 H5" stroke="#222" stroke-width="1.6"/><polygon points="0,-7.4 -3,-3.8 3,-3.8" fill="#222"/><polygon points="0,7.4 -3,3.8 3,3.8" fill="#222"/><polygon points="-7.4,0 -3.8,-3 -3.8,3" fill="#222"/><polygon points="7.4,0 3.8,-3 3.8,3" fill="#222"/></g>
<rect x="272.9" y="895" width="1.8" height="5" fill="#c8c8c8"/>
<g transform="translate(144.0,0)"><rect x="146.3" y="876.5" width="6.3" height="7.2" rx="1.8" fill="#e8e9ec" stroke="#6a6a6a" stroke-width="0.9"/><rect x="148.8" y="877.5" width="1.3" height="5" fill="#b5b8bd"/><rect x="153.2" y="883.3" width="6.3" height="7.4" rx="1.8" fill="#e8e9ec" stroke="#6a6a6a" stroke-width="0.9"/><rect x="155.7" y="884.3" width="1.3" height="5.2" fill="#b5b8bd"/><path d="M147.8,884.5 V887.3 H150.6" stroke="#4a90e2" stroke-width="0.9" fill="none"/><polygon points="152,887.3 150.2,886 150.2,888.6" fill="#4a90e2"/></g>
<rect x="296.9" y="895" width="1.8" height="5" fill="#c8c8c8"/>
<g transform="translate(320.4,883.4)"><path d="M0,-5 V5 M-5,0 H5" stroke="#222" stroke-width="1.6"/><polygon points="0,-7.4 -3,-3.8 3,-3.8" fill="#222"/><polygon points="0,7.4 -3,3.8 3,3.8" fill="#222"/><polygon points="-7.4,0 -3.8,-3 -3.8,3" fill="#222"/><polygon points="7.4,0 3.8,-3 3.8,3" fill="#222"/></g>
<rect x="320.9" y="895" width="1.8" height="5" fill="#c8c8c8"/>
<g transform="translate(144.0,0)"><path d="M193.3,876 V890.9" stroke="#555" stroke-width="0.9"/><rect x="195.6" y="878.3" width="6" height="4" fill="#fff" stroke="#444" stroke-width="0.8"/><rect x="195.3" y="884.2" width="12.4" height="4.5" fill="#62ade8" stroke="#3f86c6" stroke-width="0.6"/></g>
<rect x="344.8" y="895" width="1.8" height="5" fill="#c8c8c8"/>
<g transform="translate(168.0,0)"><path d="M193.3,876 V890.9" stroke="#555" stroke-width="0.9"/><rect x="195.6" y="878.3" width="6" height="4" fill="#fff" stroke="#444" stroke-width="0.8"/><rect x="195.3" y="884.2" width="12.4" height="4.5" fill="#62ade8" stroke="#3f86c6" stroke-width="0.6"/></g>
<rect x="368.8" y="895" width="1.8" height="5" fill="#c8c8c8"/>
<g transform="translate(168.0,0)"><rect x="217.8" y="876.9" width="12.8" height="13.2" fill="none" stroke="#bbb" stroke-width="0.9"/><circle cx="217.8" cy="876.9" r="0.9" fill="#2e8fe6"/><circle cx="230.6" cy="876.9" r="0.9" fill="#2e8fe6"/><circle cx="217.8" cy="890.1" r="0.9" fill="#2e8fe6"/><circle cx="221" cy="880.3" r="0.8" fill="#2e8fe6"/><circle cx="227.5" cy="880.3" r="0.8" fill="#2e8fe6"/><circle cx="221" cy="886.3" r="0.8" fill="#2e8fe6"/><path d="M221.8,880.3 H226.7 M221,881.1 V885.5 M227.8,881 Q227,886 221.8,886.3" stroke="#666" stroke-width="0.6" fill="none"/><path d="M225.5,889.5 L230.5,884.5" stroke="#f0b43c" stroke-width="2.6"/><path d="M230.3,884.7 L232.3,882.7" stroke="#e8352c" stroke-width="2.6"/><polygon points="224.2,891 225,888.6 226.5,890.1" fill="#444"/></g>
<rect x="392.8" y="895" width="1.8" height="5" fill="#c8c8c8"/>
<g transform="translate(192.0,0)"><rect x="217.8" y="876.9" width="12.8" height="13.2" fill="none" stroke="#bbb" stroke-width="0.9"/><circle cx="217.8" cy="876.9" r="0.9" fill="#2e8fe6"/><circle cx="230.6" cy="876.9" r="0.9" fill="#2e8fe6"/><circle cx="217.8" cy="890.1" r="0.9" fill="#2e8fe6"/><circle cx="221" cy="880.3" r="0.8" fill="#2e8fe6"/><circle cx="227.5" cy="880.3" r="0.8" fill="#2e8fe6"/><circle cx="221" cy="886.3" r="0.8" fill="#2e8fe6"/><path d="M221.8,880.3 H226.7 M221,881.1 V885.5 M227.8,881 Q227,886 221.8,886.3" stroke="#666" stroke-width="0.6" fill="none"/><path d="M225.5,889.5 L230.5,884.5" stroke="#f0b43c" stroke-width="2.6"/><path d="M230.3,884.7 L232.3,882.7" stroke="#e8352c" stroke-width="2.6"/><polygon points="224.2,891 225,888.6 226.5,890.1" fill="#444"/></g>
<rect x="416.8" y="895" width="1.8" height="5" fill="#c8c8c8"/>
<g transform="translate(216.0,0)"><rect x="217.8" y="876.9" width="12.8" height="13.2" fill="none" stroke="#bbb" stroke-width="0.9"/><circle cx="217.8" cy="876.9" r="0.9" fill="#2e8fe6"/><circle cx="230.6" cy="876.9" r="0.9" fill="#2e8fe6"/><circle cx="217.8" cy="890.1" r="0.9" fill="#2e8fe6"/><circle cx="221" cy="880.3" r="0.8" fill="#2e8fe6"/><circle cx="227.5" cy="880.3" r="0.8" fill="#2e8fe6"/><circle cx="221" cy="886.3" r="0.8" fill="#2e8fe6"/><path d="M221.8,880.3 H226.7 M221,881.1 V885.5 M227.8,881 Q227,886 221.8,886.3" stroke="#666" stroke-width="0.6" fill="none"/><path d="M225.5,889.5 L230.5,884.5" stroke="#f0b43c" stroke-width="2.6"/><path d="M230.3,884.7 L232.3,882.7" stroke="#e8352c" stroke-width="2.6"/><polygon points="224.2,891 225,888.6 226.5,890.1" fill="#444"/></g>
<rect x="440.8" y="895" width="1.8" height="5" fill="#c8c8c8"/>
<g transform="translate(240.0,0)"><rect x="217.8" y="876.9" width="12.8" height="13.2" fill="none" stroke="#bbb" stroke-width="0.9"/><circle cx="217.8" cy="876.9" r="0.9" fill="#2e8fe6"/><circle cx="230.6" cy="876.9" r="0.9" fill="#2e8fe6"/><circle cx="217.8" cy="890.1" r="0.9" fill="#2e8fe6"/><circle cx="221" cy="880.3" r="0.8" fill="#2e8fe6"/><circle cx="227.5" cy="880.3" r="0.8" fill="#2e8fe6"/><circle cx="221" cy="886.3" r="0.8" fill="#2e8fe6"/><path d="M221.8,880.3 H226.7 M221,881.1 V885.5 M227.8,881 Q227,886 221.8,886.3" stroke="#666" stroke-width="0.6" fill="none"/><path d="M225.5,889.5 L230.5,884.5" stroke="#f0b43c" stroke-width="2.6"/><path d="M230.3,884.7 L232.3,882.7" stroke="#e8352c" stroke-width="2.6"/><polygon points="224.2,891 225,888.6 226.5,890.1" fill="#444"/></g>
<rect x="464.7" y="895" width="1.8" height="5" fill="#c8c8c8"/>
<g transform="translate(0.0,0)"><polygon points="481.3,889.2 490,889.2 493,886.4 493,888.3 490,891.4 481.3,891.4" fill="#bdbdbd"/><polygon points="481.3,879.4 484.2,876.5 492.8,876.5 490,879.4" fill="#8fcdf7"/><rect x="481.3" y="879.4" width="8.7" height="9.8" fill="#6cb0e8"/><polygon points="490,879.4 492.8,876.5 492.8,886.4 490,889.2" fill="#4d94d2"/><path d="M495.3,887.5 V878" stroke="#222" stroke-width="0.8"/><polygon points="495.3,876.6 494,879 496.6,879" fill="#222"/></g>
<rect x="488.7" y="895" width="1.8" height="5" fill="#c8c8c8"/>
<g transform="translate(24.0,0)"><polygon points="481.3,889.2 490,889.2 493,886.4 493,888.3 490,891.4 481.3,891.4" fill="#bdbdbd"/><polygon points="481.3,879.4 484.2,876.5 492.8,876.5 490,879.4" fill="#8fcdf7"/><rect x="481.3" y="879.4" width="8.7" height="9.8" fill="#6cb0e8"/><polygon points="490,879.4 492.8,876.5 492.8,886.4 490,889.2" fill="#4d94d2"/><path d="M495.3,887.5 V878" stroke="#222" stroke-width="0.8"/><polygon points="495.3,876.6 494,879 496.6,879" fill="#222"/></g>
<rect x="512.7" y="895" width="1.8" height="5" fill="#c8c8c8"/>
<g transform="translate(48.0,0)"><polygon points="481.3,889.2 490,889.2 493,886.4 493,888.3 490,891.4 481.3,891.4" fill="#bdbdbd"/><polygon points="481.3,879.4 484.2,876.5 492.8,876.5 490,879.4" fill="#8fcdf7"/><rect x="481.3" y="879.4" width="8.7" height="9.8" fill="#6cb0e8"/><polygon points="490,879.4 492.8,876.5 492.8,886.4 490,889.2" fill="#4d94d2"/><path d="M495.3,887.5 V878" stroke="#222" stroke-width="0.8"/><polygon points="495.3,876.6 494,879 496.6,879" fill="#222"/></g>
<rect x="536.7" y="895" width="1.8" height="5" fill="#c8c8c8"/>
<g transform="translate(72.0,0)"><polygon points="481.3,889.2 490,889.2 493,886.4 493,888.3 490,891.4 481.3,891.4" fill="#bdbdbd"/><polygon points="481.3,879.4 484.2,876.5 492.8,876.5 490,879.4" fill="#8fcdf7"/><rect x="481.3" y="879.4" width="8.7" height="9.8" fill="#6cb0e8"/><polygon points="490,879.4 492.8,876.5 492.8,886.4 490,889.2" fill="#4d94d2"/><path d="M495.3,887.5 V878" stroke="#222" stroke-width="0.8"/><polygon points="495.3,876.6 494,879 496.6,879" fill="#222"/></g>
<rect x="560.7" y="895" width="1.8" height="5" fill="#c8c8c8"/>
<g transform="translate(432.0,0)"><rect x="146.3" y="876.5" width="6.3" height="7.2" rx="1.8" fill="#e8e9ec" stroke="#6a6a6a" stroke-width="0.9"/><rect x="148.8" y="877.5" width="1.3" height="5" fill="#b5b8bd"/><rect x="153.2" y="883.3" width="6.3" height="7.4" rx="1.8" fill="#e8e9ec" stroke="#6a6a6a" stroke-width="0.9"/><rect x="155.7" y="884.3" width="1.3" height="5.2" fill="#b5b8bd"/><path d="M147.8,884.5 V887.3 H150.6" stroke="#4a90e2" stroke-width="0.9" fill="none"/><polygon points="152,887.3 150.2,886 150.2,888.6" fill="#4a90e2"/></g>
<rect x="584.6" y="895" width="1.8" height="5" fill="#c8c8c8"/>
<g transform="translate(608.4,883.4)"><path d="M0,-5 V5 M-5,0 H5" stroke="#222" stroke-width="1.6"/><polygon points="0,-7.4 -3,-3.8 3,-3.8" fill="#222"/><polygon points="0,7.4 -3,3.8 3,3.8" fill="#222"/><polygon points="-7.4,0 -3.8,-3 -3.8,3" fill="#222"/><polygon points="7.4,0 3.8,-3 3.8,3" fill="#222"/></g>
<rect x="608.6" y="895" width="1.8" height="5" fill="#c8c8c8"/>
<g transform="translate(480.0,0)"><rect x="146.3" y="876.5" width="6.3" height="7.2" rx="1.8" fill="#e8e9ec" stroke="#6a6a6a" stroke-width="0.9"/><rect x="148.8" y="877.5" width="1.3" height="5" fill="#b5b8bd"/><rect x="153.2" y="883.3" width="6.3" height="7.4" rx="1.8" fill="#e8e9ec" stroke="#6a6a6a" stroke-width="0.9"/><rect x="155.7" y="884.3" width="1.3" height="5.2" fill="#b5b8bd"/><path d="M147.8,884.5 V887.3 H150.6" stroke="#4a90e2" stroke-width="0.9" fill="none"/><polygon points="152,887.3 150.2,886 150.2,888.6" fill="#4a90e2"/></g>
<rect x="632.6" y="895" width="1.8" height="5" fill="#c8c8c8"/>
<g transform="translate(656.4,883.4)"><path d="M0,-5 V5 M-5,0 H5" stroke="#222" stroke-width="1.6"/><polygon points="0,-7.4 -3,-3.8 3,-3.8" fill="#222"/><polygon points="0,7.4 -3,3.8 3,3.8" fill="#222"/><polygon points="-7.4,0 -3.8,-3 -3.8,3" fill="#222"/><polygon points="7.4,0 3.8,-3 3.8,3" fill="#222"/></g>
<rect x="656.6" y="895" width="1.8" height="5" fill="#c8c8c8"/>
<g transform="translate(528.0,0)"><rect x="146.3" y="876.5" width="6.3" height="7.2" rx="1.8" fill="#e8e9ec" stroke="#6a6a6a" stroke-width="0.9"/><rect x="148.8" y="877.5" width="1.3" height="5" fill="#b5b8bd"/><rect x="153.2" y="883.3" width="6.3" height="7.4" rx="1.8" fill="#e8e9ec" stroke="#6a6a6a" stroke-width="0.9"/><rect x="155.7" y="884.3" width="1.3" height="5.2" fill="#b5b8bd"/><path d="M147.8,884.5 V887.3 H150.6" stroke="#4a90e2" stroke-width="0.9" fill="none"/><polygon points="152,887.3 150.2,886 150.2,888.6" fill="#4a90e2"/></g>
<rect x="680.6" y="895" width="1.8" height="5" fill="#c8c8c8"/>
<g transform="translate(704.4,883.4)"><path d="M0,-5 V5 M-5,0 H5" stroke="#222" stroke-width="1.6"/><polygon points="0,-7.4 -3,-3.8 3,-3.8" fill="#222"/><polygon points="0,7.4 -3,3.8 3,3.8" fill="#222"/><polygon points="-7.4,0 -3.8,-3 -3.8,3" fill="#222"/><polygon points="7.4,0 3.8,-3 3.8,3" fill="#222"/></g>
<rect x="704.5" y="895" width="1.8" height="5" fill="#c8c8c8"/>
<g transform="translate(576.0,0)"><rect x="146.3" y="876.5" width="6.3" height="7.2" rx="1.8" fill="#e8e9ec" stroke="#6a6a6a" stroke-width="0.9"/><rect x="148.8" y="877.5" width="1.3" height="5" fill="#b5b8bd"/><rect x="153.2" y="883.3" width="6.3" height="7.4" rx="1.8" fill="#e8e9ec" stroke="#6a6a6a" stroke-width="0.9"/><rect x="155.7" y="884.3" width="1.3" height="5.2" fill="#b5b8bd"/><path d="M147.8,884.5 V887.3 H150.6" stroke="#4a90e2" stroke-width="0.9" fill="none"/><polygon points="152,887.3 150.2,886 150.2,888.6" fill="#4a90e2"/></g>
<rect x="728.5" y="895" width="1.8" height="5" fill="#c8c8c8"/>
<g transform="translate(752.4,883.4)"><path d="M0,-5 V5 M-5,0 H5" stroke="#222" stroke-width="1.6"/><polygon points="0,-7.4 -3,-3.8 3,-3.8" fill="#222"/><polygon points="0,7.4 -3,3.8 3,3.8" fill="#222"/><polygon points="-7.4,0 -3.8,-3 -3.8,3" fill="#222"/><polygon points="7.4,0 3.8,-3 3.8,3" fill="#222"/></g>
<rect x="752.5" y="895" width="1.8" height="5" fill="#c8c8c8"/>
<g transform="translate(288.0,0)"><polygon points="481.3,889.2 490,889.2 493,886.4 493,888.3 490,891.4 481.3,891.4" fill="#bdbdbd"/><polygon points="481.3,879.4 484.2,876.5 492.8,876.5 490,879.4" fill="#8fcdf7"/><rect x="481.3" y="879.4" width="8.7" height="9.8" fill="#6cb0e8"/><polygon points="490,879.4 492.8,876.5 492.8,886.4 490,889.2" fill="#4d94d2"/><path d="M495.3,887.5 V878" stroke="#222" stroke-width="0.8"/><polygon points="495.3,876.6 494,879 496.6,879" fill="#222"/></g>
<rect x="776.5" y="895" width="1.8" height="5" fill="#c8c8c8"/>
<g transform="translate(648.0,0)"><rect x="146.3" y="876.5" width="6.3" height="7.2" rx="1.8" fill="#e8e9ec" stroke="#6a6a6a" stroke-width="0.9"/><rect x="148.8" y="877.5" width="1.3" height="5" fill="#b5b8bd"/><rect x="153.2" y="883.3" width="6.3" height="7.4" rx="1.8" fill="#e8e9ec" stroke="#6a6a6a" stroke-width="0.9"/><rect x="155.7" y="884.3" width="1.3" height="5.2" fill="#b5b8bd"/><path d="M147.8,884.5 V887.3 H150.6" stroke="#4a90e2" stroke-width="0.9" fill="none"/><polygon points="152,887.3 150.2,886 150.2,888.6" fill="#4a90e2"/></g>
<rect x="800.5" y="895" width="1.8" height="5" fill="#c8c8c8"/>
<g transform="translate(824.4,883.4)"><path d="M0,-5 V5 M-5,0 H5" stroke="#222" stroke-width="1.6"/><polygon points="0,-7.4 -3,-3.8 3,-3.8" fill="#222"/><polygon points="0,7.4 -3,3.8 3,3.8" fill="#222"/><polygon points="-7.4,0 -3.8,-3 -3.8,3" fill="#222"/><polygon points="7.4,0 3.8,-3 3.8,3" fill="#222"/></g>
<rect x="824.4" y="895" width="1.8" height="5" fill="#c8c8c8"/>
<g transform="translate(648.0,0)"><path d="M193.3,876 V890.9" stroke="#555" stroke-width="0.9"/><rect x="195.6" y="878.3" width="6" height="4" fill="#fff" stroke="#444" stroke-width="0.8"/><rect x="195.3" y="884.2" width="12.4" height="4.5" fill="#62ade8" stroke="#3f86c6" stroke-width="0.6"/></g>
<rect x="848.4" y="895" width="1.8" height="5" fill="#c8c8c8"/>
<g transform="translate(720.0,0)"><rect x="146.3" y="876.5" width="6.3" height="7.2" rx="1.8" fill="#e8e9ec" stroke="#6a6a6a" stroke-width="0.9"/><rect x="148.8" y="877.5" width="1.3" height="5" fill="#b5b8bd"/><rect x="153.2" y="883.3" width="6.3" height="7.4" rx="1.8" fill="#e8e9ec" stroke="#6a6a6a" stroke-width="0.9"/><rect x="155.7" y="884.3" width="1.3" height="5.2" fill="#b5b8bd"/><path d="M147.8,884.5 V887.3 H150.6" stroke="#4a90e2" stroke-width="0.9" fill="none"/><polygon points="152,887.3 150.2,886 150.2,888.6" fill="#4a90e2"/></g>
<rect x="872.4" y="895" width="1.8" height="5" fill="#c8c8c8"/>
<g transform="translate(896.4,883.4)"><path d="M0,-5 V5 M-5,0 H5" stroke="#222" stroke-width="1.6"/><polygon points="0,-7.4 -3,-3.8 3,-3.8" fill="#222"/><polygon points="0,7.4 -3,3.8 3,3.8" fill="#222"/><polygon points="-7.4,0 -3.8,-3 -3.8,3" fill="#222"/><polygon points="7.4,0 3.8,-3 3.8,3" fill="#222"/></g>
<rect x="896.4" y="895" width="1.8" height="5" fill="#c8c8c8"/>
<g transform="translate(768.0,0)"><rect x="146.3" y="876.5" width="6.3" height="7.2" rx="1.8" fill="#e8e9ec" stroke="#6a6a6a" stroke-width="0.9"/><rect x="148.8" y="877.5" width="1.3" height="5" fill="#b5b8bd"/><rect x="153.2" y="883.3" width="6.3" height="7.4" rx="1.8" fill="#e8e9ec" stroke="#6a6a6a" stroke-width="0.9"/><rect x="155.7" y="884.3" width="1.3" height="5.2" fill="#b5b8bd"/><path d="M147.8,884.5 V887.3 H150.6" stroke="#4a90e2" stroke-width="0.9" fill="none"/><polygon points="152,887.3 150.2,886 150.2,888.6" fill="#4a90e2"/></g>
<rect x="920.4" y="895" width="1.8" height="5" fill="#c8c8c8"/>
<g transform="translate(944.4,883.4)"><path d="M0,-5 V5 M-5,0 H5" stroke="#222" stroke-width="1.6"/><polygon points="0,-7.4 -3,-3.8 3,-3.8" fill="#222"/><polygon points="0,7.4 -3,3.8 3,3.8" fill="#222"/><polygon points="-7.4,0 -3.8,-3 -3.8,3" fill="#222"/><polygon points="7.4,0 3.8,-3 3.8,3" fill="#222"/></g>
<rect x="944.3" y="895" width="1.8" height="5" fill="#c8c8c8"/>
<g transform="translate(816.0,0)"><rect x="146.3" y="876.5" width="6.3" height="7.2" rx="1.8" fill="#e8e9ec" stroke="#6a6a6a" stroke-width="0.9"/><rect x="148.8" y="877.5" width="1.3" height="5" fill="#b5b8bd"/><rect x="153.2" y="883.3" width="6.3" height="7.4" rx="1.8" fill="#e8e9ec" stroke="#6a6a6a" stroke-width="0.9"/><rect x="155.7" y="884.3" width="1.3" height="5.2" fill="#b5b8bd"/><path d="M147.8,884.5 V887.3 H150.6" stroke="#4a90e2" stroke-width="0.9" fill="none"/><polygon points="152,887.3 150.2,886 150.2,888.6" fill="#4a90e2"/></g>
<rect x="968.3" y="895" width="1.8" height="5" fill="#c8c8c8"/>
<g transform="translate(992.4,883.4)"><path d="M0,-5 V5 M-5,0 H5" stroke="#222" stroke-width="1.6"/><polygon points="0,-7.4 -3,-3.8 3,-3.8" fill="#222"/><polygon points="0,7.4 -3,3.8 3,3.8" fill="#222"/><polygon points="-7.4,0 -3.8,-3 -3.8,3" fill="#222"/><polygon points="7.4,0 3.8,-3 3.8,3" fill="#222"/></g>
<rect x="992.3" y="895" width="1.8" height="5" fill="#c8c8c8"/>
<g transform="translate(816.0,0)"><path d="M193.3,876 V890.9" stroke="#555" stroke-width="0.9"/><rect x="195.6" y="878.3" width="6" height="4" fill="#fff" stroke="#444" stroke-width="0.8"/><rect x="195.3" y="884.2" width="12.4" height="4.5" fill="#62ade8" stroke="#3f86c6" stroke-width="0.6"/></g>
<rect x="1016.3" y="895" width="1.8" height="5" fill="#c8c8c8"/>
<g transform="translate(840.0,0)"><path d="M193.3,876 V890.9" stroke="#555" stroke-width="0.9"/><rect x="195.6" y="878.3" width="6" height="4" fill="#fff" stroke="#444" stroke-width="0.8"/><rect x="195.3" y="884.2" width="12.4" height="4.5" fill="#62ade8" stroke="#3f86c6" stroke-width="0.6"/></g>
<rect x="1040.3" y="895" width="1.8" height="5" fill="#c8c8c8"/>
<g transform="translate(864.0,0)"><path d="M193.3,876 V890.9" stroke="#555" stroke-width="0.9"/><rect x="195.6" y="878.3" width="6" height="4" fill="#fff" stroke="#444" stroke-width="0.8"/><rect x="195.3" y="884.2" width="12.4" height="4.5" fill="#62ade8" stroke="#3f86c6" stroke-width="0.6"/></g>
<rect x="1064.2" y="895" width="1.8" height="5" fill="#c8c8c8"/>
<g transform="translate(888.0,0)"><path d="M193.3,876 V890.9" stroke="#555" stroke-width="0.9"/><rect x="195.6" y="878.3" width="6" height="4" fill="#fff" stroke="#444" stroke-width="0.8"/><rect x="195.3" y="884.2" width="12.4" height="4.5" fill="#62ade8" stroke="#3f86c6" stroke-width="0.6"/></g>
<rect x="1088.2" y="895" width="1.8" height="5" fill="#c8c8c8"/>
<g transform="translate(912.0,0)"><path d="M193.3,876 V890.9" stroke="#555" stroke-width="0.9"/><rect x="195.6" y="878.3" width="6" height="4" fill="#fff" stroke="#444" stroke-width="0.8"/><rect x="195.3" y="884.2" width="12.4" height="4.5" fill="#62ade8" stroke="#3f86c6" stroke-width="0.6"/></g>
<rect x="1112.2" y="895" width="1.8" height="5" fill="#c8c8c8"/>
<g transform="translate(936.0,0)"><path d="M193.3,876 V890.9" stroke="#555" stroke-width="0.9"/><rect x="195.6" y="878.3" width="6" height="4" fill="#fff" stroke="#444" stroke-width="0.8"/><rect x="195.3" y="884.2" width="12.4" height="4.5" fill="#62ade8" stroke="#3f86c6" stroke-width="0.6"/></g>
<rect x="1136.2" y="895" width="1.8" height="5" fill="#c8c8c8"/>
<g transform="translate(1008.0,0)"><rect x="146.3" y="876.5" width="6.3" height="7.2" rx="1.8" fill="#e8e9ec" stroke="#6a6a6a" stroke-width="0.9"/><rect x="148.8" y="877.5" width="1.3" height="5" fill="#b5b8bd"/><rect x="153.2" y="883.3" width="6.3" height="7.4" rx="1.8" fill="#e8e9ec" stroke="#6a6a6a" stroke-width="0.9"/><rect x="155.7" y="884.3" width="1.3" height="5.2" fill="#b5b8bd"/><path d="M147.8,884.5 V887.3 H150.6" stroke="#4a90e2" stroke-width="0.9" fill="none"/><polygon points="152,887.3 150.2,886 150.2,888.6" fill="#4a90e2"/></g>
<rect x="1160.2" y="895" width="1.8" height="5" fill="#c8c8c8"/>
<g transform="translate(1184.4,883.4)"><path d="M0,-5 V5 M-5,0 H5" stroke="#222" stroke-width="1.6"/><polygon points="0,-7.4 -3,-3.8 3,-3.8" fill="#222"/><polygon points="0,7.4 -3,3.8 3,3.8" fill="#222"/><polygon points="-7.4,0 -3.8,-3 -3.8,3" fill="#222"/><polygon points="7.4,0 3.8,-3 3.8,3" fill="#222"/></g>
<rect x="1184.1" y="895" width="1.8" height="5" fill="#c8c8c8"/>
<g transform="translate(1008.0,0)"><path d="M193.3,876 V890.9" stroke="#555" stroke-width="0.9"/><rect x="195.6" y="878.3" width="6" height="4" fill="#fff" stroke="#444" stroke-width="0.8"/><rect x="195.3" y="884.2" width="12.4" height="4.5" fill="#62ade8" stroke="#3f86c6" stroke-width="0.6"/></g>
<rect x="1208.1" y="895" width="1.8" height="5" fill="#c8c8c8"/>
<g transform="translate(1032.0,0)"><path d="M193.3,876 V890.9" stroke="#555" stroke-width="0.9"/><rect x="195.6" y="878.3" width="6" height="4" fill="#fff" stroke="#444" stroke-width="0.8"/><rect x="195.3" y="884.2" width="12.4" height="4.5" fill="#62ade8" stroke="#3f86c6" stroke-width="0.6"/></g>
<rect x="1232.1" y="895" width="1.8" height="5" fill="#c8c8c8"/>
<g transform="translate(1104.0,0)"><rect x="146.3" y="876.5" width="6.3" height="7.2" rx="1.8" fill="#e8e9ec" stroke="#6a6a6a" stroke-width="0.9"/><rect x="148.8" y="877.5" width="1.3" height="5" fill="#b5b8bd"/><rect x="153.2" y="883.3" width="6.3" height="7.4" rx="1.8" fill="#e8e9ec" stroke="#6a6a6a" stroke-width="0.9"/><rect x="155.7" y="884.3" width="1.3" height="5.2" fill="#b5b8bd"/><path d="M147.8,884.5 V887.3 H150.6" stroke="#4a90e2" stroke-width="0.9" fill="none"/><polygon points="152,887.3 150.2,886 150.2,888.6" fill="#4a90e2"/></g>
<rect x="1256.1" y="895" width="1.8" height="5" fill="#c8c8c8"/>
<g transform="translate(1280.4,883.4)"><path d="M0,-5 V5 M-5,0 H5" stroke="#222" stroke-width="1.6"/><polygon points="0,-7.4 -3,-3.8 3,-3.8" fill="#222"/><polygon points="0,7.4 -3,3.8 3,3.8" fill="#222"/><polygon points="-7.4,0 -3.8,-3 -3.8,3" fill="#222"/><polygon points="7.4,0 3.8,-3 3.8,3" fill="#222"/></g>
<rect x="1280.1" y="895" width="1.8" height="5" fill="#c8c8c8"/>
<g transform="translate(1152.0,0)"><rect x="146.3" y="876.5" width="6.3" height="7.2" rx="1.8" fill="#e8e9ec" stroke="#6a6a6a" stroke-width="0.9"/><rect x="148.8" y="877.5" width="1.3" height="5" fill="#b5b8bd"/><rect x="153.2" y="883.3" width="6.3" height="7.4" rx="1.8" fill="#e8e9ec" stroke="#6a6a6a" stroke-width="0.9"/><rect x="155.7" y="884.3" width="1.3" height="5.2" fill="#b5b8bd"/><path d="M147.8,884.5 V887.3 H150.6" stroke="#4a90e2" stroke-width="0.9" fill="none"/><polygon points="152,887.3 150.2,886 150.2,888.6" fill="#4a90e2"/></g>
<rect x="1304.0" y="895" width="1.8" height="5" fill="#c8c8c8"/>
<g transform="translate(1328.4,883.4)"><path d="M0,-5 V5 M-5,0 H5" stroke="#222" stroke-width="1.6"/><polygon points="0,-7.4 -3,-3.8 3,-3.8" fill="#222"/><polygon points="0,7.4 -3,3.8 3,3.8" fill="#222"/><polygon points="-7.4,0 -3.8,-3 -3.8,3" fill="#222"/><polygon points="7.4,0 3.8,-3 3.8,3" fill="#222"/></g>
<rect x="1328.0" y="895" width="1.8" height="5" fill="#c8c8c8"/>
<g transform="translate(1200.0,0)"><rect x="146.3" y="876.5" width="6.3" height="7.2" rx="1.8" fill="#e8e9ec" stroke="#6a6a6a" stroke-width="0.9"/><rect x="148.8" y="877.5" width="1.3" height="5" fill="#b5b8bd"/><rect x="153.2" y="883.3" width="6.3" height="7.4" rx="1.8" fill="#e8e9ec" stroke="#6a6a6a" stroke-width="0.9"/><rect x="155.7" y="884.3" width="1.3" height="5.2" fill="#b5b8bd"/><path d="M147.8,884.5 V887.3 H150.6" stroke="#4a90e2" stroke-width="0.9" fill="none"/><polygon points="152,887.3 150.2,886 150.2,888.6" fill="#4a90e2"/></g>
<rect x="1352.0" y="895" width="1.8" height="5" fill="#c8c8c8"/>
<g transform="translate(1376.4,883.4)"><path d="M0,-5 V5 M-5,0 H5" stroke="#222" stroke-width="1.6"/><polygon points="0,-7.4 -3,-3.8 3,-3.8" fill="#222"/><polygon points="0,7.4 -3,3.8 3,3.8" fill="#222"/><polygon points="-7.4,0 -3.8,-3 -3.8,3" fill="#222"/><polygon points="7.4,0 3.8,-3 3.8,3" fill="#222"/></g>
<rect x="1376.0" y="895" width="1.8" height="5" fill="#c8c8c8"/>
<g transform="translate(1200.0,0)"><path d="M193.3,876 V890.9" stroke="#555" stroke-width="0.9"/><rect x="195.6" y="878.3" width="6" height="4" fill="#fff" stroke="#444" stroke-width="0.8"/><rect x="195.3" y="884.2" width="12.4" height="4.5" fill="#62ade8" stroke="#3f86c6" stroke-width="0.6"/></g>
<rect x="1400.0" y="895" width="1.8" height="5" fill="#c8c8c8"/>
<g transform="translate(1224.0,0)"><path d="M193.3,876 V890.9" stroke="#555" stroke-width="0.9"/><rect x="195.6" y="878.3" width="6" height="4" fill="#fff" stroke="#444" stroke-width="0.8"/><rect x="195.3" y="884.2" width="12.4" height="4.5" fill="#62ade8" stroke="#3f86c6" stroke-width="0.6"/></g>
<rect x="1423.9" y="895" width="1.8" height="5" fill="#c8c8c8"/>
<g transform="translate(1248.0,0)"><path d="M193.3,876 V890.9" stroke="#555" stroke-width="0.9"/><rect x="195.6" y="878.3" width="6" height="4" fill="#fff" stroke="#444" stroke-width="0.8"/><rect x="195.3" y="884.2" width="12.4" height="4.5" fill="#62ade8" stroke="#3f86c6" stroke-width="0.6"/></g>
<rect x="1447.9" y="895" width="1.8" height="5" fill="#c8c8c8"/>
<g transform="translate(1320.0,0)"><rect x="146.3" y="876.5" width="6.3" height="7.2" rx="1.8" fill="#e8e9ec" stroke="#6a6a6a" stroke-width="0.9"/><rect x="148.8" y="877.5" width="1.3" height="5" fill="#b5b8bd"/><rect x="153.2" y="883.3" width="6.3" height="7.4" rx="1.8" fill="#e8e9ec" stroke="#6a6a6a" stroke-width="0.9"/><rect x="155.7" y="884.3" width="1.3" height="5.2" fill="#b5b8bd"/><path d="M147.8,884.5 V887.3 H150.6" stroke="#4a90e2" stroke-width="0.9" fill="none"/><polygon points="152,887.3 150.2,886 150.2,888.6" fill="#4a90e2"/></g>
<rect x="1471.9" y="895" width="1.8" height="5" fill="#c8c8c8"/>
<g transform="translate(1496.4,883.4)"><path d="M0,-5 V5 M-5,0 H5" stroke="#222" stroke-width="1.6"/><polygon points="0,-7.4 -3,-3.8 3,-3.8" fill="#222"/><polygon points="0,7.4 -3,3.8 3,3.8" fill="#222"/><polygon points="-7.4,0 -3.8,-3 -3.8,3" fill="#222"/><polygon points="7.4,0 3.8,-3 3.8,3" fill="#222"/></g>
<rect x="1495.9" y="895" width="1.8" height="5" fill="#c8c8c8"/>
<g transform="translate(1320.0,0)"><path d="M193.3,876 V890.9" stroke="#555" stroke-width="0.9"/><rect x="195.6" y="878.3" width="6" height="4" fill="#fff" stroke="#444" stroke-width="0.8"/><rect x="195.3" y="884.2" width="12.4" height="4.5" fill="#62ade8" stroke="#3f86c6" stroke-width="0.6"/></g>
<rect x="1519.9" y="895" width="1.8" height="5" fill="#c8c8c8"/>
<g transform="translate(1392.0,0)"><rect x="146.3" y="876.5" width="6.3" height="7.2" rx="1.8" fill="#e8e9ec" stroke="#6a6a6a" stroke-width="0.9"/><rect x="148.8" y="877.5" width="1.3" height="5" fill="#b5b8bd"/><rect x="153.2" y="883.3" width="6.3" height="7.4" rx="1.8" fill="#e8e9ec" stroke="#6a6a6a" stroke-width="0.9"/><rect x="155.7" y="884.3" width="1.3" height="5.2" fill="#b5b8bd"/><path d="M147.8,884.5 V887.3 H150.6" stroke="#4a90e2" stroke-width="0.9" fill="none"/><polygon points="152,887.3 150.2,886 150.2,888.6" fill="#4a90e2"/></g>
<rect x="1543.8" y="895" width="1.8" height="5" fill="#c8c8c8"/>
<g transform="translate(1568.4,883.4)"><path d="M0,-5 V5 M-5,0 H5" stroke="#222" stroke-width="1.6"/><polygon points="0,-7.4 -3,-3.8 3,-3.8" fill="#222"/><polygon points="0,7.4 -3,3.8 3,3.8" fill="#222"/><polygon points="-7.4,0 -3.8,-3 -3.8,3" fill="#222"/><polygon points="7.4,0 3.8,-3 3.8,3" fill="#222"/></g>
<rect x="1567.8" y="895" width="1.8" height="5" fill="#c8c8c8"/>
<g transform="translate(1440.0,0)"><rect x="146.3" y="876.5" width="6.3" height="7.2" rx="1.8" fill="#e8e9ec" stroke="#6a6a6a" stroke-width="0.9"/><rect x="148.8" y="877.5" width="1.3" height="5" fill="#b5b8bd"/><rect x="153.2" y="883.3" width="6.3" height="7.4" rx="1.8" fill="#e8e9ec" stroke="#6a6a6a" stroke-width="0.9"/><rect x="155.7" y="884.3" width="1.3" height="5.2" fill="#b5b8bd"/><path d="M147.8,884.5 V887.3 H150.6" stroke="#4a90e2" stroke-width="0.9" fill="none"/><polygon points="152,887.3 150.2,886 150.2,888.6" fill="#4a90e2"/></g>
<rect x="1591.8" y="895" width="1.8" height="5" fill="#c8c8c8"/>
<g transform="translate(1616.4,883.4)"><path d="M0,-5 V5 M-5,0 H5" stroke="#222" stroke-width="1.6"/><polygon points="0,-7.4 -3,-3.8 3,-3.8" fill="#222"/><polygon points="0,7.4 -3,3.8 3,3.8" fill="#222"/><polygon points="-7.4,0 -3.8,-3 -3.8,3" fill="#222"/><polygon points="7.4,0 3.8,-3 3.8,3" fill="#222"/></g>
<rect x="1615.8" y="895" width="1.8" height="5" fill="#c8c8c8"/>
<g transform="translate(1488.0,0)"><rect x="146.3" y="876.5" width="6.3" height="7.2" rx="1.8" fill="#e8e9ec" stroke="#6a6a6a" stroke-width="0.9"/><rect x="148.8" y="877.5" width="1.3" height="5" fill="#b5b8bd"/><rect x="153.2" y="883.3" width="6.3" height="7.4" rx="1.8" fill="#e8e9ec" stroke="#6a6a6a" stroke-width="0.9"/><rect x="155.7" y="884.3" width="1.3" height="5.2" fill="#b5b8bd"/><path d="M147.8,884.5 V887.3 H150.6" stroke="#4a90e2" stroke-width="0.9" fill="none"/><polygon points="152,887.3 150.2,886 150.2,888.6" fill="#4a90e2"/></g>
<rect x="1639.8" y="895" width="1.8" height="5" fill="#c8c8c8"/>
<g transform="translate(1664.4,883.4)"><path d="M0,-5 V5 M-5,0 H5" stroke="#222" stroke-width="1.6"/><polygon points="0,-7.4 -3,-3.8 3,-3.8" fill="#222"/><polygon points="0,7.4 -3,3.8 3,3.8" fill="#222"/><polygon points="-7.4,0 -3.8,-3 -3.8,3" fill="#222"/><polygon points="7.4,0 3.8,-3 3.8,3" fill="#222"/></g>
<rect x="1663.7" y="895" width="1.8" height="5" fill="#c8c8c8"/>
<g transform="translate(1488.0,0)"><path d="M193.3,876 V890.9" stroke="#555" stroke-width="0.9"/><rect x="195.6" y="878.3" width="6" height="4" fill="#fff" stroke="#444" stroke-width="0.8"/><rect x="195.3" y="884.2" width="12.4" height="4.5" fill="#62ade8" stroke="#3f86c6" stroke-width="0.6"/></g>
<rect x="1687.7" y="895" width="1.8" height="5" fill="#c8c8c8"/>
<g transform="translate(1512.0,0)"><path d="M193.3,876 V890.9" stroke="#555" stroke-width="0.9"/><rect x="195.6" y="878.3" width="6" height="4" fill="#fff" stroke="#444" stroke-width="0.8"/><rect x="195.3" y="884.2" width="12.4" height="4.5" fill="#62ade8" stroke="#3f86c6" stroke-width="0.6"/></g>
<rect x="1711.7" y="895" width="1.8" height="5" fill="#c8c8c8"/>
<g transform="translate(1536.0,0)"><path d="M193.3,876 V890.9" stroke="#555" stroke-width="0.9"/><rect x="195.6" y="878.3" width="6" height="4" fill="#fff" stroke="#444" stroke-width="0.8"/><rect x="195.3" y="884.2" width="12.4" height="4.5" fill="#62ade8" stroke="#3f86c6" stroke-width="0.6"/></g>
<rect x="1735.7" y="895" width="1.8" height="5" fill="#c8c8c8"/>
<g transform="translate(1560.0,0)"><path d="M193.3,876 V890.9" stroke="#555" stroke-width="0.9"/><rect x="195.6" y="878.3" width="6" height="4" fill="#fff" stroke="#444" stroke-width="0.8"/><rect x="195.3" y="884.2" width="12.4" height="4.5" fill="#62ade8" stroke="#3f86c6" stroke-width="0.6"/></g>
<rect x="1759.7" y="895" width="1.8" height="5" fill="#c8c8c8"/>
<g transform="translate(1584.0,0)"><path d="M193.3,876 V890.9" stroke="#555" stroke-width="0.9"/><rect x="195.6" y="878.3" width="6" height="4" fill="#fff" stroke="#444" stroke-width="0.8"/><rect x="195.3" y="884.2" width="12.4" height="4.5" fill="#62ade8" stroke="#3f86c6" stroke-width="0.6"/></g>
<rect x="1783.6" y="895" width="1.8" height="5" fill="#c8c8c8"/>
<g transform="translate(1608.0,0)"><path d="M193.3,876 V890.9" stroke="#555" stroke-width="0.9"/><rect x="195.6" y="878.3" width="6" height="4" fill="#fff" stroke="#444" stroke-width="0.8"/><rect x="195.3" y="884.2" width="12.4" height="4.5" fill="#62ade8" stroke="#3f86c6" stroke-width="0.6"/></g>
<rect x="1807.6" y="895" width="1.8" height="5" fill="#c8c8c8"/>
<g transform="translate(1632.0,0)"><path d="M193.3,876 V890.9" stroke="#555" stroke-width="0.9"/><rect x="195.6" y="878.3" width="6" height="4" fill="#fff" stroke="#444" stroke-width="0.8"/><rect x="195.3" y="884.2" width="12.4" height="4.5" fill="#62ade8" stroke="#3f86c6" stroke-width="0.6"/></g>
<rect x="1831.6" y="895" width="1.8" height="5" fill="#c8c8c8"/>
<g transform="translate(1656.0,0)"><path d="M193.3,876 V890.9" stroke="#555" stroke-width="0.9"/><rect x="195.6" y="878.3" width="6" height="4" fill="#fff" stroke="#444" stroke-width="0.8"/><rect x="195.3" y="884.2" width="12.4" height="4.5" fill="#62ade8" stroke="#3f86c6" stroke-width="0.6"/></g>
<rect x="1855.6" y="895" width="1.8" height="5" fill="#c8c8c8"/>
<polygon points="1863.4,869.8 1873.5,869.8 1873.5,873.5 1869.4,877 1867.6,877 1863.4,873.5" fill="#5f5f5f"/><rect x="1867.6" y="876" width="1.8" height="25" fill="#5f5f5f"/>
<rect x="1792.5" y="861.4" width="109" height="6.6" rx="3.3" fill="#c6c6c6"/>
<polygon points="1905.92,886.74 1905.92,890.06 1903.74,890.37 1903.60,890.71 1904.92,892.47 1902.57,894.82 1900.81,893.50 1900.47,893.64 1900.16,895.82 1896.84,895.82 1896.53,893.64 1896.19,893.50 1894.43,894.82 1892.08,892.47 1893.40,890.71 1893.26,890.37 1891.08,890.06 1891.08,886.74 1893.26,886.43 1893.40,886.09 1892.08,884.33 1894.43,881.98 1896.19,883.30 1896.53,883.16 1896.84,880.98 1900.16,880.98 1900.47,883.16 1900.81,883.30 1902.57,881.98 1904.92,884.33 1903.60,886.09 1903.74,886.43" fill="#8a8a8a"/><circle cx="1898.5" cy="888.4" r="2.6" fill="#f1f1f1"/>
</svg>
</div><div id="strip"></div>
</body></html>
